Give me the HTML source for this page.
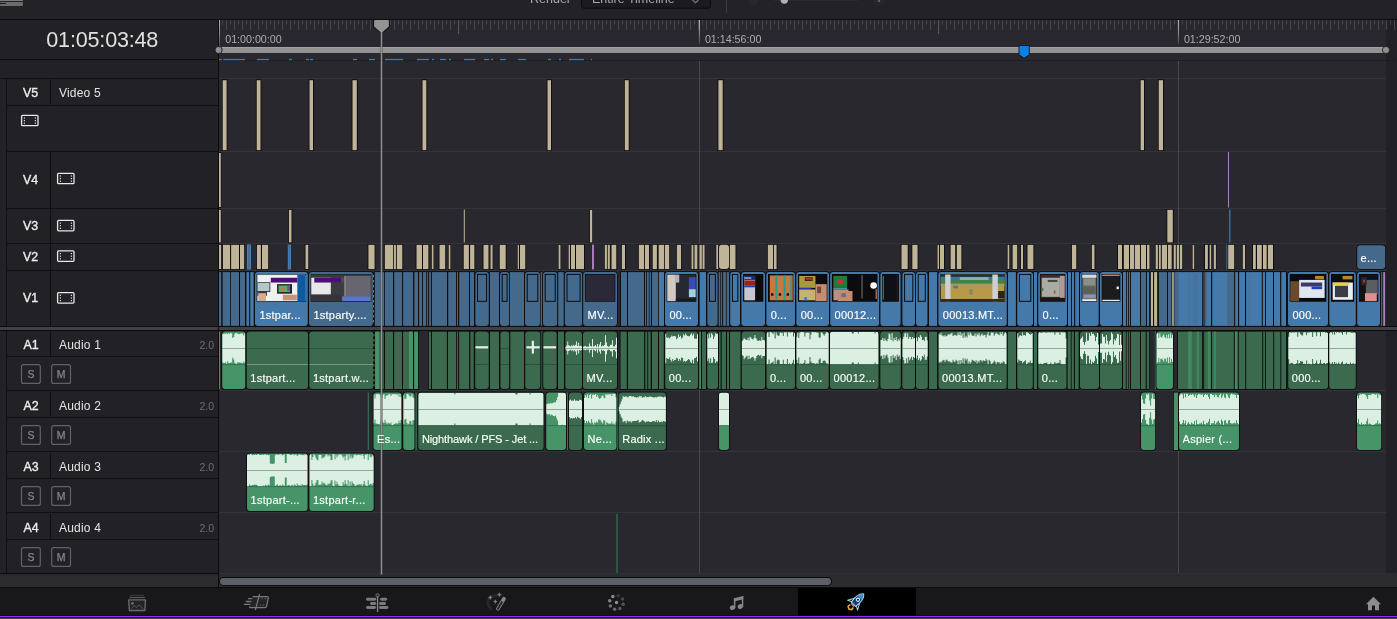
<!DOCTYPE html>
<html><head><meta charset="utf-8"><title>Timeline</title>
<style>
html,body{margin:0;padding:0;background:#28282e;}
body{width:1397px;height:619px;overflow:hidden;position:relative;font-family:"Liberation Sans",sans-serif;}
svg{position:absolute;left:0;top:0;}
.t{position:absolute;white-space:nowrap;font-family:"Liberation Sans",sans-serif;}
#tx{position:absolute;left:0;top:0;width:1397px;height:619px;will-change:transform;transform:translateZ(0);}
</style></head><body>
<svg width="1397" height="619" viewBox="0 0 1397 619" shape-rendering="auto">
<rect x="0.00" y="0.00" width="1397.00" height="619.00" fill="#28282e"/>
<rect x="0.00" y="0.00" width="1397.00" height="19.00" fill="#222227"/>
<rect x="0.00" y="19.00" width="1397.00" height="1.00" fill="#0e0e10"/>
<rect x="0.00" y="20.00" width="218.00" height="556.00" fill="#212126"/>
<rect x="1386.00" y="20.00" width="11.00" height="557.00" fill="#202025"/>
<rect x="0.00" y="59.00" width="218.00" height="1.10" fill="#0e0e10"/>
<rect x="218.00" y="60.00" width="1179.00" height="1.00" fill="#1d1d22"/>
<rect x="218.00" y="78.00" width="1168.00" height="1.00" fill="#33333a"/>
<rect x="218.00" y="20.00" width="1.00" height="556.00" fill="#0e0e10"/>
<rect x="219.00" y="151.00" width="1167.00" height="1.00" fill="#33333a"/>
<rect x="219.00" y="208.00" width="1167.00" height="1.00" fill="#33333a"/>
<rect x="219.00" y="243.00" width="1167.00" height="1.00" fill="#33333a"/>
<rect x="219.00" y="270.00" width="1167.00" height="1.00" fill="#33333a"/>
<rect x="219.00" y="390.00" width="1167.00" height="1.00" fill="#33333a"/>
<rect x="219.00" y="451.00" width="1167.00" height="1.00" fill="#33333a"/>
<rect x="219.00" y="512.00" width="1167.00" height="1.00" fill="#33333a"/>
<rect x="699.00" y="61.00" width="1.00" height="512.00" fill="#47474d"/>
<rect x="1178.00" y="61.00" width="1.00" height="512.00" fill="#47474d"/>
<rect x="222.10" y="20.00" width="1.00" height="4.80" fill="#42464d"/>
<rect x="226.10" y="20.00" width="1.00" height="9.90" fill="#464a51"/>
<rect x="230.10" y="20.00" width="1.00" height="4.80" fill="#42464d"/>
<rect x="234.10" y="20.00" width="1.00" height="9.90" fill="#464a51"/>
<rect x="238.10" y="20.00" width="1.00" height="4.80" fill="#42464d"/>
<rect x="242.10" y="20.00" width="1.00" height="9.90" fill="#464a51"/>
<rect x="246.10" y="20.00" width="1.00" height="4.80" fill="#42464d"/>
<rect x="250.10" y="20.00" width="1.00" height="9.90" fill="#464a51"/>
<rect x="254.10" y="20.00" width="1.00" height="4.80" fill="#42464d"/>
<rect x="258.10" y="20.00" width="1.00" height="9.90" fill="#464a51"/>
<rect x="262.10" y="20.00" width="1.00" height="4.80" fill="#42464d"/>
<rect x="266.10" y="20.00" width="1.00" height="9.90" fill="#464a51"/>
<rect x="270.10" y="20.00" width="1.00" height="4.80" fill="#42464d"/>
<rect x="274.10" y="20.00" width="1.00" height="9.90" fill="#464a51"/>
<rect x="278.10" y="20.00" width="1.00" height="4.80" fill="#42464d"/>
<rect x="282.10" y="20.00" width="1.00" height="9.90" fill="#464a51"/>
<rect x="286.10" y="20.00" width="1.00" height="4.80" fill="#42464d"/>
<rect x="290.10" y="20.00" width="1.00" height="9.90" fill="#464a51"/>
<rect x="294.10" y="20.00" width="1.00" height="4.80" fill="#42464d"/>
<rect x="298.10" y="20.00" width="1.00" height="9.90" fill="#464a51"/>
<rect x="302.10" y="20.00" width="1.00" height="4.80" fill="#42464d"/>
<rect x="306.10" y="20.00" width="1.00" height="9.90" fill="#464a51"/>
<rect x="310.10" y="20.00" width="1.00" height="4.80" fill="#42464d"/>
<rect x="314.10" y="20.00" width="1.00" height="9.90" fill="#464a51"/>
<rect x="318.10" y="20.00" width="1.00" height="4.80" fill="#42464d"/>
<rect x="322.10" y="20.00" width="1.00" height="9.90" fill="#464a51"/>
<rect x="326.10" y="20.00" width="1.00" height="4.80" fill="#42464d"/>
<rect x="330.10" y="20.00" width="1.00" height="9.90" fill="#464a51"/>
<rect x="334.10" y="20.00" width="1.00" height="4.80" fill="#42464d"/>
<rect x="338.10" y="20.00" width="1.00" height="9.90" fill="#464a51"/>
<rect x="342.10" y="20.00" width="1.00" height="4.80" fill="#42464d"/>
<rect x="346.10" y="20.00" width="1.00" height="9.90" fill="#464a51"/>
<rect x="350.10" y="20.00" width="1.00" height="4.80" fill="#42464d"/>
<rect x="354.10" y="20.00" width="1.00" height="9.90" fill="#464a51"/>
<rect x="358.10" y="20.00" width="1.00" height="4.80" fill="#42464d"/>
<rect x="362.10" y="20.00" width="1.00" height="9.90" fill="#464a51"/>
<rect x="366.10" y="20.00" width="1.00" height="4.80" fill="#42464d"/>
<rect x="370.10" y="20.00" width="1.00" height="9.90" fill="#464a51"/>
<rect x="374.10" y="20.00" width="1.00" height="4.80" fill="#42464d"/>
<rect x="378.10" y="20.00" width="1.00" height="9.90" fill="#464a51"/>
<rect x="382.10" y="20.00" width="1.00" height="4.80" fill="#42464d"/>
<rect x="386.10" y="20.00" width="1.00" height="9.90" fill="#464a51"/>
<rect x="390.10" y="20.00" width="1.00" height="4.80" fill="#42464d"/>
<rect x="394.10" y="20.00" width="1.00" height="9.90" fill="#464a51"/>
<rect x="398.10" y="20.00" width="1.00" height="4.80" fill="#42464d"/>
<rect x="402.10" y="20.00" width="1.00" height="9.90" fill="#464a51"/>
<rect x="406.10" y="20.00" width="1.00" height="4.80" fill="#42464d"/>
<rect x="410.10" y="20.00" width="1.00" height="9.90" fill="#464a51"/>
<rect x="414.10" y="20.00" width="1.00" height="4.80" fill="#42464d"/>
<rect x="418.10" y="20.00" width="1.00" height="9.90" fill="#464a51"/>
<rect x="422.10" y="20.00" width="1.00" height="4.80" fill="#42464d"/>
<rect x="426.10" y="20.00" width="1.00" height="9.90" fill="#464a51"/>
<rect x="430.10" y="20.00" width="1.00" height="4.80" fill="#42464d"/>
<rect x="434.10" y="20.00" width="1.00" height="9.90" fill="#464a51"/>
<rect x="438.10" y="20.00" width="1.00" height="4.80" fill="#42464d"/>
<rect x="442.10" y="20.00" width="1.00" height="9.90" fill="#464a51"/>
<rect x="446.10" y="20.00" width="1.00" height="4.80" fill="#42464d"/>
<rect x="450.10" y="20.00" width="1.00" height="9.90" fill="#464a51"/>
<rect x="454.10" y="20.00" width="1.00" height="4.80" fill="#42464d"/>
<rect x="458.10" y="20.00" width="1.00" height="9.90" fill="#464a51"/>
<rect x="462.10" y="20.00" width="1.00" height="4.80" fill="#42464d"/>
<rect x="466.10" y="20.00" width="1.00" height="9.90" fill="#464a51"/>
<rect x="470.10" y="20.00" width="1.00" height="4.80" fill="#42464d"/>
<rect x="474.10" y="20.00" width="1.00" height="9.90" fill="#464a51"/>
<rect x="478.10" y="20.00" width="1.00" height="4.80" fill="#42464d"/>
<rect x="482.10" y="20.00" width="1.00" height="9.90" fill="#464a51"/>
<rect x="486.10" y="20.00" width="1.00" height="4.80" fill="#42464d"/>
<rect x="490.10" y="20.00" width="1.00" height="9.90" fill="#464a51"/>
<rect x="494.10" y="20.00" width="1.00" height="4.80" fill="#42464d"/>
<rect x="498.10" y="20.00" width="1.00" height="9.90" fill="#464a51"/>
<rect x="502.10" y="20.00" width="1.00" height="4.80" fill="#42464d"/>
<rect x="506.10" y="20.00" width="1.00" height="9.90" fill="#464a51"/>
<rect x="510.10" y="20.00" width="1.00" height="4.80" fill="#42464d"/>
<rect x="514.10" y="20.00" width="1.00" height="9.90" fill="#464a51"/>
<rect x="518.10" y="20.00" width="1.00" height="4.80" fill="#42464d"/>
<rect x="522.10" y="20.00" width="1.00" height="9.90" fill="#464a51"/>
<rect x="526.10" y="20.00" width="1.00" height="4.80" fill="#42464d"/>
<rect x="530.10" y="20.00" width="1.00" height="9.90" fill="#464a51"/>
<rect x="534.10" y="20.00" width="1.00" height="4.80" fill="#42464d"/>
<rect x="538.10" y="20.00" width="1.00" height="9.90" fill="#464a51"/>
<rect x="542.10" y="20.00" width="1.00" height="4.80" fill="#42464d"/>
<rect x="546.10" y="20.00" width="1.00" height="9.90" fill="#464a51"/>
<rect x="550.10" y="20.00" width="1.00" height="4.80" fill="#42464d"/>
<rect x="554.10" y="20.00" width="1.00" height="9.90" fill="#464a51"/>
<rect x="558.10" y="20.00" width="1.00" height="4.80" fill="#42464d"/>
<rect x="562.10" y="20.00" width="1.00" height="9.90" fill="#464a51"/>
<rect x="566.10" y="20.00" width="1.00" height="4.80" fill="#42464d"/>
<rect x="570.10" y="20.00" width="1.00" height="9.90" fill="#464a51"/>
<rect x="574.10" y="20.00" width="1.00" height="4.80" fill="#42464d"/>
<rect x="578.10" y="20.00" width="1.00" height="9.90" fill="#464a51"/>
<rect x="582.10" y="20.00" width="1.00" height="4.80" fill="#42464d"/>
<rect x="586.10" y="20.00" width="1.00" height="9.90" fill="#464a51"/>
<rect x="590.10" y="20.00" width="1.00" height="4.80" fill="#42464d"/>
<rect x="594.10" y="20.00" width="1.00" height="9.90" fill="#464a51"/>
<rect x="598.10" y="20.00" width="1.00" height="4.80" fill="#42464d"/>
<rect x="602.10" y="20.00" width="1.00" height="9.90" fill="#464a51"/>
<rect x="606.10" y="20.00" width="1.00" height="4.80" fill="#42464d"/>
<rect x="610.10" y="20.00" width="1.00" height="9.90" fill="#464a51"/>
<rect x="614.10" y="20.00" width="1.00" height="4.80" fill="#42464d"/>
<rect x="618.10" y="20.00" width="1.00" height="9.90" fill="#464a51"/>
<rect x="622.10" y="20.00" width="1.00" height="4.80" fill="#42464d"/>
<rect x="626.10" y="20.00" width="1.00" height="9.90" fill="#464a51"/>
<rect x="630.10" y="20.00" width="1.00" height="4.80" fill="#42464d"/>
<rect x="634.10" y="20.00" width="1.00" height="9.90" fill="#464a51"/>
<rect x="638.10" y="20.00" width="1.00" height="4.80" fill="#42464d"/>
<rect x="642.10" y="20.00" width="1.00" height="9.90" fill="#464a51"/>
<rect x="646.10" y="20.00" width="1.00" height="4.80" fill="#42464d"/>
<rect x="650.10" y="20.00" width="1.00" height="9.90" fill="#464a51"/>
<rect x="654.10" y="20.00" width="1.00" height="4.80" fill="#42464d"/>
<rect x="658.10" y="20.00" width="1.00" height="9.90" fill="#464a51"/>
<rect x="662.10" y="20.00" width="1.00" height="4.80" fill="#42464d"/>
<rect x="666.10" y="20.00" width="1.00" height="9.90" fill="#464a51"/>
<rect x="670.10" y="20.00" width="1.00" height="4.80" fill="#42464d"/>
<rect x="674.10" y="20.00" width="1.00" height="9.90" fill="#464a51"/>
<rect x="678.10" y="20.00" width="1.00" height="4.80" fill="#42464d"/>
<rect x="682.10" y="20.00" width="1.00" height="9.90" fill="#464a51"/>
<rect x="686.10" y="20.00" width="1.00" height="4.80" fill="#42464d"/>
<rect x="690.10" y="20.00" width="1.00" height="9.90" fill="#464a51"/>
<rect x="694.10" y="20.00" width="1.00" height="4.80" fill="#42464d"/>
<rect x="698.10" y="20.00" width="1.00" height="9.90" fill="#464a51"/>
<rect x="702.10" y="20.00" width="1.00" height="4.80" fill="#42464d"/>
<rect x="706.10" y="20.00" width="1.00" height="9.90" fill="#464a51"/>
<rect x="710.10" y="20.00" width="1.00" height="4.80" fill="#42464d"/>
<rect x="714.10" y="20.00" width="1.00" height="9.90" fill="#464a51"/>
<rect x="718.10" y="20.00" width="1.00" height="4.80" fill="#42464d"/>
<rect x="722.10" y="20.00" width="1.00" height="9.90" fill="#464a51"/>
<rect x="726.10" y="20.00" width="1.00" height="4.80" fill="#42464d"/>
<rect x="730.10" y="20.00" width="1.00" height="9.90" fill="#464a51"/>
<rect x="734.10" y="20.00" width="1.00" height="4.80" fill="#42464d"/>
<rect x="738.10" y="20.00" width="1.00" height="9.90" fill="#464a51"/>
<rect x="742.10" y="20.00" width="1.00" height="4.80" fill="#42464d"/>
<rect x="746.10" y="20.00" width="1.00" height="9.90" fill="#464a51"/>
<rect x="750.10" y="20.00" width="1.00" height="4.80" fill="#42464d"/>
<rect x="754.10" y="20.00" width="1.00" height="9.90" fill="#464a51"/>
<rect x="758.10" y="20.00" width="1.00" height="4.80" fill="#42464d"/>
<rect x="762.10" y="20.00" width="1.00" height="9.90" fill="#464a51"/>
<rect x="766.10" y="20.00" width="1.00" height="4.80" fill="#42464d"/>
<rect x="770.10" y="20.00" width="1.00" height="9.90" fill="#464a51"/>
<rect x="774.10" y="20.00" width="1.00" height="4.80" fill="#42464d"/>
<rect x="778.10" y="20.00" width="1.00" height="9.90" fill="#464a51"/>
<rect x="782.10" y="20.00" width="1.00" height="4.80" fill="#42464d"/>
<rect x="786.10" y="20.00" width="1.00" height="9.90" fill="#464a51"/>
<rect x="790.10" y="20.00" width="1.00" height="4.80" fill="#42464d"/>
<rect x="794.10" y="20.00" width="1.00" height="9.90" fill="#464a51"/>
<rect x="798.10" y="20.00" width="1.00" height="4.80" fill="#42464d"/>
<rect x="802.10" y="20.00" width="1.00" height="9.90" fill="#464a51"/>
<rect x="806.10" y="20.00" width="1.00" height="4.80" fill="#42464d"/>
<rect x="810.10" y="20.00" width="1.00" height="9.90" fill="#464a51"/>
<rect x="814.10" y="20.00" width="1.00" height="4.80" fill="#42464d"/>
<rect x="818.10" y="20.00" width="1.00" height="9.90" fill="#464a51"/>
<rect x="822.10" y="20.00" width="1.00" height="4.80" fill="#42464d"/>
<rect x="826.10" y="20.00" width="1.00" height="9.90" fill="#464a51"/>
<rect x="830.10" y="20.00" width="1.00" height="4.80" fill="#42464d"/>
<rect x="834.10" y="20.00" width="1.00" height="9.90" fill="#464a51"/>
<rect x="838.10" y="20.00" width="1.00" height="4.80" fill="#42464d"/>
<rect x="842.10" y="20.00" width="1.00" height="9.90" fill="#464a51"/>
<rect x="846.10" y="20.00" width="1.00" height="4.80" fill="#42464d"/>
<rect x="850.10" y="20.00" width="1.00" height="9.90" fill="#464a51"/>
<rect x="854.10" y="20.00" width="1.00" height="4.80" fill="#42464d"/>
<rect x="858.10" y="20.00" width="1.00" height="9.90" fill="#464a51"/>
<rect x="862.10" y="20.00" width="1.00" height="4.80" fill="#42464d"/>
<rect x="866.10" y="20.00" width="1.00" height="9.90" fill="#464a51"/>
<rect x="870.10" y="20.00" width="1.00" height="4.80" fill="#42464d"/>
<rect x="874.10" y="20.00" width="1.00" height="9.90" fill="#464a51"/>
<rect x="878.10" y="20.00" width="1.00" height="4.80" fill="#42464d"/>
<rect x="882.10" y="20.00" width="1.00" height="9.90" fill="#464a51"/>
<rect x="886.10" y="20.00" width="1.00" height="4.80" fill="#42464d"/>
<rect x="890.10" y="20.00" width="1.00" height="9.90" fill="#464a51"/>
<rect x="894.10" y="20.00" width="1.00" height="4.80" fill="#42464d"/>
<rect x="898.10" y="20.00" width="1.00" height="9.90" fill="#464a51"/>
<rect x="902.10" y="20.00" width="1.00" height="4.80" fill="#42464d"/>
<rect x="906.10" y="20.00" width="1.00" height="9.90" fill="#464a51"/>
<rect x="910.10" y="20.00" width="1.00" height="4.80" fill="#42464d"/>
<rect x="914.10" y="20.00" width="1.00" height="9.90" fill="#464a51"/>
<rect x="918.10" y="20.00" width="1.00" height="4.80" fill="#42464d"/>
<rect x="922.10" y="20.00" width="1.00" height="9.90" fill="#464a51"/>
<rect x="926.10" y="20.00" width="1.00" height="4.80" fill="#42464d"/>
<rect x="930.10" y="20.00" width="1.00" height="9.90" fill="#464a51"/>
<rect x="934.10" y="20.00" width="1.00" height="4.80" fill="#42464d"/>
<rect x="938.10" y="20.00" width="1.00" height="9.90" fill="#464a51"/>
<rect x="942.10" y="20.00" width="1.00" height="4.80" fill="#42464d"/>
<rect x="946.10" y="20.00" width="1.00" height="9.90" fill="#464a51"/>
<rect x="950.10" y="20.00" width="1.00" height="4.80" fill="#42464d"/>
<rect x="954.10" y="20.00" width="1.00" height="9.90" fill="#464a51"/>
<rect x="958.10" y="20.00" width="1.00" height="4.80" fill="#42464d"/>
<rect x="962.10" y="20.00" width="1.00" height="9.90" fill="#464a51"/>
<rect x="966.10" y="20.00" width="1.00" height="4.80" fill="#42464d"/>
<rect x="970.10" y="20.00" width="1.00" height="9.90" fill="#464a51"/>
<rect x="974.10" y="20.00" width="1.00" height="4.80" fill="#42464d"/>
<rect x="978.10" y="20.00" width="1.00" height="9.90" fill="#464a51"/>
<rect x="982.10" y="20.00" width="1.00" height="4.80" fill="#42464d"/>
<rect x="986.10" y="20.00" width="1.00" height="9.90" fill="#464a51"/>
<rect x="990.10" y="20.00" width="1.00" height="4.80" fill="#42464d"/>
<rect x="994.10" y="20.00" width="1.00" height="9.90" fill="#464a51"/>
<rect x="998.10" y="20.00" width="1.00" height="4.80" fill="#42464d"/>
<rect x="1002.10" y="20.00" width="1.00" height="9.90" fill="#464a51"/>
<rect x="1006.10" y="20.00" width="1.00" height="4.80" fill="#42464d"/>
<rect x="1010.10" y="20.00" width="1.00" height="9.90" fill="#464a51"/>
<rect x="1014.10" y="20.00" width="1.00" height="4.80" fill="#42464d"/>
<rect x="1018.10" y="20.00" width="1.00" height="9.90" fill="#464a51"/>
<rect x="1022.10" y="20.00" width="1.00" height="4.80" fill="#42464d"/>
<rect x="1026.10" y="20.00" width="1.00" height="9.90" fill="#464a51"/>
<rect x="1030.10" y="20.00" width="1.00" height="4.80" fill="#42464d"/>
<rect x="1034.10" y="20.00" width="1.00" height="9.90" fill="#464a51"/>
<rect x="1038.10" y="20.00" width="1.00" height="4.80" fill="#42464d"/>
<rect x="1042.10" y="20.00" width="1.00" height="9.90" fill="#464a51"/>
<rect x="1046.10" y="20.00" width="1.00" height="4.80" fill="#42464d"/>
<rect x="1050.10" y="20.00" width="1.00" height="9.90" fill="#464a51"/>
<rect x="1054.10" y="20.00" width="1.00" height="4.80" fill="#42464d"/>
<rect x="1058.10" y="20.00" width="1.00" height="9.90" fill="#464a51"/>
<rect x="1062.10" y="20.00" width="1.00" height="4.80" fill="#42464d"/>
<rect x="1066.10" y="20.00" width="1.00" height="9.90" fill="#464a51"/>
<rect x="1070.10" y="20.00" width="1.00" height="4.80" fill="#42464d"/>
<rect x="1074.10" y="20.00" width="1.00" height="9.90" fill="#464a51"/>
<rect x="1078.10" y="20.00" width="1.00" height="4.80" fill="#42464d"/>
<rect x="1082.10" y="20.00" width="1.00" height="9.90" fill="#464a51"/>
<rect x="1086.10" y="20.00" width="1.00" height="4.80" fill="#42464d"/>
<rect x="1090.10" y="20.00" width="1.00" height="9.90" fill="#464a51"/>
<rect x="1094.10" y="20.00" width="1.00" height="4.80" fill="#42464d"/>
<rect x="1098.10" y="20.00" width="1.00" height="9.90" fill="#464a51"/>
<rect x="1102.10" y="20.00" width="1.00" height="4.80" fill="#42464d"/>
<rect x="1106.10" y="20.00" width="1.00" height="9.90" fill="#464a51"/>
<rect x="1110.10" y="20.00" width="1.00" height="4.80" fill="#42464d"/>
<rect x="1114.10" y="20.00" width="1.00" height="9.90" fill="#464a51"/>
<rect x="1118.10" y="20.00" width="1.00" height="4.80" fill="#42464d"/>
<rect x="1122.10" y="20.00" width="1.00" height="9.90" fill="#464a51"/>
<rect x="1126.10" y="20.00" width="1.00" height="4.80" fill="#42464d"/>
<rect x="1130.10" y="20.00" width="1.00" height="9.90" fill="#464a51"/>
<rect x="1134.10" y="20.00" width="1.00" height="4.80" fill="#42464d"/>
<rect x="1138.10" y="20.00" width="1.00" height="9.90" fill="#464a51"/>
<rect x="1142.10" y="20.00" width="1.00" height="4.80" fill="#42464d"/>
<rect x="1146.10" y="20.00" width="1.00" height="9.90" fill="#464a51"/>
<rect x="1150.10" y="20.00" width="1.00" height="4.80" fill="#42464d"/>
<rect x="1154.10" y="20.00" width="1.00" height="9.90" fill="#464a51"/>
<rect x="1158.10" y="20.00" width="1.00" height="4.80" fill="#42464d"/>
<rect x="1162.10" y="20.00" width="1.00" height="9.90" fill="#464a51"/>
<rect x="1166.10" y="20.00" width="1.00" height="4.80" fill="#42464d"/>
<rect x="1170.10" y="20.00" width="1.00" height="9.90" fill="#464a51"/>
<rect x="1174.10" y="20.00" width="1.00" height="4.80" fill="#42464d"/>
<rect x="1178.10" y="20.00" width="1.00" height="9.90" fill="#464a51"/>
<rect x="1182.10" y="20.00" width="1.00" height="4.80" fill="#42464d"/>
<rect x="1186.10" y="20.00" width="1.00" height="9.90" fill="#464a51"/>
<rect x="1190.10" y="20.00" width="1.00" height="4.80" fill="#42464d"/>
<rect x="1194.10" y="20.00" width="1.00" height="9.90" fill="#464a51"/>
<rect x="1198.10" y="20.00" width="1.00" height="4.80" fill="#42464d"/>
<rect x="1202.10" y="20.00" width="1.00" height="9.90" fill="#464a51"/>
<rect x="1206.10" y="20.00" width="1.00" height="4.80" fill="#42464d"/>
<rect x="1210.10" y="20.00" width="1.00" height="9.90" fill="#464a51"/>
<rect x="1214.10" y="20.00" width="1.00" height="4.80" fill="#42464d"/>
<rect x="1218.10" y="20.00" width="1.00" height="9.90" fill="#464a51"/>
<rect x="1222.10" y="20.00" width="1.00" height="4.80" fill="#42464d"/>
<rect x="1226.10" y="20.00" width="1.00" height="9.90" fill="#464a51"/>
<rect x="1230.10" y="20.00" width="1.00" height="4.80" fill="#42464d"/>
<rect x="1234.10" y="20.00" width="1.00" height="9.90" fill="#464a51"/>
<rect x="1238.10" y="20.00" width="1.00" height="4.80" fill="#42464d"/>
<rect x="1242.10" y="20.00" width="1.00" height="9.90" fill="#464a51"/>
<rect x="1246.10" y="20.00" width="1.00" height="4.80" fill="#42464d"/>
<rect x="1250.10" y="20.00" width="1.00" height="9.90" fill="#464a51"/>
<rect x="1254.10" y="20.00" width="1.00" height="4.80" fill="#42464d"/>
<rect x="1258.10" y="20.00" width="1.00" height="9.90" fill="#464a51"/>
<rect x="1262.10" y="20.00" width="1.00" height="4.80" fill="#42464d"/>
<rect x="1266.10" y="20.00" width="1.00" height="9.90" fill="#464a51"/>
<rect x="1270.10" y="20.00" width="1.00" height="4.80" fill="#42464d"/>
<rect x="1274.10" y="20.00" width="1.00" height="9.90" fill="#464a51"/>
<rect x="1278.10" y="20.00" width="1.00" height="4.80" fill="#42464d"/>
<rect x="1282.10" y="20.00" width="1.00" height="9.90" fill="#464a51"/>
<rect x="1286.10" y="20.00" width="1.00" height="4.80" fill="#42464d"/>
<rect x="1290.10" y="20.00" width="1.00" height="9.90" fill="#464a51"/>
<rect x="1294.10" y="20.00" width="1.00" height="4.80" fill="#42464d"/>
<rect x="1298.10" y="20.00" width="1.00" height="9.90" fill="#464a51"/>
<rect x="1302.10" y="20.00" width="1.00" height="4.80" fill="#42464d"/>
<rect x="1306.10" y="20.00" width="1.00" height="9.90" fill="#464a51"/>
<rect x="1310.10" y="20.00" width="1.00" height="4.80" fill="#42464d"/>
<rect x="1314.10" y="20.00" width="1.00" height="9.90" fill="#464a51"/>
<rect x="1318.10" y="20.00" width="1.00" height="4.80" fill="#42464d"/>
<rect x="1322.10" y="20.00" width="1.00" height="9.90" fill="#464a51"/>
<rect x="1326.10" y="20.00" width="1.00" height="4.80" fill="#42464d"/>
<rect x="1330.10" y="20.00" width="1.00" height="9.90" fill="#464a51"/>
<rect x="1334.10" y="20.00" width="1.00" height="4.80" fill="#42464d"/>
<rect x="1338.10" y="20.00" width="1.00" height="9.90" fill="#464a51"/>
<rect x="1342.10" y="20.00" width="1.00" height="4.80" fill="#42464d"/>
<rect x="1346.10" y="20.00" width="1.00" height="9.90" fill="#464a51"/>
<rect x="1350.10" y="20.00" width="1.00" height="4.80" fill="#42464d"/>
<rect x="1354.10" y="20.00" width="1.00" height="9.90" fill="#464a51"/>
<rect x="1358.10" y="20.00" width="1.00" height="4.80" fill="#42464d"/>
<rect x="1362.10" y="20.00" width="1.00" height="9.90" fill="#464a51"/>
<rect x="1366.10" y="20.00" width="1.00" height="4.80" fill="#42464d"/>
<rect x="1370.10" y="20.00" width="1.00" height="9.90" fill="#464a51"/>
<rect x="1374.10" y="20.00" width="1.00" height="4.80" fill="#42464d"/>
<rect x="1378.10" y="20.00" width="1.00" height="9.90" fill="#464a51"/>
<rect x="1382.10" y="20.00" width="1.00" height="4.80" fill="#42464d"/>
<rect x="1386.10" y="20.00" width="1.00" height="9.90" fill="#464a51"/>
<rect x="1390.10" y="20.00" width="1.00" height="4.80" fill="#42464d"/>
<rect x="1394.10" y="20.00" width="1.00" height="9.90" fill="#464a51"/>
<rect x="458.10" y="20.00" width="1.00" height="14.00" fill="#58585e"/>
<rect x="938.10" y="20.00" width="1.00" height="14.00" fill="#58585e"/>
<defs><linearGradient id="mt" x1="0" y1="0" x2="0" y2="1"><stop offset="0" stop-color="#c4c4c4"/><stop offset="0.6" stop-color="#8a8a8c"/><stop offset="1" stop-color="#48484c"/></linearGradient></defs>
<rect x="218.90" y="20.00" width="1.00" height="27.00" fill="url(#mt)"/>
<rect x="698.90" y="20.00" width="1.00" height="24.00" fill="url(#mt)"/>
<rect x="1177.90" y="20.00" width="1.00" height="24.00" fill="url(#mt)"/>
<rect x="219.00" y="47.00" width="1165.00" height="6.00" fill="#929292"/>
<rect x="219.00" y="47.00" width="1165.00" height="1.00" fill="#a2a2a2"/>
<circle cx="1386" cy="50" r="3.6" fill="#8e8e8e" stroke="#1a1a1c" stroke-width="0.8"/>
<path d="M1019 46.6 q0 -1.1 1.1 -1.1 h8.1 q1.1 0 1.1 1.1 v8.2 l-5.15 3.5 l-5.15 -3.5 z" fill="#0a80e2" stroke="#0a0a0c" stroke-width="0.8"/>
<rect x="219.00" y="58.90" width="2.90" height="1.30" fill="#1b86e2"/>
<rect x="223.20" y="58.90" width="21.90" height="1.30" fill="#1b86e2"/>
<rect x="256.90" y="58.90" width="12.20" height="1.30" fill="#1b86e2"/>
<rect x="289.00" y="58.90" width="3.00" height="1.30" fill="#1b86e2"/>
<rect x="306.00" y="58.90" width="3.00" height="1.30" fill="#1b86e2"/>
<rect x="310.00" y="58.90" width="3.20" height="1.30" fill="#1b86e2"/>
<rect x="353.00" y="58.90" width="4.00" height="1.30" fill="#1b86e2"/>
<rect x="369.00" y="58.90" width="6.00" height="1.30" fill="#1b86e2"/>
<rect x="385.00" y="58.90" width="18.00" height="1.30" fill="#1b86e2"/>
<rect x="417.00" y="58.90" width="12.00" height="1.30" fill="#1b86e2"/>
<rect x="432.00" y="58.90" width="2.00" height="1.30" fill="#1b86e2"/>
<rect x="440.00" y="58.90" width="6.00" height="1.30" fill="#1b86e2"/>
<rect x="449.00" y="58.90" width="2.00" height="1.30" fill="#1b86e2"/>
<rect x="464.00" y="58.90" width="11.20" height="1.30" fill="#1b86e2"/>
<rect x="484.00" y="58.90" width="5.20" height="1.30" fill="#1b86e2"/>
<rect x="491.00" y="58.90" width="2.00" height="1.30" fill="#1b86e2"/>
<rect x="500.00" y="58.90" width="6.00" height="1.30" fill="#1b86e2"/>
<rect x="518.00" y="58.90" width="8.00" height="1.30" fill="#1b86e2"/>
<rect x="547.90" y="58.90" width="3.10" height="1.30" fill="#1b86e2"/>
<rect x="559.00" y="58.90" width="2.00" height="1.30" fill="#1b86e2"/>
<rect x="569.00" y="58.90" width="15.00" height="1.30" fill="#1b86e2"/>
<rect x="590.80" y="58.90" width="1.20" height="1.30" fill="#1b86e2"/>
<rect x="221.90" y="79.40" width="5.50" height="71.60" fill="#0b0b0d"/>
<rect x="222.70" y="80.20" width="3.90" height="70.00" fill="#bfb498"/>
<rect x="255.90" y="79.40" width="5.40" height="71.60" fill="#0b0b0d"/>
<rect x="256.70" y="80.20" width="3.80" height="70.00" fill="#bfb498"/>
<rect x="308.70" y="79.40" width="5.10" height="71.60" fill="#0b0b0d"/>
<rect x="309.50" y="80.20" width="3.50" height="70.00" fill="#bfb498"/>
<rect x="351.70" y="79.40" width="5.90" height="71.60" fill="#0b0b0d"/>
<rect x="352.50" y="80.20" width="4.30" height="70.00" fill="#bfb498"/>
<rect x="421.70" y="79.40" width="5.40" height="71.60" fill="#0b0b0d"/>
<rect x="422.50" y="80.20" width="3.80" height="70.00" fill="#bfb498"/>
<rect x="546.70" y="79.40" width="5.10" height="71.60" fill="#0b0b0d"/>
<rect x="547.50" y="80.20" width="3.50" height="70.00" fill="#bfb498"/>
<rect x="624.00" y="79.40" width="5.50" height="71.60" fill="#0b0b0d"/>
<rect x="624.80" y="80.20" width="3.90" height="70.00" fill="#bfb498"/>
<rect x="717.60" y="79.40" width="5.90" height="71.60" fill="#0b0b0d"/>
<rect x="718.40" y="80.20" width="4.30" height="70.00" fill="#bfb498"/>
<rect x="1139.80" y="79.40" width="5.00" height="71.60" fill="#0b0b0d"/>
<rect x="1140.60" y="80.20" width="3.40" height="70.00" fill="#bfb498"/>
<rect x="1157.90" y="79.40" width="5.90" height="71.60" fill="#0b0b0d"/>
<rect x="1158.70" y="80.20" width="4.30" height="70.00" fill="#bfb498"/>
<rect x="218.35" y="152.20" width="2.90" height="55.60" fill="#0b0b0d"/>
<rect x="218.80" y="153.00" width="2.00" height="54.00" fill="#bfb498"/>
<rect x="1228.00" y="152.00" width="1.00" height="55.50" fill="#a884b8"/>
<rect x="218.35" y="209.00" width="2.90" height="34.20" fill="#0b0b0d"/>
<rect x="218.80" y="209.80" width="2.00" height="32.60" fill="#bfb498"/>
<rect x="288.10" y="209.00" width="4.20" height="34.20" fill="#0b0b0d"/>
<rect x="288.90" y="209.80" width="2.60" height="32.60" fill="#bfb498"/>
<rect x="463.80" y="209.50" width="1.00" height="33.00" fill="#bfb498"/>
<rect x="589.55" y="209.00" width="3.10" height="34.20" fill="#0b0b0d"/>
<rect x="590.00" y="209.80" width="2.20" height="32.60" fill="#bfb498"/>
<rect x="1166.50" y="209.00" width="7.10" height="34.20" fill="#0b0b0d"/>
<rect x="1167.30" y="209.80" width="5.50" height="32.60" fill="#bfb498"/>
<rect x="1229.20" y="209.50" width="1.20" height="33.00" fill="#4a7aa8"/>
<rect x="218.35" y="244.00" width="3.20" height="25.90" fill="#0b0b0d"/>
<rect x="218.80" y="244.80" width="2.30" height="24.30" fill="#bfb498"/>
<rect x="222.10" y="244.00" width="8.90" height="25.90" fill="#0b0b0d"/>
<rect x="222.90" y="244.80" width="7.30" height="24.30" fill="#bfb498"/>
<rect x="230.30" y="244.00" width="9.50" height="25.90" fill="#0b0b0d"/>
<rect x="231.10" y="244.80" width="7.90" height="24.30" fill="#bfb498"/>
<rect x="239.20" y="244.00" width="5.80" height="25.90" fill="#0b0b0d"/>
<rect x="240.00" y="244.80" width="4.20" height="24.30" fill="#bfb498"/>
<rect x="247.00" y="244.60" width="4.00" height="24.80" fill="#4a7eb0"/>
<rect x="248.00" y="244.60" width="2.00" height="24.80" fill="#456e96"/>
<rect x="256.10" y="244.00" width="5.60" height="25.90" fill="#0b0b0d"/>
<rect x="256.90" y="244.80" width="4.00" height="24.30" fill="#bfb498"/>
<rect x="261.20" y="244.00" width="7.80" height="25.90" fill="#0b0b0d"/>
<rect x="262.00" y="244.80" width="6.20" height="24.30" fill="#bfb498"/>
<rect x="287.80" y="244.60" width="3.20" height="24.80" fill="#4a7eb0"/>
<rect x="288.80" y="244.60" width="1.20" height="24.80" fill="#456e96"/>
<rect x="304.70" y="244.00" width="4.40" height="25.90" fill="#0b0b0d"/>
<rect x="305.50" y="244.80" width="2.80" height="24.30" fill="#bfb498"/>
<rect x="367.60" y="244.00" width="7.80" height="25.90" fill="#0b0b0d"/>
<rect x="368.40" y="244.80" width="6.20" height="24.30" fill="#bfb498"/>
<rect x="384.00" y="244.00" width="10.00" height="25.90" fill="#0b0b0d"/>
<rect x="384.80" y="244.80" width="8.40" height="24.30" fill="#bfb498"/>
<rect x="393.45" y="244.00" width="2.90" height="25.90" fill="#0b0b0d"/>
<rect x="393.90" y="244.80" width="2.00" height="24.30" fill="#bfb498"/>
<rect x="396.00" y="244.00" width="7.10" height="25.90" fill="#0b0b0d"/>
<rect x="396.80" y="244.80" width="5.50" height="24.30" fill="#bfb498"/>
<rect x="415.70" y="244.00" width="7.10" height="25.90" fill="#0b0b0d"/>
<rect x="416.50" y="244.80" width="5.50" height="24.30" fill="#bfb498"/>
<rect x="422.20" y="244.00" width="7.00" height="25.90" fill="#0b0b0d"/>
<rect x="423.00" y="244.80" width="5.40" height="24.30" fill="#bfb498"/>
<rect x="431.35" y="244.00" width="2.60" height="25.90" fill="#0b0b0d"/>
<rect x="431.80" y="244.80" width="1.70" height="24.30" fill="#bfb498"/>
<rect x="438.70" y="244.00" width="7.30" height="25.90" fill="#0b0b0d"/>
<rect x="439.50" y="244.80" width="5.70" height="24.30" fill="#bfb498"/>
<rect x="448.25" y="244.00" width="2.60" height="25.90" fill="#0b0b0d"/>
<rect x="448.70" y="244.80" width="1.70" height="24.30" fill="#bfb498"/>
<rect x="462.90" y="244.00" width="6.80" height="25.90" fill="#0b0b0d"/>
<rect x="463.70" y="244.80" width="5.20" height="24.30" fill="#bfb498"/>
<rect x="469.30" y="244.00" width="5.90" height="25.90" fill="#0b0b0d"/>
<rect x="470.10" y="244.80" width="4.30" height="24.30" fill="#bfb498"/>
<rect x="482.70" y="244.00" width="6.60" height="25.90" fill="#0b0b0d"/>
<rect x="483.50" y="244.80" width="5.00" height="24.30" fill="#bfb498"/>
<rect x="490.05" y="244.00" width="3.00" height="25.90" fill="#0b0b0d"/>
<rect x="490.50" y="244.80" width="2.10" height="24.30" fill="#bfb498"/>
<rect x="498.90" y="244.00" width="7.60" height="25.90" fill="#0b0b0d"/>
<rect x="499.70" y="244.80" width="6.00" height="24.30" fill="#bfb498"/>
<rect x="517.25" y="244.00" width="2.20" height="25.90" fill="#0b0b0d"/>
<rect x="517.70" y="244.80" width="1.30" height="24.30" fill="#bfb498"/>
<rect x="519.20" y="244.00" width="6.90" height="25.90" fill="#0b0b0d"/>
<rect x="520.00" y="244.80" width="5.30" height="24.30" fill="#bfb498"/>
<rect x="558.15" y="244.00" width="2.80" height="25.90" fill="#0b0b0d"/>
<rect x="558.60" y="244.80" width="1.90" height="24.30" fill="#bfb498"/>
<rect x="568.15" y="244.00" width="2.60" height="25.90" fill="#0b0b0d"/>
<rect x="568.60" y="244.80" width="1.70" height="24.30" fill="#bfb498"/>
<rect x="570.20" y="244.00" width="5.60" height="25.90" fill="#0b0b0d"/>
<rect x="571.00" y="244.80" width="4.00" height="24.30" fill="#bfb498"/>
<rect x="575.20" y="244.00" width="9.60" height="25.90" fill="#0b0b0d"/>
<rect x="576.00" y="244.80" width="8.00" height="24.30" fill="#bfb498"/>
<rect x="592.00" y="244.60" width="2.00" height="24.80" fill="#a97bbd"/>
<rect x="604.35" y="244.00" width="3.00" height="25.90" fill="#0b0b0d"/>
<rect x="604.80" y="244.80" width="2.10" height="24.30" fill="#bfb498"/>
<rect x="607.25" y="244.00" width="3.00" height="25.90" fill="#0b0b0d"/>
<rect x="607.70" y="244.80" width="2.10" height="24.30" fill="#bfb498"/>
<rect x="610.70" y="244.00" width="6.40" height="25.90" fill="#0b0b0d"/>
<rect x="611.50" y="244.80" width="4.80" height="24.30" fill="#bfb498"/>
<rect x="621.00" y="244.00" width="4.80" height="25.90" fill="#0b0b0d"/>
<rect x="621.80" y="244.80" width="3.20" height="24.30" fill="#bfb498"/>
<rect x="638.00" y="244.00" width="7.00" height="25.90" fill="#0b0b0d"/>
<rect x="638.80" y="244.80" width="5.40" height="24.30" fill="#bfb498"/>
<rect x="644.10" y="244.00" width="5.70" height="25.90" fill="#0b0b0d"/>
<rect x="644.90" y="244.80" width="4.10" height="24.30" fill="#bfb498"/>
<rect x="651.90" y="244.00" width="5.80" height="25.90" fill="#0b0b0d"/>
<rect x="652.70" y="244.80" width="4.20" height="24.30" fill="#bfb498"/>
<rect x="657.80" y="244.00" width="7.00" height="25.90" fill="#0b0b0d"/>
<rect x="658.60" y="244.80" width="5.40" height="24.30" fill="#bfb498"/>
<rect x="664.00" y="244.00" width="6.00" height="25.90" fill="#0b0b0d"/>
<rect x="664.80" y="244.80" width="4.40" height="24.30" fill="#bfb498"/>
<rect x="676.00" y="244.00" width="5.90" height="25.90" fill="#0b0b0d"/>
<rect x="676.80" y="244.80" width="4.30" height="24.30" fill="#bfb498"/>
<rect x="691.05" y="244.00" width="3.00" height="25.90" fill="#0b0b0d"/>
<rect x="691.50" y="244.80" width="2.10" height="24.30" fill="#bfb498"/>
<rect x="693.70" y="244.00" width="4.50" height="25.90" fill="#0b0b0d"/>
<rect x="694.50" y="244.80" width="2.90" height="24.30" fill="#bfb498"/>
<rect x="698.95" y="244.00" width="3.30" height="25.90" fill="#0b0b0d"/>
<rect x="699.40" y="244.80" width="2.40" height="24.30" fill="#bfb498"/>
<rect x="702.05" y="244.00" width="3.00" height="25.90" fill="#0b0b0d"/>
<rect x="702.50" y="244.80" width="2.10" height="24.30" fill="#bfb498"/>
<rect x="715.85" y="244.00" width="2.90" height="25.90" fill="#0b0b0d"/>
<rect x="716.30" y="244.80" width="2.00" height="24.30" fill="#bfb498"/>
<rect x="718.20" y="244.00" width="11.60" height="25.90" fill="#0b0b0d" rx="3.8"/>
<rect x="719.00" y="244.80" width="10.00" height="24.30" fill="#bfb498" rx="3"/>
<rect x="729.00" y="244.00" width="7.30" height="25.90" fill="#0b0b0d"/>
<rect x="729.80" y="244.80" width="5.70" height="24.30" fill="#bfb498"/>
<rect x="767.00" y="244.00" width="6.90" height="25.90" fill="#0b0b0d"/>
<rect x="767.80" y="244.80" width="5.30" height="24.30" fill="#bfb498"/>
<rect x="773.10" y="244.00" width="4.30" height="25.90" fill="#0b0b0d"/>
<rect x="773.90" y="244.80" width="2.70" height="24.30" fill="#bfb498"/>
<rect x="900.70" y="244.00" width="7.80" height="25.90" fill="#0b0b0d"/>
<rect x="901.50" y="244.80" width="6.20" height="24.30" fill="#bfb498"/>
<rect x="911.50" y="244.00" width="6.90" height="25.90" fill="#0b0b0d"/>
<rect x="912.30" y="244.80" width="5.30" height="24.30" fill="#bfb498"/>
<rect x="937.05" y="244.00" width="2.80" height="25.90" fill="#0b0b0d"/>
<rect x="937.50" y="244.80" width="1.90" height="24.30" fill="#bfb498"/>
<rect x="939.20" y="244.00" width="5.60" height="25.90" fill="#0b0b0d"/>
<rect x="940.00" y="244.80" width="4.00" height="24.30" fill="#bfb498"/>
<rect x="949.80" y="244.00" width="6.20" height="25.90" fill="#0b0b0d"/>
<rect x="950.60" y="244.80" width="4.60" height="24.30" fill="#bfb498"/>
<rect x="956.00" y="244.00" width="6.20" height="25.90" fill="#0b0b0d"/>
<rect x="956.80" y="244.80" width="4.60" height="24.30" fill="#bfb498"/>
<rect x="1007.15" y="244.00" width="2.60" height="25.90" fill="#0b0b0d"/>
<rect x="1007.60" y="244.80" width="1.70" height="24.30" fill="#bfb498"/>
<rect x="1011.80" y="244.00" width="6.20" height="25.90" fill="#0b0b0d"/>
<rect x="1012.60" y="244.80" width="4.60" height="24.30" fill="#bfb498"/>
<rect x="1020.55" y="244.00" width="2.90" height="25.90" fill="#0b0b0d"/>
<rect x="1021.00" y="244.80" width="2.00" height="24.30" fill="#bfb498"/>
<rect x="1026.70" y="244.00" width="7.50" height="25.90" fill="#0b0b0d"/>
<rect x="1027.50" y="244.80" width="5.90" height="24.30" fill="#bfb498"/>
<rect x="1071.10" y="244.00" width="6.00" height="25.90" fill="#0b0b0d"/>
<rect x="1071.90" y="244.80" width="4.40" height="24.30" fill="#bfb498"/>
<rect x="1091.00" y="244.00" width="4.30" height="25.90" fill="#0b0b0d"/>
<rect x="1091.80" y="244.80" width="2.70" height="24.30" fill="#bfb498"/>
<rect x="1117.20" y="244.00" width="5.60" height="25.90" fill="#0b0b0d"/>
<rect x="1118.00" y="244.80" width="4.00" height="24.30" fill="#bfb498"/>
<rect x="1123.00" y="244.00" width="6.80" height="25.90" fill="#0b0b0d"/>
<rect x="1123.80" y="244.80" width="5.20" height="24.30" fill="#bfb498"/>
<rect x="1129.20" y="244.00" width="5.60" height="25.90" fill="#0b0b0d"/>
<rect x="1130.00" y="244.80" width="4.00" height="24.30" fill="#bfb498"/>
<rect x="1134.00" y="244.00" width="7.10" height="25.90" fill="#0b0b0d"/>
<rect x="1134.80" y="244.80" width="5.50" height="24.30" fill="#bfb498"/>
<rect x="1140.20" y="244.00" width="6.60" height="25.90" fill="#0b0b0d"/>
<rect x="1141.00" y="244.80" width="5.00" height="24.30" fill="#bfb498"/>
<rect x="1146.55" y="244.00" width="3.40" height="25.90" fill="#0b0b0d"/>
<rect x="1147.00" y="244.80" width="2.50" height="24.30" fill="#bfb498"/>
<rect x="1155.25" y="244.00" width="3.10" height="25.90" fill="#0b0b0d"/>
<rect x="1155.70" y="244.80" width="2.20" height="24.30" fill="#bfb498"/>
<rect x="1158.45" y="244.00" width="2.80" height="25.90" fill="#0b0b0d"/>
<rect x="1158.90" y="244.80" width="1.90" height="24.30" fill="#bfb498"/>
<rect x="1161.00" y="244.00" width="6.80" height="25.90" fill="#0b0b0d"/>
<rect x="1161.80" y="244.80" width="5.20" height="24.30" fill="#bfb498"/>
<rect x="1167.10" y="244.00" width="5.40" height="25.90" fill="#0b0b0d"/>
<rect x="1167.90" y="244.80" width="3.80" height="24.30" fill="#bfb498"/>
<rect x="1173.25" y="244.00" width="3.00" height="25.90" fill="#0b0b0d"/>
<rect x="1173.70" y="244.80" width="2.10" height="24.30" fill="#bfb498"/>
<rect x="1176.35" y="244.00" width="3.10" height="25.90" fill="#0b0b0d"/>
<rect x="1176.80" y="244.80" width="2.20" height="24.30" fill="#bfb498"/>
<rect x="1178.90" y="244.60" width="0.70" height="24.80" fill="#4a7eb0"/>
<rect x="1179.90" y="244.60" width="-1.30" height="24.80" fill="#456e96"/>
<rect x="1179.55" y="244.00" width="3.10" height="25.90" fill="#0b0b0d"/>
<rect x="1180.00" y="244.80" width="2.20" height="24.30" fill="#bfb498"/>
<rect x="1192.15" y="244.00" width="2.50" height="25.90" fill="#0b0b0d"/>
<rect x="1192.60" y="244.80" width="1.60" height="24.30" fill="#bfb498"/>
<rect x="1204.20" y="244.00" width="4.50" height="25.90" fill="#0b0b0d"/>
<rect x="1205.00" y="244.80" width="2.90" height="24.30" fill="#bfb498"/>
<rect x="1209.15" y="244.00" width="2.50" height="25.90" fill="#0b0b0d"/>
<rect x="1209.60" y="244.80" width="1.60" height="24.30" fill="#bfb498"/>
<rect x="1213.35" y="244.00" width="3.00" height="25.90" fill="#0b0b0d"/>
<rect x="1213.80" y="244.80" width="2.10" height="24.30" fill="#bfb498"/>
<rect x="1226.50" y="244.60" width="1.50" height="24.80" fill="#4a7eb0"/>
<rect x="1227.50" y="244.60" width="-0.50" height="24.80" fill="#456e96"/>
<rect x="1227.40" y="244.00" width="7.60" height="25.90" fill="#0b0b0d"/>
<rect x="1228.20" y="244.80" width="6.00" height="24.30" fill="#bfb498"/>
<rect x="1242.35" y="244.00" width="3.10" height="25.90" fill="#0b0b0d"/>
<rect x="1242.80" y="244.80" width="2.20" height="24.30" fill="#bfb498"/>
<rect x="1252.20" y="244.00" width="4.40" height="25.90" fill="#0b0b0d"/>
<rect x="1253.00" y="244.80" width="2.80" height="24.30" fill="#bfb498"/>
<rect x="1256.20" y="244.00" width="6.40" height="25.90" fill="#0b0b0d"/>
<rect x="1257.00" y="244.80" width="4.80" height="24.30" fill="#bfb498"/>
<rect x="1262.20" y="244.00" width="5.30" height="25.90" fill="#0b0b0d"/>
<rect x="1263.00" y="244.80" width="3.70" height="24.30" fill="#bfb498"/>
<rect x="1267.10" y="244.00" width="6.70" height="25.90" fill="#0b0b0d"/>
<rect x="1267.90" y="244.80" width="5.10" height="24.30" fill="#bfb498"/>
<rect x="1356.40" y="244.40" width="29.60" height="25.40" fill="#0b0b0d" rx="3.8"/>
<rect x="1357.20" y="245.20" width="28.00" height="23.80" fill="#45698a" rx="3"/>
<rect x="218.35" y="271.30" width="3.30" height="55.40" fill="#0b0b0d"/>
<rect x="218.80" y="272.10" width="2.40" height="53.80" fill="#45698a"/>
<rect x="221.80" y="271.30" width="9.10" height="55.40" fill="#0b0b0d"/>
<rect x="222.60" y="272.10" width="7.50" height="53.80" fill="#45698a"/>
<rect x="230.00" y="271.30" width="9.80" height="55.40" fill="#0b0b0d"/>
<rect x="230.80" y="272.10" width="8.20" height="53.80" fill="#45698a"/>
<rect x="239.20" y="271.30" width="6.60" height="55.40" fill="#0b0b0d"/>
<rect x="240.00" y="272.10" width="5.00" height="53.80" fill="#45698a"/>
<rect x="245.60" y="271.30" width="4.60" height="55.40" fill="#0b0b0d"/>
<rect x="246.40" y="272.10" width="3.00" height="53.80" fill="#4479a9"/>
<rect x="249.40" y="271.30" width="5.10" height="55.40" fill="#0b0b0d"/>
<rect x="250.20" y="272.10" width="3.50" height="53.80" fill="#4479a9"/>
<rect x="254.20" y="271.30" width="54.40" height="55.40" fill="#0b0b0d" rx="3.8"/>
<rect x="255.00" y="272.10" width="52.80" height="53.80" fill="#4479a9" rx="3"/>
<rect x="256.70" y="274.00" width="49.40" height="27.70" fill="#08080a"/>
<rect x="257.30" y="274.60" width="48.20" height="26.50" fill="#f0f0f1"/>
<rect x="297.31" y="274.60" width="8.19" height="26.50" fill="#0d5a9e"/>
<rect x="270.80" y="277.78" width="26.51" height="4.77" fill="#4a1172"/>
<rect x="257.30" y="282.02" width="13.01" height="10.07" fill="#3c4a50"/>
<rect x="257.78" y="282.81" width="11.57" height="8.22" fill="#b4c6ca"/>
<rect x="257.30" y="291.03" width="9.64" height="4.77" fill="#3a3a3e"/>
<rect x="277.06" y="284.14" width="14.94" height="9.54" fill="#202024"/>
<rect x="278.51" y="285.47" width="11.57" height="6.62" fill="#52b064"/>
<rect x="281.40" y="287.06" width="2.89" height="3.44" fill="#e06848"/>
<rect x="287.18" y="286.00" width="2.89" height="5.04" fill="#6a5a9a"/>
<rect x="258.26" y="293.15" width="7.71" height="7.95" fill="#d8aa92"/>
<rect x="282.85" y="294.74" width="13.98" height="5.56" fill="#c8927a"/>
<rect x="308.20" y="271.30" width="65.60" height="55.40" fill="#0b0b0d" rx="3.8"/>
<rect x="309.00" y="272.10" width="64.00" height="53.80" fill="#45698a" rx="3"/>
<rect x="310.70" y="274.00" width="60.60" height="27.70" fill="#08080a"/>
<rect x="311.30" y="274.60" width="59.40" height="26.50" fill="#4a4a50"/>
<rect x="311.30" y="274.60" width="59.40" height="2.65" fill="#383a3a"/>
<rect x="311.30" y="277.78" width="19.60" height="16.69" fill="#e8e8ea"/>
<rect x="314.27" y="277.78" width="26.73" height="4.77" fill="#4a1172"/>
<rect x="330.90" y="282.55" width="13.07" height="18.55" fill="#3a3c40"/>
<rect x="343.97" y="275.93" width="26.73" height="20.41" fill="#67656f"/>
<rect x="342.19" y="296.33" width="28.51" height="4.77" fill="#5a78c8"/>
<rect x="311.30" y="294.74" width="29.70" height="6.36" fill="#34343a"/>
<rect x="344.56" y="275.93" width="1.19" height="19.88" fill="#8a8a80"/>
<rect x="374.00" y="271.30" width="10.80" height="55.40" fill="#0b0b0d"/>
<rect x="374.80" y="272.10" width="9.20" height="53.80" fill="#45698a"/>
<rect x="384.00" y="271.30" width="9.90" height="55.40" fill="#0b0b0d"/>
<rect x="384.80" y="272.10" width="8.30" height="53.80" fill="#45698a"/>
<rect x="393.40" y="271.30" width="9.70" height="55.40" fill="#0b0b0d"/>
<rect x="394.20" y="272.10" width="8.10" height="53.80" fill="#45698a"/>
<rect x="402.30" y="271.30" width="11.60" height="55.40" fill="#0b0b0d"/>
<rect x="403.10" y="272.10" width="10.00" height="53.80" fill="#45698a"/>
<rect x="413.50" y="271.30" width="5.60" height="55.40" fill="#0b0b0d"/>
<rect x="414.30" y="272.10" width="4.00" height="53.80" fill="#45698a"/>
<rect x="418.30" y="271.30" width="4.50" height="55.40" fill="#0b0b0d"/>
<rect x="419.10" y="272.10" width="2.90" height="53.80" fill="#45698a"/>
<rect x="422.10" y="271.30" width="5.00" height="55.40" fill="#0b0b0d"/>
<rect x="422.90" y="272.10" width="3.40" height="53.80" fill="#45698a"/>
<rect x="426.45" y="271.30" width="1.90" height="55.40" fill="#0b0b0d"/>
<rect x="426.90" y="272.10" width="1.00" height="53.80" fill="#45698a"/>
<rect x="428.65" y="271.30" width="2.70" height="55.40" fill="#0b0b0d"/>
<rect x="429.10" y="272.10" width="1.80" height="53.80" fill="#45698a"/>
<rect x="431.10" y="271.30" width="16.70" height="55.40" fill="#0b0b0d"/>
<rect x="431.90" y="272.10" width="15.10" height="53.80" fill="#45698a"/>
<rect x="447.40" y="271.30" width="9.60" height="55.40" fill="#0b0b0d"/>
<rect x="448.20" y="272.10" width="8.00" height="53.80" fill="#45698a"/>
<rect x="456.55" y="271.30" width="1.90" height="55.40" fill="#0b0b0d"/>
<rect x="457.00" y="272.10" width="1.00" height="53.80" fill="#45698a"/>
<rect x="458.40" y="271.30" width="11.40" height="55.40" fill="#0b0b0d"/>
<rect x="459.20" y="272.10" width="9.80" height="53.80" fill="#45698a"/>
<rect x="469.20" y="271.30" width="5.60" height="55.40" fill="#0b0b0d"/>
<rect x="470.00" y="272.10" width="4.00" height="53.80" fill="#45698a"/>
<rect x="474.50" y="271.30" width="15.10" height="55.40" fill="#0b0b0d" rx="3.8"/>
<rect x="475.30" y="272.10" width="13.50" height="53.80" fill="#45698a" rx="3"/>
<rect x="477.50" y="274.4" width="9.10" height="26.9" fill="none" stroke="#0a0a0c" stroke-width="1"/>
<rect x="489.20" y="271.30" width="10.60" height="55.40" fill="#0b0b0d"/>
<rect x="490.00" y="272.10" width="9.00" height="53.80" fill="#45698a"/>
<rect x="499.20" y="271.30" width="10.90" height="55.40" fill="#0b0b0d" rx="3.8"/>
<rect x="500.00" y="272.10" width="9.30" height="53.80" fill="#45698a" rx="3"/>
<rect x="502.20" y="274.4" width="4.90" height="26.9" fill="none" stroke="#0a0a0c" stroke-width="1"/>
<rect x="509.00" y="271.30" width="16.00" height="55.40" fill="#0b0b0d"/>
<rect x="509.80" y="272.10" width="14.40" height="53.80" fill="#45698a"/>
<rect x="524.20" y="271.30" width="16.60" height="55.40" fill="#0b0b0d" rx="3.8"/>
<rect x="525.00" y="272.10" width="15.00" height="53.80" fill="#45698a" rx="3"/>
<rect x="527.20" y="274.4" width="10.60" height="26.9" fill="none" stroke="#0a0a0c" stroke-width="1"/>
<rect x="540.25" y="271.30" width="2.50" height="55.40" fill="#0b0b0d"/>
<rect x="540.70" y="272.10" width="1.60" height="53.80" fill="#45698a"/>
<rect x="542.20" y="271.30" width="16.00" height="55.40" fill="#0b0b0d" rx="3.8"/>
<rect x="543.00" y="272.10" width="14.40" height="53.80" fill="#45698a" rx="3"/>
<rect x="545.20" y="274.4" width="10.00" height="26.9" fill="none" stroke="#0a0a0c" stroke-width="1"/>
<rect x="557.40" y="271.30" width="7.10" height="55.40" fill="#0b0b0d"/>
<rect x="558.20" y="272.10" width="5.50" height="53.80" fill="#45698a"/>
<rect x="564.00" y="271.30" width="19.10" height="55.40" fill="#0b0b0d" rx="3.8"/>
<rect x="564.80" y="272.10" width="17.50" height="53.80" fill="#45698a" rx="3"/>
<rect x="567.00" y="274.4" width="13.10" height="26.9" fill="none" stroke="#0a0a0c" stroke-width="1"/>
<rect x="582.40" y="271.30" width="35.40" height="55.40" fill="#0b0b0d" rx="3.8"/>
<rect x="583.20" y="272.10" width="33.80" height="53.80" fill="#45698a" rx="3"/>
<rect x="584.90" y="274.00" width="30.40" height="27.70" fill="#08080a"/>
<rect x="585.50" y="274.60" width="29.20" height="26.50" fill="#2b2838"/>
<rect x="620.20" y="271.30" width="7.60" height="55.40" fill="#0b0b0d"/>
<rect x="621.00" y="272.10" width="6.00" height="53.80" fill="#45698a"/>
<rect x="627.20" y="271.30" width="17.60" height="55.40" fill="#0b0b0d"/>
<rect x="628.00" y="272.10" width="16.00" height="53.80" fill="#45698a"/>
<rect x="644.55" y="271.30" width="2.30" height="55.40" fill="#0b0b0d"/>
<rect x="645.00" y="272.10" width="1.40" height="53.80" fill="#45698a"/>
<rect x="646.55" y="271.30" width="2.70" height="55.40" fill="#0b0b0d"/>
<rect x="647.00" y="272.10" width="1.80" height="53.80" fill="#45698a"/>
<rect x="649.05" y="271.30" width="2.40" height="55.40" fill="#0b0b0d"/>
<rect x="649.50" y="272.10" width="1.50" height="53.80" fill="#45698a"/>
<rect x="651.20" y="271.30" width="7.60" height="55.40" fill="#0b0b0d"/>
<rect x="652.00" y="272.10" width="6.00" height="53.80" fill="#45698a"/>
<rect x="658.00" y="271.30" width="6.80" height="55.40" fill="#0b0b0d"/>
<rect x="658.80" y="272.10" width="5.20" height="53.80" fill="#4479a9"/>
<rect x="664.20" y="271.30" width="34.60" height="55.40" fill="#0b0b0d" rx="3.8"/>
<rect x="665.00" y="272.10" width="33.00" height="53.80" fill="#4479a9" rx="3"/>
<rect x="666.70" y="274.00" width="29.60" height="27.70" fill="#08080a"/>
<rect x="667.30" y="274.60" width="28.40" height="26.50" fill="#272930"/>
<rect x="667.30" y="274.60" width="8.52" height="26.50" fill="#d2cac2"/>
<rect x="675.82" y="274.60" width="3.41" height="7.95" fill="#bcb4ac"/>
<rect x="688.88" y="277.25" width="6.82" height="11.93" fill="#3a4ab8"/>
<rect x="688.88" y="289.18" width="6.82" height="7.95" fill="#a4d0de"/>
<rect x="675.82" y="298.45" width="19.88" height="2.65" fill="#1a1a1e"/>
<rect x="698.80" y="271.30" width="8.00" height="55.40" fill="#0b0b0d"/>
<rect x="699.60" y="272.10" width="6.40" height="53.80" fill="#4479a9"/>
<rect x="706.50" y="271.30" width="11.90" height="55.40" fill="#0b0b0d" rx="3.8"/>
<rect x="707.30" y="272.10" width="10.30" height="53.80" fill="#45698a" rx="3"/>
<rect x="709.50" y="274.4" width="5.90" height="26.9" fill="none" stroke="#0a0a0c" stroke-width="1"/>
<rect x="718.25" y="271.30" width="2.20" height="55.40" fill="#0b0b0d"/>
<rect x="718.70" y="272.10" width="1.30" height="53.80" fill="#45698a"/>
<rect x="720.25" y="271.30" width="2.70" height="55.40" fill="#0b0b0d"/>
<rect x="720.70" y="272.10" width="1.80" height="53.80" fill="#45698a"/>
<rect x="722.30" y="271.30" width="4.40" height="55.40" fill="#0b0b0d"/>
<rect x="723.10" y="272.10" width="2.80" height="53.80" fill="#45698a"/>
<rect x="726.15" y="271.30" width="3.30" height="55.40" fill="#0b0b0d"/>
<rect x="726.60" y="272.10" width="2.40" height="53.80" fill="#45698a"/>
<rect x="729.40" y="271.30" width="11.40" height="55.40" fill="#0b0b0d" rx="3.8"/>
<rect x="730.20" y="272.10" width="9.80" height="53.80" fill="#4479a9" rx="3"/>
<rect x="732.40" y="274.4" width="5.40" height="26.9" fill="none" stroke="#0a0a0c" stroke-width="1"/>
<rect x="740.60" y="271.30" width="25.20" height="55.40" fill="#0b0b0d" rx="3.8"/>
<rect x="741.40" y="272.10" width="23.60" height="53.80" fill="#4479a9" rx="3"/>
<rect x="743.10" y="274.00" width="20.20" height="27.70" fill="#08080a"/>
<rect x="743.70" y="274.60" width="19.00" height="26.50" fill="#0c0c0e"/>
<rect x="744.27" y="275.93" width="10.83" height="24.38" fill="#c6c6d0"/>
<rect x="744.27" y="275.93" width="10.83" height="3.98" fill="#1c2a72"/>
<rect x="744.27" y="277.25" width="7.03" height="1.59" fill="#9aa0c0"/>
<rect x="744.27" y="280.43" width="10.83" height="5.30" fill="#9c2222"/>
<rect x="744.27" y="285.73" width="10.83" height="1.59" fill="#2242a2"/>
<rect x="765.50" y="271.30" width="30.30" height="55.40" fill="#0b0b0d" rx="3.8"/>
<rect x="766.30" y="272.10" width="28.70" height="53.80" fill="#4479a9" rx="3"/>
<rect x="768.00" y="274.00" width="25.30" height="27.70" fill="#08080a"/>
<rect x="768.60" y="274.60" width="24.10" height="26.50" fill="#0c0a0a"/>
<rect x="769.80" y="275.40" width="22.90" height="24.91" fill="#c47a42"/>
<rect x="775.35" y="275.40" width="1.93" height="24.91" fill="#2a9a98"/>
<rect x="783.54" y="275.40" width="1.93" height="24.91" fill="#2a9a98"/>
<rect x="790.29" y="275.40" width="1.45" height="24.91" fill="#2a9a98"/>
<rect x="771.01" y="293.15" width="2.41" height="2.65" fill="#1a1410"/>
<rect x="778.72" y="293.15" width="2.41" height="2.65" fill="#1a1410"/>
<rect x="786.67" y="293.15" width="2.41" height="2.65" fill="#1a1410"/>
<rect x="795.50" y="271.30" width="34.30" height="55.40" fill="#0b0b0d" rx="3.8"/>
<rect x="796.30" y="272.10" width="32.70" height="53.80" fill="#4479a9" rx="3"/>
<rect x="798.00" y="274.00" width="29.30" height="27.70" fill="#08080a"/>
<rect x="798.60" y="274.60" width="28.10" height="26.50" fill="#0e0c0c"/>
<rect x="799.16" y="275.93" width="16.30" height="11.93" fill="#a89a3a"/>
<rect x="804.78" y="277.25" width="7.87" height="3.71" fill="#3a2020"/>
<rect x="805.62" y="277.78" width="6.18" height="2.12" fill="#b03030"/>
<rect x="799.16" y="287.85" width="12.08" height="1.59" fill="#2a30c0"/>
<rect x="799.16" y="289.44" width="16.30" height="10.87" fill="#c4b46c"/>
<rect x="804.22" y="297.12" width="2.81" height="3.18" fill="#3a80d0"/>
<rect x="815.46" y="284.14" width="11.24" height="16.96" fill="#c48e6e"/>
<rect x="817.15" y="286.53" width="3.93" height="6.62" fill="#6a4a48"/>
<rect x="829.40" y="271.30" width="50.60" height="55.40" fill="#0b0b0d" rx="3.8"/>
<rect x="830.20" y="272.10" width="49.00" height="53.80" fill="#4479a9" rx="3"/>
<rect x="831.90" y="274.00" width="45.60" height="27.70" fill="#08080a"/>
<rect x="832.50" y="274.60" width="44.40" height="26.50" fill="#0c0c0e"/>
<rect x="833.39" y="275.93" width="13.76" height="11.93" fill="#217a3a"/>
<rect x="836.94" y="279.37" width="6.22" height="4.77" fill="#c23434"/>
<rect x="833.39" y="287.85" width="13.76" height="1.59" fill="#3a9aa0"/>
<rect x="833.39" y="289.44" width="15.10" height="10.87" fill="#b49088"/>
<rect x="837.83" y="291.03" width="14.65" height="10.07" fill="#c48c6c"/>
<rect x="841.38" y="293.15" width="4.44" height="3.97" fill="#7a6a78"/>
<rect x="861.58" y="275.13" width="0.89" height="23.32" fill="#8a8478"/>
<rect x="875.57" y="289.18" width="1.33" height="9.81" fill="#c06a40"/>
<circle cx="873.6" cy="285.5" r="3.3" fill="#ffffff"/>
<rect x="879.60" y="271.30" width="21.80" height="55.40" fill="#0b0b0d" rx="3.8"/>
<rect x="880.40" y="272.10" width="20.20" height="53.80" fill="#4479a9" rx="3"/>
<rect x="882.10" y="274.00" width="16.80" height="27.70" fill="#08080a"/>
<rect x="882.70" y="274.60" width="15.60" height="26.50" fill="#101014"/>
<rect x="882.70" y="275.93" width="1.25" height="23.85" fill="#5a6a40"/>
<rect x="896.74" y="274.60" width="1.56" height="26.50" fill="#1c1c22"/>
<rect x="901.60" y="271.30" width="14.20" height="55.40" fill="#0b0b0d" rx="3.8"/>
<rect x="902.40" y="272.10" width="12.60" height="53.80" fill="#4479a9" rx="3"/>
<rect x="904.60" y="274.4" width="8.20" height="26.9" fill="none" stroke="#0a0a0c" stroke-width="1"/>
<rect x="915.20" y="271.30" width="13.10" height="55.40" fill="#0b0b0d" rx="3.8"/>
<rect x="916.00" y="272.10" width="11.50" height="53.80" fill="#4479a9" rx="3"/>
<rect x="918.20" y="274.4" width="7.10" height="26.9" fill="none" stroke="#0a0a0c" stroke-width="1"/>
<rect x="928.20" y="271.30" width="9.80" height="55.40" fill="#0b0b0d"/>
<rect x="929.00" y="272.10" width="8.20" height="53.80" fill="#4479a9"/>
<rect x="937.60" y="271.30" width="70.00" height="55.40" fill="#0b0b0d" rx="3.8"/>
<rect x="938.40" y="272.10" width="68.40" height="53.80" fill="#4479a9" rx="3"/>
<rect x="940.10" y="274.00" width="65.00" height="27.70" fill="#08080a"/>
<rect x="940.70" y="274.60" width="63.80" height="26.50" fill="#b8994a"/>
<rect x="940.70" y="274.60" width="63.80" height="2.65" fill="#1c2c38"/>
<rect x="940.70" y="276.72" width="63.80" height="4.24" fill="#3a76a8"/>
<rect x="940.70" y="279.90" width="63.80" height="4.24" fill="#3f8444"/>
<rect x="959.84" y="277.25" width="28.71" height="2.65" fill="#9ab0b8"/>
<rect x="940.70" y="283.61" width="63.80" height="2.65" fill="#a89a68"/>
<rect x="945.17" y="274.60" width="5.42" height="26.50" fill="#cfcfd3"/>
<rect x="992.38" y="274.60" width="5.42" height="26.50" fill="#cfcfd3"/>
<rect x="998.12" y="291.03" width="6.38" height="7.42" fill="#2a2418"/>
<rect x="940.70" y="298.98" width="63.80" height="2.12" fill="#3a2c14"/>
<rect x="969.41" y="289.18" width="3.19" height="5.30" fill="#7a8a70"/>
<rect x="953.46" y="285.73" width="4.47" height="2.65" fill="#6a7268"/>
<rect x="1007.20" y="271.30" width="9.50" height="55.40" fill="#0b0b0d"/>
<rect x="1008.00" y="272.10" width="7.90" height="53.80" fill="#4479a9"/>
<rect x="1016.40" y="271.30" width="17.40" height="55.40" fill="#0b0b0d" rx="3.8"/>
<rect x="1017.20" y="272.10" width="15.80" height="53.80" fill="#4479a9" rx="3"/>
<rect x="1019.40" y="274.4" width="11.40" height="26.9" fill="none" stroke="#0a0a0c" stroke-width="1"/>
<rect x="1033.20" y="271.30" width="4.80" height="55.40" fill="#0b0b0d"/>
<rect x="1034.00" y="272.10" width="3.20" height="53.80" fill="#4479a9"/>
<rect x="1037.40" y="271.30" width="30.40" height="55.40" fill="#0b0b0d" rx="3.8"/>
<rect x="1038.20" y="272.10" width="28.80" height="53.80" fill="#4479a9" rx="3"/>
<rect x="1039.90" y="274.00" width="25.40" height="27.70" fill="#08080a"/>
<rect x="1040.50" y="274.60" width="24.20" height="26.50" fill="#3c2a26"/>
<rect x="1041.71" y="277.78" width="18.15" height="19.08" fill="#a9aba5"/>
<rect x="1059.86" y="275.93" width="4.84" height="22.00" fill="#b49896"/>
<rect x="1047.76" y="279.90" width="9.68" height="2.12" fill="#4a4a3a"/>
<rect x="1041.71" y="287.85" width="1.69" height="3.18" fill="#3a8a3a"/>
<rect x="1053.81" y="290.50" width="1.69" height="3.18" fill="#8a6a20"/>
<rect x="1040.50" y="297.92" width="24.20" height="3.18" fill="#181414"/>
<rect x="1067.20" y="271.30" width="4.80" height="55.40" fill="#0b0b0d"/>
<rect x="1068.00" y="272.10" width="3.20" height="53.80" fill="#4479a9"/>
<rect x="1071.55" y="271.30" width="3.20" height="55.40" fill="#0b0b0d"/>
<rect x="1072.00" y="272.10" width="2.30" height="53.80" fill="#4479a9"/>
<rect x="1074.40" y="271.30" width="5.40" height="55.40" fill="#0b0b0d"/>
<rect x="1075.20" y="272.10" width="3.80" height="53.80" fill="#4479a9"/>
<rect x="1079.20" y="271.30" width="20.30" height="55.40" fill="#0b0b0d" rx="3.8"/>
<rect x="1080.00" y="272.10" width="18.70" height="53.80" fill="#4479a9" rx="3"/>
<rect x="1081.70" y="274.00" width="15.30" height="27.70" fill="#08080a"/>
<rect x="1082.30" y="274.60" width="14.10" height="26.50" fill="#70756c"/>
<rect x="1082.30" y="274.60" width="14.10" height="3.18" fill="#e0d8d8"/>
<rect x="1083.71" y="278.58" width="11.28" height="6.62" fill="#8a9088"/>
<rect x="1083.00" y="286.53" width="12.69" height="7.15" fill="#5a6058"/>
<rect x="1083.71" y="294.74" width="11.99" height="3.18" fill="#8a90c8"/>
<rect x="1082.30" y="299.25" width="14.10" height="1.86" fill="#f0f0f0"/>
<rect x="1099.20" y="271.30" width="23.60" height="55.40" fill="#0b0b0d" rx="3.8"/>
<rect x="1100.00" y="272.10" width="22.00" height="53.80" fill="#4479a9" rx="3"/>
<rect x="1101.70" y="274.00" width="18.60" height="27.70" fill="#08080a"/>
<rect x="1102.30" y="274.60" width="17.40" height="26.50" fill="#1c1c1e"/>
<rect x="1102.30" y="274.60" width="17.40" height="1.32" fill="#d08a80"/>
<rect x="1102.30" y="299.78" width="17.40" height="1.32" fill="#e8e8e8"/>
<rect x="1116.57" y="286.53" width="2.26" height="2.65" fill="#f0f0f0"/>
<rect x="1122.20" y="271.30" width="4.80" height="55.40" fill="#0b0b0d"/>
<rect x="1123.00" y="272.10" width="3.20" height="53.80" fill="#4479a9"/>
<rect x="1126.45" y="271.30" width="2.20" height="55.40" fill="#0b0b0d"/>
<rect x="1126.90" y="272.10" width="1.30" height="53.80" fill="#4479a9"/>
<rect x="1128.55" y="271.30" width="2.20" height="55.40" fill="#0b0b0d"/>
<rect x="1129.00" y="272.10" width="1.30" height="53.80" fill="#4479a9"/>
<rect x="1130.20" y="271.30" width="10.90" height="55.40" fill="#0b0b0d"/>
<rect x="1131.00" y="272.10" width="9.30" height="53.80" fill="#4479a9"/>
<rect x="1140.10" y="271.30" width="6.80" height="55.40" fill="#0b0b0d"/>
<rect x="1140.90" y="272.10" width="5.20" height="53.80" fill="#45698a"/>
<rect x="1146.55" y="271.30" width="2.90" height="55.40" fill="#0b0b0d"/>
<rect x="1147.00" y="272.10" width="2.00" height="53.80" fill="#4479a9"/>
<rect x="1150.45" y="271.30" width="3.10" height="55.40" fill="#0b0b0d"/>
<rect x="1150.90" y="272.10" width="2.20" height="53.80" fill="#bfb498"/>
<rect x="1153.30" y="271.30" width="4.70" height="55.40" fill="#0b0b0d"/>
<rect x="1154.10" y="272.10" width="3.10" height="53.80" fill="#bfb498"/>
<rect x="1158.10" y="271.30" width="10.00" height="55.40" fill="#0b0b0d"/>
<rect x="1158.90" y="272.10" width="8.40" height="53.80" fill="#45698a"/>
<rect x="1167.20" y="271.30" width="5.30" height="55.40" fill="#0b0b0d"/>
<rect x="1168.00" y="272.10" width="3.70" height="53.80" fill="#45698a"/>
<rect x="1171.75" y="271.30" width="2.90" height="55.40" fill="#0b0b0d"/>
<rect x="1172.20" y="272.10" width="2.00" height="53.80" fill="#bfb498"/>
<rect x="1173.80" y="271.30" width="29.40" height="55.40" fill="#0b0b0d"/>
<rect x="1174.60" y="272.10" width="27.80" height="53.80" fill="#4479a9"/>
<rect x="1174.60" y="272.10" width="3.90" height="53.80" fill="#45698a"/>
<rect x="1188.70" y="272.10" width="1.40" height="53.80" fill="#4672a0"/>
<rect x="1193.00" y="272.10" width="5.00" height="53.80" fill="#4672a0"/>
<rect x="1202.55" y="271.30" width="1.50" height="55.40" fill="#0b0b0d"/>
<rect x="1203.00" y="272.10" width="0.60" height="53.80" fill="#4479a9"/>
<rect x="1203.90" y="271.30" width="8.10" height="55.40" fill="#0b0b0d"/>
<rect x="1204.70" y="272.10" width="6.50" height="53.80" fill="#4479a9"/>
<rect x="1204.70" y="272.10" width="2.30" height="53.80" fill="#45698a"/>
<rect x="1211.40" y="271.30" width="23.60" height="55.40" fill="#0b0b0d"/>
<rect x="1212.20" y="272.10" width="22.00" height="53.80" fill="#4479a9"/>
<rect x="1227.20" y="272.10" width="7.00" height="53.80" fill="#45698a"/>
<rect x="1234.40" y="271.30" width="4.50" height="55.40" fill="#0b0b0d"/>
<rect x="1235.20" y="272.10" width="2.90" height="53.80" fill="#4479a9"/>
<rect x="1238.30" y="271.30" width="7.50" height="55.40" fill="#0b0b0d"/>
<rect x="1239.10" y="272.10" width="5.90" height="53.80" fill="#4479a9"/>
<rect x="1245.30" y="271.30" width="17.30" height="55.40" fill="#0b0b0d"/>
<rect x="1246.10" y="272.10" width="15.70" height="53.80" fill="#4479a9"/>
<rect x="1248.80" y="272.10" width="1.50" height="53.80" fill="#4672a0"/>
<rect x="1262.35" y="271.30" width="3.10" height="55.40" fill="#0b0b0d"/>
<rect x="1262.80" y="272.10" width="2.20" height="53.80" fill="#4479a9"/>
<rect x="1265.20" y="271.30" width="8.60" height="55.40" fill="#0b0b0d"/>
<rect x="1266.00" y="272.10" width="7.00" height="53.80" fill="#4479a9"/>
<rect x="1273.20" y="271.30" width="7.90" height="55.40" fill="#0b0b0d"/>
<rect x="1274.00" y="272.10" width="6.30" height="53.80" fill="#4479a9"/>
<rect x="1280.50" y="271.30" width="6.30" height="55.40" fill="#0b0b0d"/>
<rect x="1281.30" y="272.10" width="4.70" height="53.80" fill="#4479a9"/>
<rect x="1287.20" y="271.30" width="41.60" height="55.40" fill="#0b0b0d" rx="3.8"/>
<rect x="1288.00" y="272.10" width="40.00" height="53.80" fill="#4479a9" rx="3"/>
<rect x="1289.70" y="274.00" width="36.60" height="27.70" fill="#08080a"/>
<rect x="1290.30" y="274.60" width="35.40" height="26.50" fill="#0c0c10"/>
<rect x="1290.30" y="281.23" width="8.85" height="19.88" fill="#6a4a28"/>
<rect x="1299.15" y="279.90" width="25.49" height="18.02" fill="#dfe6ee"/>
<rect x="1300.92" y="282.55" width="21.24" height="3.98" fill="#3a3a6a"/>
<rect x="1315.08" y="275.93" width="8.85" height="3.44" fill="#b08830"/>
<rect x="1311.54" y="286.53" width="10.62" height="2.65" fill="#2040c0"/>
<rect x="1328.50" y="271.30" width="28.10" height="55.40" fill="#0b0b0d" rx="3.8"/>
<rect x="1329.30" y="272.10" width="26.50" height="53.80" fill="#4479a9" rx="3"/>
<rect x="1331.00" y="274.00" width="23.10" height="27.70" fill="#08080a"/>
<rect x="1331.60" y="274.60" width="21.90" height="26.50" fill="#0c0c10"/>
<rect x="1332.69" y="282.55" width="20.15" height="17.23" fill="#e8eef4"/>
<rect x="1332.69" y="282.55" width="16.42" height="2.65" fill="#e8d040"/>
<rect x="1334.88" y="285.73" width="13.14" height="11.39" fill="#3a3c44"/>
<rect x="1342.55" y="275.93" width="9.86" height="3.44" fill="#b08830"/>
<rect x="1356.40" y="271.30" width="24.40" height="55.40" fill="#0b0b0d" rx="3.8"/>
<rect x="1357.20" y="272.10" width="22.80" height="53.80" fill="#4479a9" rx="3"/>
<rect x="1358.90" y="274.00" width="19.40" height="27.70" fill="#08080a"/>
<rect x="1359.50" y="274.60" width="18.20" height="26.50" fill="#121214"/>
<rect x="1365.87" y="279.90" width="11.83" height="14.57" fill="#5a5e60"/>
<rect x="1364.96" y="293.15" width="11.83" height="7.95" fill="#e0908a"/>
<rect x="1361.32" y="277.25" width="5.46" height="7.95" fill="#2a2a2c"/>
<rect x="1363.14" y="279.90" width="1.82" height="2.65" fill="#c03030"/>
<rect x="1380.75" y="271.30" width="2.10" height="55.40" fill="#0b0b0d"/>
<rect x="1381.20" y="272.10" width="1.20" height="53.80" fill="#4479a9"/>
<rect x="1382.75" y="271.30" width="2.90" height="55.40" fill="#0b0b0d"/>
<rect x="1383.20" y="272.10" width="2.00" height="53.80" fill="#b07cc0"/>
<rect x="372.90" y="272.50" width="1.10" height="53.00" fill="#0b0b0d"/>
<rect x="373.00" y="275.00" width="0.90" height="2.40" fill="#8a867a"/>
<rect x="373.00" y="280.00" width="0.90" height="2.40" fill="#8a867a"/>
<rect x="373.00" y="285.00" width="0.90" height="2.40" fill="#8a867a"/>
<rect x="373.00" y="290.00" width="0.90" height="2.40" fill="#8a867a"/>
<rect x="373.00" y="295.00" width="0.90" height="2.40" fill="#8a867a"/>
<rect x="373.00" y="300.00" width="0.90" height="2.40" fill="#8a867a"/>
<rect x="373.00" y="305.00" width="0.90" height="2.40" fill="#8a867a"/>
<rect x="373.00" y="310.00" width="0.90" height="2.40" fill="#8a867a"/>
<rect x="373.00" y="315.00" width="0.90" height="2.40" fill="#8a867a"/>
<rect x="373.00" y="320.00" width="0.90" height="2.40" fill="#8a867a"/>
<rect x="219.00" y="331.60" width="1.00" height="57.40" fill="#479468"/>
<rect x="221.40" y="330.80" width="24.70" height="59.00" fill="#0b0b0d" rx="3.8"/>
<rect x="222.20" y="331.60" width="23.10" height="57.40" fill="#479468" rx="3"/>
<clipPath id="c2222_331"><rect x="222.20" y="331.60" width="23.10" height="57.40" rx="3"/></clipPath>
<g clip-path="url(#c2222_331)">
<polygon points="222.2,334.0 223.2,334.0 223.2,334.1 224.2,334.1 224.2,333.7 225.2,333.7 225.2,333.4 226.2,333.4 226.2,333.6 227.2,333.6 227.2,334.1 228.2,334.1 228.2,332.9 229.2,332.9 229.2,333.9 230.2,333.9 230.2,332.7 231.2,332.7 231.2,333.6 232.2,333.6 232.2,338.0 233.2,338.0 233.2,337.1 234.3,337.1 234.3,334.1 235.3,334.1 235.3,332.9 236.3,332.9 236.3,333.3 237.3,333.3 237.3,333.7 238.3,333.7 238.3,334.2 239.3,334.2 239.3,333.9 240.3,333.9 240.3,333.6 241.3,333.6 241.3,333.3 242.3,333.3 242.3,333.8 243.3,333.8 243.3,335.6 244.3,335.6 244.3,333.3 245.3,333.3 245.3,362.8 244.3,362.8 244.3,361.4 243.3,361.4 243.3,363.2 242.3,363.2 242.3,362.8 241.3,362.8 241.3,362.8 240.3,362.8 240.3,362.5 239.3,362.5 239.3,362.5 238.3,362.5 238.3,362.1 237.3,362.1 237.3,363.8 236.3,363.8 236.3,363.4 235.3,363.4 235.3,362.7 234.3,362.7 234.3,359.4 233.2,359.4 233.2,357.5 232.2,357.5 232.2,362.6 231.2,362.6 231.2,362.6 230.2,362.6 230.2,362.9 229.2,362.9 229.2,363.1 228.2,363.1 228.2,361.2 227.2,361.2 227.2,363.8 226.2,363.8 226.2,362.3 225.2,362.3 225.2,363.1 224.2,363.1 224.2,362.9 223.2,362.9 223.2,362.2 222.2,362.2" fill="#dbf0e3"/>
<rect x="222.20" y="348.00" width="23.10" height="1.00" fill="rgba(60,80,70,0.45)"/>
</g>
<rect x="222.20" y="364.20" width="23.10" height="0.90" fill="rgba(10,40,25,0.35)"/>
<rect x="245.90" y="330.80" width="62.90" height="59.00" fill="#0b0b0d" rx="3.8"/>
<rect x="246.70" y="331.60" width="61.30" height="57.40" fill="#3b6a4e" rx="3"/>
<rect x="246.70" y="348.10" width="61.30" height="1.00" fill="rgba(0,0,0,0.22)"/>
<rect x="246.70" y="364.00" width="61.30" height="1.00" fill="rgba(255,255,255,0.30)"/>
<rect x="308.50" y="330.80" width="65.80" height="59.00" fill="#0b0b0d" rx="3.8"/>
<rect x="309.30" y="331.60" width="64.20" height="57.40" fill="#3b6a4e" rx="3"/>
<rect x="309.30" y="348.10" width="64.20" height="1.00" fill="rgba(0,0,0,0.22)"/>
<rect x="309.30" y="364.00" width="64.20" height="1.00" fill="rgba(255,255,255,0.30)"/>
<rect x="374.30" y="330.80" width="10.30" height="59.00" fill="#0b0b0d"/>
<rect x="375.10" y="331.60" width="8.70" height="57.40" fill="#3b6a4e"/>
<rect x="375.10" y="331.60" width="3.90" height="57.40" fill="#479468"/>
<rect x="384.20" y="330.80" width="9.60" height="59.00" fill="#0b0b0d"/>
<rect x="385.00" y="331.60" width="8.00" height="57.40" fill="#3b6a4e"/>
<rect x="393.30" y="330.80" width="9.50" height="59.00" fill="#0b0b0d"/>
<rect x="394.10" y="331.60" width="7.90" height="57.40" fill="#3b6a4e"/>
<rect x="402.20" y="330.80" width="11.60" height="59.00" fill="#0b0b0d"/>
<rect x="403.00" y="331.60" width="10.00" height="57.40" fill="#3b6a4e"/>
<rect x="409.00" y="331.60" width="4.00" height="57.40" fill="#479468"/>
<rect x="413.30" y="330.80" width="5.60" height="59.00" fill="#0b0b0d"/>
<rect x="414.10" y="331.60" width="4.00" height="57.40" fill="#479468"/>
<rect x="428.55" y="330.80" width="3.00" height="59.00" fill="#0b0b0d"/>
<rect x="429.00" y="331.60" width="2.10" height="57.40" fill="#3b6a4e"/>
<rect x="431.20" y="330.80" width="16.50" height="59.00" fill="#0b0b0d"/>
<rect x="432.00" y="331.60" width="14.90" height="57.40" fill="#3b6a4e"/>
<rect x="447.20" y="330.80" width="9.60" height="59.00" fill="#0b0b0d"/>
<rect x="448.00" y="331.60" width="8.00" height="57.40" fill="#3b6a4e"/>
<rect x="456.90" y="331.60" width="1.10" height="57.40" fill="#3b6a4e"/>
<rect x="458.30" y="330.80" width="11.80" height="59.00" fill="#0b0b0d"/>
<rect x="459.10" y="331.60" width="10.20" height="57.40" fill="#3b6a4e"/>
<rect x="469.60" y="330.80" width="4.90" height="59.00" fill="#0b0b0d"/>
<rect x="470.40" y="331.60" width="3.30" height="57.40" fill="#3b6a4e"/>
<rect x="474.40" y="330.80" width="15.20" height="59.00" fill="#0b0b0d" rx="3.8"/>
<rect x="475.20" y="331.60" width="13.60" height="57.40" fill="#3b6a4e" rx="3"/>
<rect x="475.20" y="348.10" width="13.60" height="1.00" fill="rgba(0,0,0,0.22)"/>
<rect x="475.20" y="364.00" width="13.60" height="1.00" fill="rgba(0,0,0,0.25)"/>
<rect x="475.50" y="346.20" width="12.70" height="2.30" fill="#e4efe8"/>
<rect x="489.20" y="330.80" width="10.60" height="59.00" fill="#0b0b0d"/>
<rect x="490.00" y="331.60" width="9.00" height="57.40" fill="#3b6a4e"/>
<rect x="499.60" y="330.80" width="10.60" height="59.00" fill="#0b0b0d" rx="3.8"/>
<rect x="500.40" y="331.60" width="9.00" height="57.40" fill="#3b6a4e" rx="3"/>
<rect x="500.40" y="348.10" width="9.00" height="1.00" fill="rgba(0,0,0,0.22)"/>
<rect x="500.40" y="364.00" width="9.00" height="1.00" fill="rgba(0,0,0,0.25)"/>
<rect x="509.50" y="330.80" width="15.30" height="59.00" fill="#0b0b0d"/>
<rect x="510.30" y="331.60" width="13.70" height="57.40" fill="#3b6a4e"/>
<rect x="524.40" y="330.80" width="16.70" height="59.00" fill="#0b0b0d" rx="3.8"/>
<rect x="525.20" y="331.60" width="15.10" height="57.40" fill="#3b6a4e" rx="3"/>
<rect x="525.20" y="348.10" width="15.10" height="1.00" fill="rgba(0,0,0,0.22)"/>
<rect x="525.20" y="364.00" width="15.10" height="1.00" fill="rgba(0,0,0,0.25)"/>
<rect x="526.40" y="346.20" width="13.30" height="2.30" fill="#e4efe8"/>
<rect x="531.75" y="340.80" width="2.20" height="12.80" fill="#e4efe8"/>
<rect x="541.50" y="331.60" width="0.90" height="57.40" fill="#3b6a4e"/>
<rect x="542.40" y="330.80" width="15.10" height="59.00" fill="#0b0b0d" rx="3.8"/>
<rect x="543.20" y="331.60" width="13.50" height="57.40" fill="#3b6a4e" rx="3"/>
<rect x="543.20" y="348.10" width="13.50" height="1.00" fill="rgba(0,0,0,0.22)"/>
<rect x="543.20" y="364.00" width="13.50" height="1.00" fill="rgba(0,0,0,0.25)"/>
<rect x="543.50" y="346.20" width="12.60" height="2.30" fill="#e4efe8"/>
<rect x="557.20" y="330.80" width="7.60" height="59.00" fill="#0b0b0d"/>
<rect x="558.00" y="331.60" width="6.00" height="57.40" fill="#3b6a4e"/>
<rect x="564.50" y="330.80" width="18.30" height="59.00" fill="#0b0b0d" rx="3.8"/>
<rect x="565.30" y="331.60" width="16.70" height="57.40" fill="#3b6a4e" rx="3"/>
<clipPath id="c5653_331"><rect x="565.30" y="331.60" width="16.70" height="57.40" rx="3"/></clipPath>
<g clip-path="url(#c5653_331)">
<polygon points="565.3,346.7 566.3,346.7 566.3,345.4 567.3,345.4 567.3,341.5 568.2,341.5 568.2,345.3 569.2,345.3 569.2,345.8 570.2,345.8 570.2,346.5 571.2,346.5 571.2,345.1 572.2,345.1 572.2,346.3 573.2,346.3 573.2,344.8 574.1,344.8 574.1,345.8 575.1,345.8 575.1,344.8 576.1,344.8 576.1,341.5 577.1,341.5 577.1,346.0 578.1,346.0 578.1,342.8 579.1,342.8 579.1,346.3 580.0,346.3 580.0,345.7 581.0,345.7 581.0,346.2 582.0,346.2 582.0,349.9 581.0,349.9 581.0,350.4 580.0,350.4 580.0,349.9 579.1,349.9 579.1,353.6 578.1,353.6 578.1,350.3 577.1,350.3 577.1,355.0 576.1,355.0 576.1,351.6 575.1,351.6 575.1,350.2 574.1,350.2 574.1,351.4 573.2,351.4 573.2,350.0 572.2,350.0 572.2,351.1 571.2,351.1 571.2,349.7 570.2,349.7 570.2,350.6 569.2,350.6 569.2,350.9 568.2,350.9 568.2,354.5 567.3,354.5 567.3,350.8 566.3,350.8 566.3,349.4 565.3,349.4" fill="#dbf0e3"/>
<rect x="565.30" y="348.00" width="16.70" height="1.00" fill="rgba(60,80,70,0.45)"/>
</g>
<rect x="565.30" y="364.20" width="16.70" height="0.90" fill="rgba(10,40,25,0.35)"/>
<rect x="582.20" y="330.80" width="35.60" height="59.00" fill="#0b0b0d" rx="3.8"/>
<rect x="583.00" y="331.60" width="34.00" height="57.40" fill="#3b6a4e" rx="3"/>
<clipPath id="c5830_331"><rect x="583.00" y="331.60" width="34.00" height="57.40" rx="3"/></clipPath>
<g clip-path="url(#c5830_331)">
<polygon points="583.0,346.7 584.0,346.7 584.0,346.3 585.0,346.3 585.0,346.0 586.0,346.0 586.0,346.8 587.0,346.8 587.0,346.6 588.0,346.6 588.0,346.8 589.0,346.8 589.0,343.6 590.0,343.6 590.0,346.0 591.0,346.0 591.0,346.5 592.0,346.5 592.0,338.9 593.0,338.9 593.0,346.6 594.0,346.6 594.0,346.0 595.0,346.0 595.0,344.9 596.0,344.9 596.0,346.8 597.0,346.8 597.0,343.9 598.0,343.9 598.0,346.8 599.0,346.8 599.0,344.6 600.0,344.6 600.0,342.1 601.0,342.1 601.0,346.4 602.0,346.4 602.0,345.6 603.0,345.6 603.0,346.1 604.0,346.1 604.0,345.0 605.0,345.0 605.0,335.2 606.0,335.2 606.0,342.4 607.0,342.4 607.0,346.0 608.0,346.0 608.0,346.7 609.0,346.7 609.0,346.2 610.0,346.2 610.0,344.7 611.0,344.7 611.0,344.7 612.0,344.7 612.0,340.3 613.0,340.3 613.0,346.3 614.0,346.3 614.0,346.4 615.0,346.4 615.0,344.8 616.0,344.8 616.0,337.8 617.0,337.8 617.0,358.2 616.0,358.2 616.0,351.6 615.0,351.6 615.0,349.9 614.0,349.9 614.0,349.9 613.0,349.9 613.0,356.5 612.0,356.5 612.0,351.2 611.0,351.2 611.0,351.3 610.0,351.3 610.0,350.0 609.0,350.0 609.0,349.4 608.0,349.4 608.0,350.2 607.0,350.2 607.0,354.2 606.0,354.2 606.0,361.7 605.0,361.7 605.0,351.0 604.0,351.0 604.0,350.2 603.0,350.2 603.0,350.7 602.0,350.7 602.0,349.7 601.0,349.7 601.0,353.8 600.0,353.8 600.0,351.4 599.0,351.4 599.0,349.5 598.0,349.5 598.0,352.7 597.0,352.7 597.0,349.4 596.0,349.4 596.0,351.2 595.0,351.2 595.0,350.3 594.0,350.3 594.0,349.7 593.0,349.7 593.0,357.0 592.0,357.0 592.0,349.7 591.0,349.7 591.0,350.1 590.0,350.1 590.0,352.6 589.0,352.6 589.0,349.5 588.0,349.5 588.0,349.7 587.0,349.7 587.0,349.5 586.0,349.5 586.0,350.2 585.0,350.2 585.0,349.7 584.0,349.7 584.0,349.6 583.0,349.6" fill="#dbf0e3"/>
<rect x="583.00" y="348.00" width="34.00" height="1.00" fill="rgba(60,80,70,0.45)"/>
</g>
<rect x="583.00" y="364.20" width="34.00" height="0.90" fill="rgba(10,40,25,0.35)"/>
<rect x="619.70" y="330.80" width="7.90" height="59.00" fill="#0b0b0d"/>
<rect x="620.50" y="331.60" width="6.30" height="57.40" fill="#3b6a4e"/>
<rect x="627.20" y="330.80" width="17.80" height="59.00" fill="#0b0b0d"/>
<rect x="628.00" y="331.60" width="16.20" height="57.40" fill="#3b6a4e"/>
<rect x="644.85" y="330.80" width="3.00" height="59.00" fill="#0b0b0d"/>
<rect x="645.30" y="331.60" width="2.10" height="57.40" fill="#3b6a4e"/>
<rect x="647.75" y="330.80" width="3.40" height="59.00" fill="#0b0b0d"/>
<rect x="648.20" y="331.60" width="2.50" height="57.40" fill="#3b6a4e"/>
<rect x="651.20" y="330.80" width="7.60" height="59.00" fill="#0b0b0d"/>
<rect x="652.00" y="331.60" width="6.00" height="57.40" fill="#3b6a4e"/>
<rect x="658.20" y="330.80" width="6.40" height="59.00" fill="#0b0b0d"/>
<rect x="659.00" y="331.60" width="4.80" height="57.40" fill="#3b6a4e"/>
<rect x="664.40" y="330.80" width="34.40" height="59.00" fill="#0b0b0d" rx="3.8"/>
<rect x="665.20" y="331.60" width="32.80" height="57.40" fill="#3b6a4e" rx="3"/>
<clipPath id="c6652_331"><rect x="665.20" y="331.60" width="32.80" height="57.40" rx="3"/></clipPath>
<g clip-path="url(#c6652_331)">
<polygon points="665.2,333.9 666.2,333.9 666.2,337.6 667.2,337.6 667.2,337.7 668.2,337.7 668.2,337.6 669.2,337.6 669.2,338.4 670.2,338.4 670.2,337.0 671.2,337.0 671.2,335.5 672.2,335.5 672.2,336.5 673.2,336.5 673.2,336.0 674.1,336.0 674.1,335.9 675.1,335.9 675.1,336.4 676.1,336.4 676.1,339.2 677.1,339.2 677.1,338.1 678.1,338.1 678.1,334.6 679.1,334.6 679.1,337.1 680.1,337.1 680.1,335.7 681.1,335.7 681.1,338.6 682.1,338.6 682.1,337.6 683.1,337.6 683.1,334.3 684.1,334.3 684.1,335.6 685.1,335.6 685.1,333.4 686.1,333.4 686.1,335.3 687.1,335.3 687.1,335.9 688.1,335.9 688.1,336.3 689.1,336.3 689.1,336.2 690.0,336.2 690.0,334.7 691.0,334.7 691.0,333.2 692.0,333.2 692.0,335.6 693.0,335.6 693.0,333.8 694.0,333.8 694.0,338.5 695.0,338.5 695.0,338.8 696.0,338.8 696.0,338.8 697.0,338.8 697.0,334.2 698.0,334.2 698.0,361.5 697.0,361.5 697.0,356.8 696.0,356.8 696.0,358.1 695.0,358.1 695.0,358.2 694.0,358.2 694.0,363.5 693.0,363.5 693.0,359.7 692.0,359.7 692.0,363.1 691.0,363.1 691.0,361.7 690.0,361.7 690.0,359.7 689.1,359.7 689.1,359.0 688.1,359.0 688.1,360.1 687.1,360.1 687.1,361.0 686.1,361.0 686.1,361.7 685.1,361.7 685.1,361.0 684.1,361.0 684.1,361.5 683.1,361.5 683.1,358.0 682.1,358.0 682.1,357.4 681.1,357.4 681.1,360.6 680.1,360.6 680.1,358.9 679.1,358.9 679.1,360.9 678.1,360.9 678.1,358.6 677.1,358.6 677.1,357.7 676.1,357.7 676.1,359.8 675.1,359.8 675.1,360.1 674.1,360.1 674.1,361.1 673.2,361.1 673.2,359.1 672.2,359.1 672.2,361.7 671.2,361.7 671.2,359.9 670.2,359.9 670.2,357.2 669.2,357.2 669.2,358.9 668.2,358.9 668.2,358.9 667.2,358.9 667.2,358.0 666.2,358.0 666.2,363.2 665.2,363.2" fill="#dbf0e3"/>
<rect x="665.20" y="348.00" width="32.80" height="1.00" fill="rgba(60,80,70,0.45)"/>
</g>
<rect x="665.20" y="364.20" width="32.80" height="0.90" fill="rgba(10,40,25,0.35)"/>
<rect x="698.75" y="330.80" width="2.60" height="59.00" fill="#0b0b0d"/>
<rect x="699.20" y="331.60" width="1.70" height="57.40" fill="#479468"/>
<rect x="701.20" y="330.80" width="5.60" height="59.00" fill="#0b0b0d"/>
<rect x="702.00" y="331.60" width="4.00" height="57.40" fill="#3b6a4e"/>
<rect x="706.40" y="330.80" width="12.40" height="59.00" fill="#0b0b0d" rx="3.8"/>
<rect x="707.20" y="331.60" width="10.80" height="57.40" fill="#3b6a4e" rx="3"/>
<clipPath id="c7072_331"><rect x="707.20" y="331.60" width="10.80" height="57.40" rx="3"/></clipPath>
<g clip-path="url(#c7072_331)">
<polygon points="707.2,334.2 708.2,334.2 708.2,338.4 709.2,338.4 709.2,333.4 710.1,333.4 710.1,337.6 711.1,337.6 711.1,333.3 712.1,333.3 712.1,334.7 713.1,334.7 713.1,338.9 714.1,338.9 714.1,336.5 715.1,336.5 715.1,333.2 716.0,333.2 716.0,334.1 717.0,334.1 717.0,333.7 718.0,333.7 718.0,361.6 717.0,361.6 717.0,361.5 716.0,361.5 716.0,363.1 715.1,363.1 715.1,359.0 714.1,359.0 714.1,357.0 713.1,357.0 713.1,362.4 712.1,362.4 712.1,363.0 711.1,363.0 711.1,358.3 710.1,358.3 710.1,362.7 709.2,362.7 709.2,358.4 708.2,358.4 708.2,361.0 707.2,361.0" fill="#dbf0e3"/>
<rect x="707.20" y="348.00" width="10.80" height="1.00" fill="rgba(60,80,70,0.45)"/>
</g>
<rect x="707.20" y="364.20" width="10.80" height="0.90" fill="rgba(10,40,25,0.35)"/>
<rect x="718.55" y="330.80" width="2.60" height="59.00" fill="#0b0b0d"/>
<rect x="719.00" y="331.60" width="1.70" height="57.40" fill="#3b6a4e"/>
<rect x="720.90" y="330.80" width="5.90" height="59.00" fill="#0b0b0d"/>
<rect x="721.70" y="331.60" width="4.30" height="57.40" fill="#3b6a4e"/>
<rect x="726.55" y="330.80" width="3.00" height="59.00" fill="#0b0b0d"/>
<rect x="727.00" y="331.60" width="2.10" height="57.40" fill="#3b6a4e"/>
<rect x="729.20" y="330.80" width="12.20" height="59.00" fill="#0b0b0d"/>
<rect x="730.00" y="331.60" width="10.60" height="57.40" fill="#3b6a4e"/>
<rect x="740.90" y="330.80" width="25.10" height="59.00" fill="#0b0b0d" rx="3.8"/>
<rect x="741.70" y="331.60" width="23.50" height="57.40" fill="#3b6a4e" rx="3"/>
<clipPath id="c7417_331"><rect x="741.70" y="331.60" width="23.50" height="57.40" rx="3"/></clipPath>
<g clip-path="url(#c7417_331)">
<polygon points="741.7,341.1 742.7,341.1 742.7,339.8 743.7,339.8 743.7,337.7 744.6,337.7 744.6,338.9 745.6,338.9 745.6,339.7 746.6,339.7 746.6,340.1 747.6,340.1 747.6,337.8 748.6,337.8 748.6,340.4 749.5,340.4 749.5,336.8 750.5,336.8 750.5,337.4 751.5,337.4 751.5,338.9 752.5,338.9 752.5,339.4 753.5,339.4 753.5,338.0 754.4,338.0 754.4,334.9 755.4,334.9 755.4,337.9 756.4,337.9 756.4,339.4 757.4,339.4 757.4,341.1 758.3,341.1 758.3,341.0 759.3,341.0 759.3,340.1 760.3,340.1 760.3,340.9 761.3,340.9 761.3,337.1 762.3,337.1 762.3,340.0 763.2,340.0 763.2,339.9 764.2,339.9 764.2,340.6 765.2,340.6 765.2,355.7 764.2,355.7 764.2,355.9 763.2,355.9 763.2,356.0 762.3,356.0 762.3,358.2 761.3,358.2 761.3,354.7 760.3,354.7 760.3,356.0 759.3,356.0 759.3,354.7 758.3,354.7 758.3,354.9 757.4,354.9 757.4,356.1 756.4,356.1 756.4,358.3 755.4,358.3 755.4,360.7 754.4,360.7 754.4,358.2 753.5,358.2 753.5,356.7 752.5,356.7 752.5,357.1 751.5,357.1 751.5,358.0 750.5,358.0 750.5,359.1 749.5,359.1 749.5,355.5 748.6,355.5 748.6,359.2 747.6,359.2 747.6,355.7 746.6,355.7 746.6,356.6 745.6,356.6 745.6,358.0 744.6,358.0 744.6,359.3 743.7,359.3 743.7,356.1 742.7,356.1 742.7,355.0 741.7,355.0" fill="#dbf0e3"/>
<rect x="741.70" y="348.00" width="23.50" height="1.00" fill="rgba(60,80,70,0.45)"/>
</g>
<rect x="741.70" y="364.20" width="23.50" height="0.90" fill="rgba(10,40,25,0.35)"/>
<rect x="765.70" y="330.80" width="30.10" height="59.00" fill="#0b0b0d" rx="3.8"/>
<rect x="766.50" y="331.60" width="28.50" height="57.40" fill="#3b6a4e" rx="3"/>
<clipPath id="c7665_331"><rect x="766.50" y="331.60" width="28.50" height="57.40" rx="3"/></clipPath>
<g clip-path="url(#c7665_331)">
<polygon points="766.5,332.2 767.5,332.2 767.5,332.2 768.5,332.2 768.5,337.1 769.6,337.1 769.6,332.0 770.6,332.0 770.6,332.2 771.6,332.2 771.6,332.8 772.6,332.8 772.6,334.2 773.6,334.2 773.6,332.2 774.6,332.2 774.6,338.5 775.7,338.5 775.7,332.4 776.7,332.4 776.7,334.7 777.7,334.7 777.7,336.0 778.7,336.0 778.7,335.4 779.7,335.4 779.7,332.6 780.8,332.6 780.8,332.7 781.8,332.7 781.8,332.7 782.8,332.7 782.8,336.1 783.8,336.1 783.8,332.3 784.8,332.3 784.8,332.4 785.8,332.4 785.8,332.2 786.9,332.2 786.9,336.4 787.9,336.4 787.9,332.3 788.9,332.3 788.9,332.2 789.9,332.2 789.9,332.7 790.9,332.7 790.9,332.2 791.9,332.2 791.9,332.2 793.0,332.2 793.0,336.5 794.0,336.5 794.0,332.4 795.0,332.4 795.0,364.2 794.0,364.2 794.0,359.7 793.0,359.7 793.0,362.8 791.9,362.8 791.9,364.2 790.9,364.2 790.9,364.2 789.9,364.2 789.9,363.2 788.9,363.2 788.9,364.2 787.9,364.2 787.9,359.1 786.9,359.1 786.9,364.0 785.8,364.0 785.8,363.7 784.8,363.7 784.8,363.9 783.8,363.9 783.8,359.7 782.8,359.7 782.8,363.9 781.8,363.9 781.8,364.0 780.8,364.0 780.8,364.0 779.7,364.0 779.7,360.3 778.7,360.3 778.7,359.4 777.7,359.4 777.7,360.4 776.7,360.4 776.7,364.0 775.7,364.0 775.7,357.4 774.6,357.4 774.6,364.2 773.6,364.2 773.6,361.4 772.6,361.4 772.6,362.6 771.6,362.6 771.6,362.9 770.6,362.9 770.6,364.2 769.6,364.2 769.6,359.4 768.5,359.4 768.5,364.2 767.5,364.2 767.5,364.2 766.5,364.2" fill="#dbf0e3"/>
<rect x="766.50" y="348.00" width="28.50" height="1.00" fill="rgba(60,80,70,0.45)"/>
</g>
<rect x="766.50" y="364.20" width="28.50" height="0.90" fill="rgba(10,40,25,0.35)"/>
<rect x="795.50" y="330.80" width="34.10" height="59.00" fill="#0b0b0d" rx="3.8"/>
<rect x="796.30" y="331.60" width="32.50" height="57.40" fill="#3b6a4e" rx="3"/>
<clipPath id="c7963_331"><rect x="796.30" y="331.60" width="32.50" height="57.40" rx="3"/></clipPath>
<g clip-path="url(#c7963_331)">
<polygon points="796.3,336.7 797.3,336.7 797.3,332.6 798.3,332.6 798.3,338.1 799.3,338.1 799.3,332.7 800.4,332.7 800.4,332.0 801.4,332.0 801.4,332.1 802.4,332.1 802.4,332.1 803.4,332.1 803.4,332.6 804.4,332.6 804.4,336.5 805.4,336.5 805.4,332.8 806.5,332.8 806.5,332.4 807.5,332.4 807.5,332.7 808.5,332.7 808.5,332.6 809.5,332.6 809.5,339.2 810.5,339.2 810.5,334.5 811.5,334.5 811.5,332.1 812.5,332.1 812.5,332.1 813.6,332.1 813.6,332.5 814.6,332.5 814.6,332.0 815.6,332.0 815.6,332.5 816.6,332.5 816.6,332.6 817.6,332.6 817.6,332.7 818.6,332.7 818.6,337.6 819.7,337.6 819.7,337.8 820.7,337.8 820.7,332.4 821.7,332.4 821.7,332.5 822.7,332.5 822.7,334.3 823.7,334.3 823.7,335.7 824.7,335.7 824.7,333.9 825.8,333.9 825.8,332.2 826.8,332.2 826.8,332.2 827.8,332.2 827.8,332.2 828.8,332.2 828.8,364.2 827.8,364.2 827.8,363.4 826.8,363.4 826.8,363.3 825.8,363.3 825.8,361.3 824.7,361.3 824.7,360.2 823.7,360.2 823.7,361.0 822.7,361.0 822.7,362.9 821.7,362.9 821.7,362.9 820.7,362.9 820.7,358.3 819.7,358.3 819.7,359.4 818.6,359.4 818.6,364.2 817.6,364.2 817.6,362.9 816.6,362.9 816.6,363.7 815.6,363.7 815.6,364.2 814.6,364.2 814.6,363.0 813.6,363.0 813.6,363.3 812.5,363.3 812.5,363.3 811.5,363.3 811.5,361.5 810.5,361.5 810.5,357.0 809.5,357.0 809.5,363.2 808.5,363.2 808.5,363.9 807.5,363.9 807.5,363.2 806.5,363.2 806.5,364.2 805.4,364.2 805.4,360.1 804.4,360.1 804.4,363.1 803.4,363.1 803.4,363.7 802.4,363.7 802.4,364.0 801.4,364.0 801.4,363.2 800.4,363.2 800.4,364.2 799.3,364.2 799.3,357.4 798.3,357.4 798.3,363.0 797.3,363.0 797.3,359.8 796.3,359.8" fill="#dbf0e3"/>
<rect x="796.30" y="348.00" width="32.50" height="1.00" fill="rgba(60,80,70,0.45)"/>
</g>
<rect x="796.30" y="364.20" width="32.50" height="0.90" fill="rgba(10,40,25,0.35)"/>
<rect x="829.20" y="330.80" width="50.20" height="59.00" fill="#0b0b0d" rx="3.8"/>
<rect x="830.00" y="331.60" width="48.60" height="57.40" fill="#3b6a4e" rx="3"/>
<clipPath id="c8300_331"><rect x="830.00" y="331.60" width="48.60" height="57.40" rx="3"/></clipPath>
<g clip-path="url(#c8300_331)">
<polygon points="830.0,332.0 831.0,332.0 831.0,332.0 832.0,332.0 832.0,332.0 833.0,332.0 833.0,332.0 834.0,332.0 834.0,332.0 835.0,332.0 835.0,332.0 836.0,332.0 836.0,332.0 836.9,332.0 836.9,332.0 837.9,332.0 837.9,332.0 838.9,332.0 838.9,332.0 839.9,332.0 839.9,332.0 840.9,332.0 840.9,332.0 841.9,332.0 841.9,332.0 842.9,332.0 842.9,332.0 843.9,332.0 843.9,332.0 844.9,332.0 844.9,332.0 845.9,332.0 845.9,332.0 846.9,332.0 846.9,332.0 847.9,332.0 847.9,332.0 848.8,332.0 848.8,332.0 849.8,332.0 849.8,332.0 850.8,332.0 850.8,332.0 851.8,332.0 851.8,333.6 852.8,333.6 852.8,333.6 853.8,333.6 853.8,332.0 854.8,332.0 854.8,332.0 855.8,332.0 855.8,332.0 856.8,332.0 856.8,332.0 857.8,332.0 857.8,333.6 858.8,333.6 858.8,332.0 859.8,332.0 859.8,332.0 860.7,332.0 860.7,332.0 861.7,332.0 861.7,332.0 862.7,332.0 862.7,332.0 863.7,332.0 863.7,332.0 864.7,332.0 864.7,332.0 865.7,332.0 865.7,332.0 866.7,332.0 866.7,332.0 867.7,332.0 867.7,332.0 868.7,332.0 868.7,332.0 869.7,332.0 869.7,332.0 870.7,332.0 870.7,332.0 871.7,332.0 871.7,332.0 872.6,332.0 872.6,332.0 873.6,332.0 873.6,332.0 874.6,332.0 874.6,333.6 875.6,333.6 875.6,332.0 876.6,332.0 876.6,332.0 877.6,332.0 877.6,332.0 878.6,332.0 878.6,364.2 877.6,364.2 877.6,364.2 876.6,364.2 876.6,364.2 875.6,364.2 875.6,362.6 874.6,362.6 874.6,364.2 873.6,364.2 873.6,364.2 872.6,364.2 872.6,364.2 871.7,364.2 871.7,364.2 870.7,364.2 870.7,364.2 869.7,364.2 869.7,364.2 868.7,364.2 868.7,364.2 867.7,364.2 867.7,364.2 866.7,364.2 866.7,364.2 865.7,364.2 865.7,364.2 864.7,364.2 864.7,364.2 863.7,364.2 863.7,364.2 862.7,364.2 862.7,364.2 861.7,364.2 861.7,364.2 860.7,364.2 860.7,364.2 859.8,364.2 859.8,364.2 858.8,364.2 858.8,362.6 857.8,362.6 857.8,364.2 856.8,364.2 856.8,364.2 855.8,364.2 855.8,364.2 854.8,364.2 854.8,364.2 853.8,364.2 853.8,362.6 852.8,362.6 852.8,362.6 851.8,362.6 851.8,364.2 850.8,364.2 850.8,364.2 849.8,364.2 849.8,364.2 848.8,364.2 848.8,364.2 847.9,364.2 847.9,364.2 846.9,364.2 846.9,364.2 845.9,364.2 845.9,364.2 844.9,364.2 844.9,364.2 843.9,364.2 843.9,364.2 842.9,364.2 842.9,364.2 841.9,364.2 841.9,364.2 840.9,364.2 840.9,364.2 839.9,364.2 839.9,364.2 838.9,364.2 838.9,364.2 837.9,364.2 837.9,364.2 836.9,364.2 836.9,364.2 836.0,364.2 836.0,364.2 835.0,364.2 835.0,364.2 834.0,364.2 834.0,364.2 833.0,364.2 833.0,364.2 832.0,364.2 832.0,364.2 831.0,364.2 831.0,364.2 830.0,364.2" fill="#dbf0e3"/>
<rect x="830.00" y="348.00" width="48.60" height="1.00" fill="rgba(60,80,70,0.45)"/>
</g>
<rect x="830.00" y="364.20" width="48.60" height="0.90" fill="rgba(10,40,25,0.35)"/>
<rect x="879.50" y="330.80" width="22.10" height="59.00" fill="#0b0b0d" rx="3.8"/>
<rect x="880.30" y="331.60" width="20.50" height="57.40" fill="#3b6a4e" rx="3"/>
<clipPath id="c8803_331"><rect x="880.30" y="331.60" width="20.50" height="57.40" rx="3"/></clipPath>
<g clip-path="url(#c8803_331)">
<polygon points="880.3,339.9 881.3,339.9 881.3,340.1 882.3,340.1 882.3,338.0 883.4,338.0 883.4,341.0 884.4,341.0 884.4,338.5 885.4,338.5 885.4,340.3 886.4,340.3 886.4,341.3 887.5,341.3 887.5,339.1 888.5,339.1 888.5,333.4 889.5,333.4 889.5,334.2 890.5,334.2 890.5,340.1 891.6,340.1 891.6,333.1 892.6,333.1 892.6,341.2 893.6,341.2 893.6,338.1 894.6,338.1 894.6,340.1 895.7,340.1 895.7,336.9 896.7,336.9 896.7,341.2 897.7,341.2 897.7,339.3 898.8,339.3 898.8,340.4 899.8,340.4 899.8,337.8 900.8,337.8 900.8,359.2 899.8,359.2 899.8,355.5 898.8,355.5 898.8,356.7 897.7,356.7 897.7,354.6 896.7,354.6 896.7,360.1 895.7,360.1 895.7,356.3 894.6,356.3 894.6,358.0 893.6,358.0 893.6,354.7 892.6,354.7 892.6,362.3 891.6,362.3 891.6,356.0 890.5,356.0 890.5,363.0 889.5,363.0 889.5,362.3 888.5,362.3 888.5,357.5 887.5,357.5 887.5,354.6 886.4,354.6 886.4,355.6 885.4,355.6 885.4,358.2 884.4,358.2 884.4,355.0 883.4,355.0 883.4,359.0 882.3,359.0 882.3,355.7 881.3,355.7 881.3,356.3 880.3,356.3" fill="#dbf0e3"/>
<rect x="880.30" y="348.00" width="20.50" height="1.00" fill="rgba(60,80,70,0.45)"/>
</g>
<rect x="880.30" y="364.20" width="20.50" height="0.90" fill="rgba(10,40,25,0.35)"/>
<rect x="901.50" y="330.80" width="14.30" height="59.00" fill="#0b0b0d" rx="3.8"/>
<rect x="902.30" y="331.60" width="12.70" height="57.40" fill="#3b6a4e" rx="3"/>
<clipPath id="c9023_331"><rect x="902.30" y="331.60" width="12.70" height="57.40" rx="3"/></clipPath>
<g clip-path="url(#c9023_331)">
<polygon points="902.3,338.9 903.3,338.9 903.3,336.7 904.3,336.7 904.3,333.6 905.2,333.6 905.2,332.8 906.2,332.8 906.2,337.1 907.2,337.1 907.2,333.2 908.2,333.2 908.2,339.0 909.1,339.0 909.1,336.8 910.1,336.8 910.1,337.1 911.1,337.1 911.1,339.2 912.1,339.2 912.1,337.0 913.0,337.0 913.0,338.4 914.0,338.4 914.0,337.9 915.0,337.9 915.0,358.1 914.0,358.1 914.0,357.0 913.0,357.0 913.0,359.9 912.1,359.9 912.1,356.8 911.1,356.8 911.1,358.6 910.1,358.6 910.1,360.2 909.1,360.2 909.1,357.0 908.2,357.0 908.2,362.9 907.2,362.9 907.2,358.3 906.2,358.3 906.2,363.2 905.2,363.2 905.2,363.4 904.3,363.4 904.3,360.1 903.3,360.1 903.3,357.1 902.3,357.1" fill="#dbf0e3"/>
<rect x="902.30" y="348.00" width="12.70" height="1.00" fill="rgba(60,80,70,0.45)"/>
</g>
<rect x="902.30" y="364.20" width="12.70" height="0.90" fill="rgba(10,40,25,0.35)"/>
<rect x="915.20" y="330.80" width="13.40" height="59.00" fill="#0b0b0d" rx="3.8"/>
<rect x="916.00" y="331.60" width="11.80" height="57.40" fill="#3b6a4e" rx="3"/>
<clipPath id="c9160_331"><rect x="916.00" y="331.60" width="11.80" height="57.40" rx="3"/></clipPath>
<g clip-path="url(#c9160_331)">
<polygon points="916.0,337.6 917.0,337.6 917.0,341.2 918.0,341.2 918.0,336.9 919.0,336.9 919.0,337.7 919.9,337.7 919.9,334.9 920.9,334.9 920.9,336.7 921.9,336.7 921.9,340.1 922.9,340.1 922.9,339.8 923.9,339.8 923.9,341.3 924.8,341.3 924.8,336.9 925.8,336.9 925.8,336.8 926.8,336.8 926.8,340.2 927.8,340.2 927.8,356.4 926.8,356.4 926.8,359.8 925.8,359.8 925.8,359.8 924.8,359.8 924.8,354.5 923.9,354.5 923.9,357.0 922.9,357.0 922.9,356.1 921.9,356.1 921.9,359.4 920.9,359.4 920.9,360.8 919.9,360.8 919.9,358.3 919.0,358.3 919.0,360.1 918.0,360.1 918.0,355.5 917.0,355.5 917.0,358.5 916.0,358.5" fill="#dbf0e3"/>
<rect x="916.00" y="348.00" width="11.80" height="1.00" fill="rgba(60,80,70,0.45)"/>
</g>
<rect x="916.00" y="364.20" width="11.80" height="0.90" fill="rgba(10,40,25,0.35)"/>
<rect x="928.20" y="330.80" width="9.80" height="59.00" fill="#0b0b0d"/>
<rect x="929.00" y="331.60" width="8.20" height="57.40" fill="#3b6a4e"/>
<rect x="937.70" y="330.80" width="69.80" height="59.00" fill="#0b0b0d" rx="3.8"/>
<rect x="938.50" y="331.60" width="68.20" height="57.40" fill="#3b6a4e" rx="3"/>
<clipPath id="c9385_331"><rect x="938.50" y="331.60" width="68.20" height="57.40" rx="3"/></clipPath>
<g clip-path="url(#c9385_331)">
<polygon points="938.5,333.8 939.5,333.8 939.5,335.1 940.5,335.1 940.5,333.0 941.5,333.0 941.5,335.6 942.5,335.6 942.5,335.4 943.5,335.4 943.5,336.4 944.5,336.4 944.5,335.0 945.5,335.0 945.5,336.5 946.5,336.5 946.5,336.1 947.5,336.1 947.5,334.3 948.5,334.3 948.5,334.5 949.5,334.5 949.5,334.6 950.5,334.6 950.5,333.5 951.5,333.5 951.5,332.7 952.5,332.7 952.5,336.0 953.5,336.0 953.5,335.2 954.5,335.2 954.5,334.8 955.5,334.8 955.5,335.6 956.6,335.6 956.6,335.4 957.6,335.4 957.6,332.5 958.6,332.5 958.6,335.0 959.6,335.0 959.6,332.0 960.6,332.0 960.6,335.5 961.6,335.5 961.6,333.6 962.6,333.6 962.6,338.0 963.6,338.0 963.6,332.7 964.6,332.7 964.6,337.5 965.6,337.5 965.6,335.7 966.6,335.7 966.6,337.6 967.6,337.6 967.6,332.6 968.6,332.6 968.6,335.3 969.6,335.3 969.6,332.2 970.6,332.2 970.6,333.8 971.6,333.8 971.6,335.5 972.6,335.5 972.6,335.9 973.6,335.9 973.6,335.4 974.6,335.4 974.6,333.6 975.6,333.6 975.6,336.5 976.6,336.5 976.6,333.5 977.6,333.5 977.6,335.1 978.6,335.1 978.6,332.9 979.6,332.9 979.6,336.2 980.6,336.2 980.6,334.7 981.6,334.7 981.6,333.6 982.6,333.6 982.6,335.8 983.6,335.8 983.6,334.7 984.6,334.7 984.6,335.1 985.6,335.1 985.6,337.4 986.6,337.4 986.6,334.6 987.6,334.6 987.6,332.0 988.6,332.0 988.6,335.6 989.7,335.6 989.7,335.6 990.7,335.6 990.7,332.4 991.7,332.4 991.7,332.8 992.7,332.8 992.7,332.5 993.7,332.5 993.7,335.8 994.7,335.8 994.7,334.0 995.7,334.0 995.7,332.4 996.7,332.4 996.7,333.7 997.7,333.7 997.7,334.2 998.7,334.2 998.7,335.2 999.7,335.2 999.7,332.3 1000.7,332.3 1000.7,334.3 1001.7,334.3 1001.7,332.1 1002.7,332.1 1002.7,335.9 1003.7,335.9 1003.7,334.1 1004.7,334.1 1004.7,332.3 1005.7,332.3 1005.7,332.4 1006.7,332.4 1006.7,364.2 1005.7,364.2 1005.7,364.2 1004.7,364.2 1004.7,362.1 1003.7,362.1 1003.7,361.2 1002.7,361.2 1002.7,363.3 1001.7,363.3 1001.7,362.6 1000.7,362.6 1000.7,364.2 999.7,364.2 999.7,362.0 998.7,362.0 998.7,362.8 997.7,362.8 997.7,361.7 996.7,361.7 996.7,364.2 995.7,364.2 995.7,361.9 994.7,361.9 994.7,360.4 993.7,360.4 993.7,362.6 992.7,362.6 992.7,363.4 991.7,363.4 991.7,364.2 990.7,364.2 990.7,361.1 989.7,361.1 989.7,359.7 988.6,359.7 988.6,364.2 987.6,364.2 987.6,360.6 986.6,360.6 986.6,358.8 985.6,358.8 985.6,361.0 984.6,361.0 984.6,360.7 983.6,360.7 983.6,360.3 982.6,360.3 982.6,361.7 981.6,361.7 981.6,360.6 980.6,360.6 980.6,359.9 979.6,359.9 979.6,362.5 978.6,362.5 978.6,361.0 977.6,361.0 977.6,363.4 976.6,363.4 976.6,360.2 975.6,360.2 975.6,362.0 974.6,362.0 974.6,360.8 973.6,360.8 973.6,360.6 972.6,360.6 972.6,359.7 971.6,359.7 971.6,362.2 970.6,362.2 970.6,363.8 969.6,363.8 969.6,361.2 968.6,361.2 968.6,363.4 967.6,363.4 967.6,358.7 966.6,358.7 966.6,360.4 965.6,360.4 965.6,358.4 964.6,358.4 964.6,363.8 963.6,363.8 963.6,358.3 962.6,358.3 962.6,362.9 961.6,362.9 961.6,360.0 960.6,360.0 960.6,364.2 959.6,364.2 959.6,360.2 958.6,360.2 958.6,364.2 957.6,364.2 957.6,360.9 956.6,360.9 956.6,359.7 955.5,359.7 955.5,362.2 954.5,362.2 954.5,361.5 953.5,361.5 953.5,359.7 952.5,359.7 952.5,362.6 951.5,362.6 951.5,362.5 950.5,362.5 950.5,361.6 949.5,361.6 949.5,361.5 948.5,361.5 948.5,361.3 947.5,361.3 947.5,359.5 946.5,359.5 946.5,360.3 945.5,360.3 945.5,361.9 944.5,361.9 944.5,359.7 943.5,359.7 943.5,360.2 942.5,360.2 942.5,361.2 941.5,361.2 941.5,362.4 940.5,362.4 940.5,361.8 939.5,361.8 939.5,362.7 938.5,362.7" fill="#dbf0e3"/>
<rect x="938.50" y="348.00" width="68.20" height="1.00" fill="rgba(60,80,70,0.45)"/>
</g>
<rect x="938.50" y="364.20" width="68.20" height="0.90" fill="rgba(10,40,25,0.35)"/>
<rect x="1007.00" y="330.80" width="9.80" height="59.00" fill="#0b0b0d"/>
<rect x="1007.80" y="331.60" width="8.20" height="57.40" fill="#3b6a4e"/>
<rect x="1016.40" y="330.80" width="17.20" height="59.00" fill="#0b0b0d" rx="3.8"/>
<rect x="1017.20" y="331.60" width="15.60" height="57.40" fill="#3b6a4e" rx="3"/>
<clipPath id="c10172_331"><rect x="1017.20" y="331.60" width="15.60" height="57.40" rx="3"/></clipPath>
<g clip-path="url(#c10172_331)">
<polygon points="1017.2,333.0 1018.2,333.0 1018.2,337.6 1019.2,337.6 1019.2,335.8 1020.1,335.8 1020.1,335.3 1021.1,335.3 1021.1,335.9 1022.1,335.9 1022.1,332.4 1023.0,332.4 1023.0,335.3 1024.0,335.3 1024.0,335.1 1025.0,335.1 1025.0,335.7 1026.0,335.7 1026.0,332.3 1027.0,332.3 1027.0,332.5 1027.9,332.5 1027.9,333.0 1028.9,333.0 1028.9,334.1 1029.9,334.1 1029.9,334.9 1030.8,334.9 1030.8,334.0 1031.8,334.0 1031.8,332.5 1032.8,332.5 1032.8,363.1 1031.8,363.1 1031.8,362.9 1030.8,362.9 1030.8,360.4 1029.9,360.4 1029.9,362.6 1028.9,362.6 1028.9,362.4 1027.9,362.4 1027.9,363.6 1027.0,363.6 1027.0,364.2 1026.0,364.2 1026.0,360.2 1025.0,360.2 1025.0,361.3 1024.0,361.3 1024.0,361.9 1023.0,361.9 1023.0,363.2 1022.1,363.2 1022.1,360.9 1021.1,360.9 1021.1,360.7 1020.1,360.7 1020.1,360.7 1019.2,360.7 1019.2,359.4 1018.2,359.4 1018.2,362.3 1017.2,362.3" fill="#dbf0e3"/>
<rect x="1017.20" y="348.00" width="15.60" height="1.00" fill="rgba(60,80,70,0.45)"/>
</g>
<rect x="1017.20" y="364.20" width="15.60" height="0.90" fill="rgba(10,40,25,0.35)"/>
<rect x="1033.00" y="330.80" width="4.80" height="59.00" fill="#0b0b0d"/>
<rect x="1033.80" y="331.60" width="3.20" height="57.40" fill="#3b6a4e"/>
<rect x="1037.40" y="330.80" width="30.00" height="59.00" fill="#0b0b0d" rx="3.8"/>
<rect x="1038.20" y="331.60" width="28.40" height="57.40" fill="#3b6a4e" rx="3"/>
<clipPath id="c10382_331"><rect x="1038.20" y="331.60" width="28.40" height="57.40" rx="3"/></clipPath>
<g clip-path="url(#c10382_331)">
<polygon points="1038.2,332.0 1039.2,332.0 1039.2,332.3 1040.2,332.3 1040.2,332.8 1041.2,332.8 1041.2,332.7 1042.3,332.7 1042.3,332.5 1043.3,332.5 1043.3,332.1 1044.3,332.1 1044.3,332.6 1045.3,332.6 1045.3,332.8 1046.3,332.8 1046.3,332.5 1047.3,332.5 1047.3,332.5 1048.3,332.5 1048.3,332.3 1049.4,332.3 1049.4,332.6 1050.4,332.6 1050.4,332.4 1051.4,332.4 1051.4,332.1 1052.4,332.1 1052.4,332.7 1053.4,332.7 1053.4,332.3 1054.4,332.3 1054.4,334.8 1055.4,334.8 1055.4,332.6 1056.5,332.6 1056.5,332.3 1057.5,332.3 1057.5,332.5 1058.5,332.5 1058.5,332.4 1059.5,332.4 1059.5,335.1 1060.5,335.1 1060.5,332.1 1061.5,332.1 1061.5,332.4 1062.5,332.4 1062.5,332.6 1063.6,332.6 1063.6,332.2 1064.6,332.2 1064.6,332.4 1065.6,332.4 1065.6,338.4 1066.6,338.4 1066.6,357.4 1065.6,357.4 1065.6,364.2 1064.6,364.2 1064.6,364.2 1063.6,364.2 1063.6,364.1 1062.5,364.1 1062.5,364.2 1061.5,364.2 1061.5,363.7 1060.5,363.7 1060.5,360.1 1059.5,360.1 1059.5,363.1 1058.5,363.1 1058.5,362.7 1057.5,362.7 1057.5,363.2 1056.5,363.2 1056.5,363.5 1055.4,363.5 1055.4,361.9 1054.4,361.9 1054.4,363.8 1053.4,363.8 1053.4,364.1 1052.4,364.1 1052.4,364.2 1051.4,364.2 1051.4,362.5 1050.4,362.5 1050.4,364.1 1049.4,364.1 1049.4,364.2 1048.3,364.2 1048.3,364.2 1047.3,364.2 1047.3,362.6 1046.3,362.6 1046.3,362.9 1045.3,362.9 1045.3,363.1 1044.3,363.1 1044.3,363.3 1043.3,363.3 1043.3,364.2 1042.3,364.2 1042.3,363.9 1041.2,363.9 1041.2,363.4 1040.2,363.4 1040.2,364.2 1039.2,364.2 1039.2,363.4 1038.2,363.4" fill="#dbf0e3"/>
<rect x="1038.20" y="348.00" width="28.40" height="1.00" fill="rgba(60,80,70,0.45)"/>
</g>
<rect x="1038.20" y="364.20" width="28.40" height="0.90" fill="rgba(10,40,25,0.35)"/>
<rect x="1066.80" y="330.80" width="4.80" height="59.00" fill="#0b0b0d"/>
<rect x="1067.60" y="331.60" width="3.20" height="57.40" fill="#3b6a4e"/>
<rect x="1071.15" y="330.80" width="3.20" height="59.00" fill="#0b0b0d"/>
<rect x="1071.60" y="331.60" width="2.30" height="57.40" fill="#3b6a4e"/>
<rect x="1074.20" y="330.80" width="5.30" height="59.00" fill="#0b0b0d"/>
<rect x="1075.00" y="331.60" width="3.70" height="57.40" fill="#3b6a4e"/>
<rect x="1079.20" y="330.80" width="20.60" height="59.00" fill="#0b0b0d" rx="3.8"/>
<rect x="1080.00" y="331.60" width="19.00" height="57.40" fill="#3b6a4e" rx="3"/>
<clipPath id="c10800_331"><rect x="1080.00" y="331.60" width="19.00" height="57.40" rx="3"/></clipPath>
<g clip-path="url(#c10800_331)">
<polygon points="1080.0,339.3 1081.0,339.3 1081.0,338.1 1082.0,338.1 1082.0,336.6 1083.0,336.6 1083.0,342.1 1084.0,342.1 1084.0,344.7 1085.0,344.7 1085.0,341.8 1086.0,341.8 1086.0,332.7 1087.0,332.7 1087.0,340.7 1088.0,340.7 1088.0,340.6 1089.0,340.6 1089.0,333.2 1090.0,333.2 1090.0,336.0 1091.0,336.0 1091.0,332.3 1092.0,332.3 1092.0,334.1 1093.0,334.1 1093.0,333.8 1094.0,333.8 1094.0,335.5 1095.0,335.5 1095.0,340.9 1096.0,340.9 1096.0,336.9 1097.0,336.9 1097.0,333.1 1098.0,333.1 1098.0,344.5 1099.0,344.5 1099.0,351.9 1098.0,351.9 1098.0,363.9 1097.0,363.9 1097.0,358.6 1096.0,358.6 1096.0,355.7 1095.0,355.7 1095.0,361.3 1094.0,361.3 1094.0,363.1 1093.0,363.1 1093.0,361.8 1092.0,361.8 1092.0,364.2 1091.0,364.2 1091.0,359.4 1090.0,359.4 1090.0,363.6 1089.0,363.6 1089.0,355.8 1088.0,355.8 1088.0,355.7 1087.0,355.7 1087.0,364.0 1086.0,364.0 1086.0,353.9 1085.0,353.9 1085.0,351.3 1084.0,351.3 1084.0,353.8 1083.0,353.8 1083.0,359.3 1082.0,359.3 1082.0,358.7 1081.0,358.7 1081.0,356.4 1080.0,356.4" fill="#dbf0e3"/>
<rect x="1080.00" y="348.00" width="19.00" height="1.00" fill="rgba(60,80,70,0.45)"/>
</g>
<rect x="1080.00" y="364.20" width="19.00" height="0.90" fill="rgba(10,40,25,0.35)"/>
<rect x="1099.20" y="330.80" width="23.60" height="59.00" fill="#0b0b0d" rx="3.8"/>
<rect x="1100.00" y="331.60" width="22.00" height="57.40" fill="#3b6a4e" rx="3"/>
<clipPath id="c11000_331"><rect x="1100.00" y="331.60" width="22.00" height="57.40" rx="3"/></clipPath>
<g clip-path="url(#c11000_331)">
<polygon points="1100.0,343.5 1101.0,343.5 1101.0,343.4 1102.0,343.4 1102.0,334.0 1103.0,334.0 1103.0,336.7 1104.0,336.7 1104.0,336.7 1105.0,336.7 1105.0,343.6 1106.0,343.6 1106.0,335.1 1107.0,335.1 1107.0,340.8 1108.0,340.8 1108.0,344.6 1109.0,344.6 1109.0,341.2 1110.0,341.2 1110.0,340.1 1111.0,340.1 1111.0,332.5 1112.0,332.5 1112.0,333.9 1113.0,333.9 1113.0,344.5 1114.0,344.5 1114.0,339.3 1115.0,339.3 1115.0,340.4 1116.0,340.4 1116.0,338.0 1117.0,338.0 1117.0,333.8 1118.0,333.8 1118.0,334.3 1119.0,334.3 1119.0,344.9 1120.0,344.9 1120.0,335.1 1121.0,335.1 1121.0,344.8 1122.0,344.8 1122.0,351.3 1121.0,351.3 1121.0,360.8 1120.0,360.8 1120.0,351.4 1119.0,351.4 1119.0,362.5 1118.0,362.5 1118.0,362.9 1117.0,362.9 1117.0,358.7 1116.0,358.7 1116.0,355.3 1115.0,355.3 1115.0,357.1 1114.0,357.1 1114.0,351.5 1113.0,351.5 1113.0,362.3 1112.0,362.3 1112.0,364.2 1111.0,364.2 1111.0,355.7 1110.0,355.7 1110.0,354.7 1109.0,354.7 1109.0,351.8 1108.0,351.8 1108.0,355.1 1107.0,355.1 1107.0,361.8 1106.0,361.8 1106.0,352.5 1105.0,352.5 1105.0,359.4 1104.0,359.4 1104.0,358.9 1103.0,358.9 1103.0,362.9 1102.0,362.9 1102.0,352.8 1101.0,352.8 1101.0,352.7 1100.0,352.7" fill="#dbf0e3"/>
<rect x="1100.00" y="348.00" width="22.00" height="1.00" fill="rgba(60,80,70,0.45)"/>
</g>
<rect x="1100.00" y="364.20" width="22.00" height="0.90" fill="rgba(10,40,25,0.35)"/>
<rect x="1122.20" y="330.80" width="4.40" height="59.00" fill="#0b0b0d"/>
<rect x="1123.00" y="331.60" width="2.80" height="57.40" fill="#3b6a4e"/>
<rect x="1126.15" y="330.80" width="2.60" height="59.00" fill="#0b0b0d"/>
<rect x="1126.60" y="331.60" width="1.70" height="57.40" fill="#3b6a4e"/>
<rect x="1129.10" y="331.60" width="0.90" height="57.40" fill="#3b6a4e"/>
<rect x="1130.20" y="330.80" width="11.10" height="59.00" fill="#0b0b0d"/>
<rect x="1131.00" y="331.60" width="9.50" height="57.40" fill="#3b6a4e"/>
<rect x="1140.20" y="330.80" width="6.30" height="59.00" fill="#0b0b0d"/>
<rect x="1141.00" y="331.60" width="4.70" height="57.40" fill="#3b6a4e"/>
<rect x="1146.35" y="330.80" width="3.10" height="59.00" fill="#0b0b0d"/>
<rect x="1146.80" y="331.60" width="2.20" height="57.40" fill="#3b6a4e"/>
<rect x="1154.90" y="331.60" width="0.80" height="57.40" fill="#479468"/>
<rect x="1155.60" y="330.80" width="18.20" height="59.00" fill="#0b0b0d" rx="3.8"/>
<rect x="1156.40" y="331.60" width="16.60" height="57.40" fill="#479468" rx="3"/>
<clipPath id="c11564_331"><rect x="1156.40" y="331.60" width="16.60" height="57.40" rx="3"/></clipPath>
<g clip-path="url(#c11564_331)">
<polygon points="1156.4,333.5 1157.4,333.5 1157.4,333.5 1158.4,333.5 1158.4,337.9 1159.3,337.9 1159.3,333.4 1160.3,333.4 1160.3,336.8 1161.3,336.8 1161.3,337.7 1162.3,337.7 1162.3,335.8 1163.2,335.8 1163.2,334.4 1164.2,334.4 1164.2,337.0 1165.2,337.0 1165.2,338.2 1166.2,338.2 1166.2,335.0 1167.1,335.0 1167.1,338.2 1168.1,338.2 1168.1,334.3 1169.1,334.3 1169.1,338.4 1170.1,338.4 1170.1,333.5 1171.0,333.5 1171.0,338.0 1172.0,338.0 1172.0,334.7 1173.0,334.7 1173.0,362.1 1172.0,362.1 1172.0,359.0 1171.0,359.0 1171.0,362.4 1170.1,362.4 1170.1,357.2 1169.1,357.2 1169.1,363.0 1168.1,363.0 1168.1,357.4 1167.1,357.4 1167.1,361.7 1166.2,361.7 1166.2,358.7 1165.2,358.7 1165.2,358.6 1164.2,358.6 1164.2,361.4 1163.2,361.4 1163.2,359.7 1162.3,359.7 1162.3,358.5 1161.3,358.5 1161.3,359.1 1160.3,359.1 1160.3,362.2 1159.3,362.2 1159.3,357.7 1158.4,357.7 1158.4,361.9 1157.4,361.9 1157.4,363.5 1156.4,363.5" fill="#dbf0e3"/>
<rect x="1156.40" y="348.00" width="16.60" height="1.00" fill="rgba(60,80,70,0.45)"/>
</g>
<rect x="1156.40" y="364.20" width="16.60" height="0.90" fill="rgba(10,40,25,0.35)"/>
<rect x="1177.20" y="330.80" width="109.60" height="59.00" fill="#0b0b0d"/>
<rect x="1178.00" y="331.60" width="108.00" height="57.40" fill="#3b6a4e"/>
<rect x="1188.10" y="331.60" width="3.70" height="57.40" fill="#43895f"/>
<rect x="1196.90" y="331.60" width="1.90" height="57.40" fill="#43895f"/>
<rect x="1207.90" y="331.60" width="2.80" height="57.40" fill="#43895f"/>
<rect x="1213.80" y="331.60" width="2.00" height="57.40" fill="#43895f"/>
<rect x="1235.00" y="331.60" width="2.50" height="57.40" fill="#43895f"/>
<rect x="1201.95" y="331.60" width="0.90" height="57.40" fill="#0b0b0d"/>
<rect x="1203.25" y="331.60" width="0.90" height="57.40" fill="#0b0b0d"/>
<rect x="1210.95" y="331.60" width="0.90" height="57.40" fill="#0b0b0d"/>
<rect x="1233.85" y="331.60" width="0.90" height="57.40" fill="#0b0b0d"/>
<rect x="1237.85" y="331.60" width="0.90" height="57.40" fill="#0b0b0d"/>
<rect x="1245.25" y="331.60" width="0.90" height="57.40" fill="#0b0b0d"/>
<rect x="1262.25" y="331.60" width="0.90" height="57.40" fill="#0b0b0d"/>
<rect x="1265.05" y="331.60" width="0.90" height="57.40" fill="#0b0b0d"/>
<rect x="1273.25" y="331.60" width="0.90" height="57.40" fill="#0b0b0d"/>
<rect x="1280.35" y="331.60" width="0.90" height="57.40" fill="#0b0b0d"/>
<rect x="1287.40" y="330.80" width="41.40" height="59.00" fill="#0b0b0d" rx="3.8"/>
<rect x="1288.20" y="331.60" width="39.80" height="57.40" fill="#3b6a4e" rx="3"/>
<clipPath id="c12882_331"><rect x="1288.20" y="331.60" width="39.80" height="57.40" rx="3"/></clipPath>
<g clip-path="url(#c12882_331)">
<polygon points="1288.2,336.8 1289.2,336.8 1289.2,332.3 1290.2,332.3 1290.2,332.6 1291.2,332.6 1291.2,332.8 1292.2,332.8 1292.2,332.2 1293.2,332.2 1293.2,332.4 1294.2,332.4 1294.2,332.4 1295.2,332.4 1295.2,332.3 1296.2,332.3 1296.2,332.2 1297.2,332.2 1297.2,336.8 1298.2,336.8 1298.2,332.2 1299.1,332.2 1299.1,332.6 1300.1,332.6 1300.1,334.3 1301.1,334.3 1301.1,335.3 1302.1,335.3 1302.1,335.4 1303.1,335.4 1303.1,332.4 1304.1,332.4 1304.1,332.3 1305.1,332.3 1305.1,332.5 1306.1,332.5 1306.1,335.2 1307.1,335.2 1307.1,332.6 1308.1,332.6 1308.1,332.4 1309.1,332.4 1309.1,332.5 1310.1,332.5 1310.1,332.1 1311.1,332.1 1311.1,332.3 1312.1,332.3 1312.1,337.1 1313.1,337.1 1313.1,332.0 1314.1,332.0 1314.1,332.4 1315.1,332.4 1315.1,332.2 1316.1,332.2 1316.1,336.3 1317.1,336.3 1317.1,332.3 1318.0,332.3 1318.0,332.2 1319.0,332.2 1319.0,332.3 1320.0,332.3 1320.0,336.3 1321.0,336.3 1321.0,332.0 1322.0,332.0 1322.0,332.3 1323.0,332.3 1323.0,332.2 1324.0,332.2 1324.0,332.0 1325.0,332.0 1325.0,332.8 1326.0,332.8 1326.0,332.5 1327.0,332.5 1327.0,332.5 1328.0,332.5 1328.0,363.1 1327.0,363.1 1327.0,363.2 1326.0,363.2 1326.0,364.0 1325.0,364.0 1325.0,362.9 1324.0,362.9 1324.0,363.2 1323.0,363.2 1323.0,363.8 1322.0,363.8 1322.0,363.5 1321.0,363.5 1321.0,359.7 1320.0,359.7 1320.0,363.3 1319.0,363.3 1319.0,364.2 1318.0,364.2 1318.0,363.5 1317.1,363.5 1317.1,360.5 1316.1,360.5 1316.1,363.1 1315.1,363.1 1315.1,364.0 1314.1,364.0 1314.1,363.7 1313.1,363.7 1313.1,359.1 1312.1,359.1 1312.1,364.2 1311.1,364.2 1311.1,364.2 1310.1,364.2 1310.1,364.1 1309.1,364.1 1309.1,363.4 1308.1,363.4 1308.1,364.2 1307.1,364.2 1307.1,360.4 1306.1,360.4 1306.1,363.9 1305.1,363.9 1305.1,363.8 1304.1,363.8 1304.1,364.1 1303.1,364.1 1303.1,361.4 1302.1,361.4 1302.1,361.5 1301.1,361.5 1301.1,361.1 1300.1,361.1 1300.1,362.9 1299.1,362.9 1299.1,363.7 1298.2,363.7 1298.2,359.9 1297.2,359.9 1297.2,363.3 1296.2,363.3 1296.2,363.9 1295.2,363.9 1295.2,364.2 1294.2,364.2 1294.2,364.2 1293.2,364.2 1293.2,363.3 1292.2,363.3 1292.2,362.8 1291.2,362.8 1291.2,363.2 1290.2,363.2 1290.2,364.2 1289.2,364.2 1289.2,359.3 1288.2,359.3" fill="#dbf0e3"/>
<rect x="1288.20" y="348.00" width="39.80" height="1.00" fill="rgba(60,80,70,0.45)"/>
</g>
<rect x="1288.20" y="364.20" width="39.80" height="0.90" fill="rgba(10,40,25,0.35)"/>
<rect x="1328.40" y="330.80" width="28.20" height="59.00" fill="#0b0b0d" rx="3.8"/>
<rect x="1329.20" y="331.60" width="26.60" height="57.40" fill="#3b6a4e" rx="3"/>
<clipPath id="c13292_331"><rect x="1329.20" y="331.60" width="26.60" height="57.40" rx="3"/></clipPath>
<g clip-path="url(#c13292_331)">
<polygon points="1329.2,332.4 1330.2,332.4 1330.2,332.3 1331.2,332.3 1331.2,332.5 1332.2,332.5 1332.2,334.4 1333.1,334.4 1333.1,332.1 1334.1,332.1 1334.1,334.8 1335.1,334.8 1335.1,332.1 1336.1,332.1 1336.1,332.8 1337.1,332.8 1337.1,332.0 1338.1,332.0 1338.1,332.6 1339.1,332.6 1339.1,332.7 1340.0,332.7 1340.0,332.2 1341.0,332.2 1341.0,332.7 1342.0,332.7 1342.0,334.8 1343.0,334.8 1343.0,332.1 1344.0,332.1 1344.0,332.2 1345.0,332.2 1345.0,332.1 1345.9,332.1 1345.9,334.5 1346.9,334.5 1346.9,332.2 1347.9,332.2 1347.9,332.2 1348.9,332.2 1348.9,332.1 1349.9,332.1 1349.9,332.6 1350.9,332.6 1350.9,332.7 1351.9,332.7 1351.9,332.8 1352.8,332.8 1352.8,332.7 1353.8,332.7 1353.8,332.4 1354.8,332.4 1354.8,332.1 1355.8,332.1 1355.8,363.7 1354.8,363.7 1354.8,364.2 1353.8,364.2 1353.8,363.1 1352.8,363.1 1352.8,363.7 1351.9,363.7 1351.9,364.0 1350.9,364.0 1350.9,362.5 1349.9,362.5 1349.9,364.2 1348.9,364.2 1348.9,364.0 1347.9,364.0 1347.9,364.0 1346.9,364.0 1346.9,362.7 1345.9,362.7 1345.9,363.7 1345.0,363.7 1345.0,364.2 1344.0,364.2 1344.0,364.2 1343.0,364.2 1343.0,361.6 1342.0,361.6 1342.0,362.4 1341.0,362.4 1341.0,364.2 1340.0,364.2 1340.0,363.8 1339.1,363.8 1339.1,362.5 1338.1,362.5 1338.1,364.2 1337.1,364.2 1337.1,363.2 1336.1,363.2 1336.1,363.7 1335.1,363.7 1335.1,362.1 1334.1,362.1 1334.1,364.2 1333.1,364.2 1333.1,361.9 1332.2,361.9 1332.2,363.6 1331.2,363.6 1331.2,364.2 1330.2,364.2 1330.2,362.5 1329.2,362.5" fill="#dbf0e3"/>
<rect x="1329.20" y="348.00" width="26.60" height="1.00" fill="rgba(60,80,70,0.45)"/>
</g>
<rect x="1329.20" y="364.20" width="26.60" height="0.90" fill="rgba(10,40,25,0.35)"/>
<rect x="373.40" y="332.00" width="1.10" height="57.00" fill="#0b0b0d"/>
<rect x="373.50" y="334.00" width="0.90" height="2.40" fill="#7c8078"/>
<rect x="373.50" y="339.00" width="0.90" height="2.40" fill="#7c8078"/>
<rect x="373.50" y="344.00" width="0.90" height="2.40" fill="#7c8078"/>
<rect x="373.50" y="349.00" width="0.90" height="2.40" fill="#7c8078"/>
<rect x="373.50" y="354.00" width="0.90" height="2.40" fill="#7c8078"/>
<rect x="373.50" y="359.00" width="0.90" height="2.40" fill="#7c8078"/>
<rect x="373.50" y="364.00" width="0.90" height="2.40" fill="#7c8078"/>
<rect x="373.50" y="369.00" width="0.90" height="2.40" fill="#7c8078"/>
<rect x="373.50" y="374.00" width="0.90" height="2.40" fill="#7c8078"/>
<rect x="373.50" y="379.00" width="0.90" height="2.40" fill="#7c8078"/>
<rect x="373.50" y="384.00" width="0.90" height="2.40" fill="#7c8078"/>
<rect x="367.80" y="392.60" width="0.80" height="57.40" fill="#479468"/>
<rect x="372.70" y="391.80" width="29.60" height="59.00" fill="#0b0b0d" rx="3.8"/>
<rect x="373.50" y="392.60" width="28.00" height="57.40" fill="#479468" rx="3"/>
<clipPath id="c3735_392"><rect x="373.50" y="392.60" width="28.00" height="57.40" rx="3"/></clipPath>
<g clip-path="url(#c3735_392)">
<polygon points="373.5,394.4 374.5,394.4 374.5,398.4 375.5,398.4 375.5,394.6 376.5,394.6 376.5,393.9 377.5,393.9 377.5,393.9 378.5,393.9 378.5,394.4 379.5,394.4 379.5,394.4 380.5,394.4 380.5,396.8 381.5,396.8 381.5,397.9 382.5,397.9 382.5,394.8 383.5,394.8 383.5,394.2 384.5,394.2 384.5,399.0 385.5,399.0 385.5,396.0 386.5,396.0 386.5,395.2 387.5,395.2 387.5,395.2 388.5,395.2 388.5,393.8 389.5,393.8 389.5,394.2 390.5,394.2 390.5,395.9 391.5,395.9 391.5,394.3 392.5,394.3 392.5,394.1 393.5,394.1 393.5,394.2 394.5,394.2 394.5,394.2 395.5,394.2 395.5,394.0 396.5,394.0 396.5,395.0 397.5,395.0 397.5,394.0 398.5,394.0 398.5,396.8 399.5,396.8 399.5,393.9 400.5,393.9 400.5,397.1 401.5,397.1 401.5,420.1 400.5,420.1 400.5,423.1 399.5,423.1 399.5,420.7 398.5,420.7 398.5,423.5 397.5,423.5 397.5,423.6 396.5,423.6 396.5,423.2 395.5,423.2 395.5,423.8 394.5,423.8 394.5,424.0 393.5,424.0 393.5,425.2 392.5,425.2 392.5,425.0 391.5,425.0 391.5,422.5 390.5,422.5 390.5,423.7 389.5,423.7 389.5,423.2 388.5,423.2 388.5,422.8 387.5,422.8 387.5,424.0 386.5,424.0 386.5,422.4 385.5,422.4 385.5,419.7 384.5,419.7 384.5,423.1 383.5,423.1 383.5,422.4 382.5,422.4 382.5,420.4 381.5,420.4 381.5,420.5 380.5,420.5 380.5,424.8 379.5,424.8 379.5,424.1 378.5,424.1 378.5,424.1 377.5,424.1 377.5,423.8 376.5,423.8 376.5,423.4 375.5,423.4 375.5,419.5 374.5,419.5 374.5,423.2 373.5,423.2" fill="#dbf0e3"/>
<rect x="373.50" y="409.00" width="28.00" height="1.00" fill="rgba(60,80,70,0.45)"/>
</g>
<rect x="373.50" y="425.20" width="28.00" height="0.90" fill="rgba(10,40,25,0.35)"/>
<rect x="402.50" y="391.80" width="12.80" height="59.00" fill="#0b0b0d" rx="3.8"/>
<rect x="403.30" y="392.60" width="11.20" height="57.40" fill="#479468" rx="3"/>
<clipPath id="c4033_392"><rect x="403.30" y="392.60" width="11.20" height="57.40" rx="3"/></clipPath>
<g clip-path="url(#c4033_392)">
<polygon points="403.3,395.1 404.3,395.1 404.3,398.8 405.3,398.8 405.3,398.7 406.4,398.7 406.4,394.1 407.4,394.1 407.4,394.1 408.4,394.1 408.4,395.2 409.4,395.2 409.4,396.6 410.4,396.6 410.4,396.5 411.4,396.5 411.4,394.2 412.5,394.2 412.5,397.5 413.5,397.5 413.5,398.2 414.5,398.2 414.5,420.6 413.5,420.6 413.5,420.1 412.5,420.1 412.5,424.5 411.4,424.5 411.4,421.3 410.4,421.3 410.4,420.8 409.4,420.8 409.4,423.7 408.4,423.7 408.4,424.5 407.4,424.5 407.4,422.9 406.4,422.9 406.4,418.7 405.3,418.7 405.3,419.8 404.3,419.8 404.3,424.2 403.3,424.2" fill="#dbf0e3"/>
<rect x="403.30" y="409.00" width="11.20" height="1.00" fill="rgba(60,80,70,0.45)"/>
</g>
<rect x="403.30" y="425.20" width="11.20" height="0.90" fill="rgba(10,40,25,0.35)"/>
<rect x="415.70" y="392.60" width="0.80" height="57.40" fill="#479468"/>
<rect x="417.50" y="391.80" width="126.90" height="59.00" fill="#0b0b0d" rx="3.8"/>
<rect x="418.30" y="392.60" width="125.30" height="57.40" fill="#3b6a4e" rx="3"/>
<clipPath id="c4183_392"><rect x="418.30" y="392.60" width="125.30" height="57.40" rx="3"/></clipPath>
<g clip-path="url(#c4183_392)">
<polygon points="418.3,393.0 419.3,393.0 419.3,393.0 420.3,393.0 420.3,393.0 421.3,393.0 421.3,393.0 422.3,393.0 422.3,393.0 423.3,393.0 423.3,393.0 424.3,393.0 424.3,393.0 425.3,393.0 425.3,393.0 426.3,393.0 426.3,393.0 427.3,393.0 427.3,393.0 428.3,393.0 428.3,393.0 429.3,393.0 429.3,393.0 430.3,393.0 430.3,393.0 431.3,393.0 431.3,393.0 432.3,393.0 432.3,393.0 433.3,393.0 433.3,393.0 434.3,393.0 434.3,393.0 435.3,393.0 435.3,393.0 436.3,393.0 436.3,393.0 437.3,393.0 437.3,393.0 438.3,393.0 438.3,393.0 439.4,393.0 439.4,393.0 440.4,393.0 440.4,393.0 441.4,393.0 441.4,393.0 442.4,393.0 442.4,393.0 443.4,393.0 443.4,393.0 444.4,393.0 444.4,393.0 445.4,393.0 445.4,393.0 446.4,393.0 446.4,393.0 447.4,393.0 447.4,393.0 448.4,393.0 448.4,393.0 449.4,393.0 449.4,393.0 450.4,393.0 450.4,393.0 451.4,393.0 451.4,393.0 452.4,393.0 452.4,393.0 453.4,393.0 453.4,393.0 454.4,393.0 454.4,394.6 455.4,394.6 455.4,393.0 456.4,393.0 456.4,393.0 457.4,393.0 457.4,393.0 458.4,393.0 458.4,393.0 459.4,393.0 459.4,393.0 460.4,393.0 460.4,393.0 461.4,393.0 461.4,393.0 462.4,393.0 462.4,393.0 463.4,393.0 463.4,393.0 464.4,393.0 464.4,393.0 465.4,393.0 465.4,393.0 466.4,393.0 466.4,393.0 467.4,393.0 467.4,393.0 468.4,393.0 468.4,393.0 469.4,393.0 469.4,393.0 470.4,393.0 470.4,393.0 471.4,393.0 471.4,393.0 472.4,393.0 472.4,393.0 473.4,393.0 473.4,393.0 474.4,393.0 474.4,393.0 475.4,393.0 475.4,393.0 476.4,393.0 476.4,393.0 477.4,393.0 477.4,393.0 478.4,393.0 478.4,393.0 479.4,393.0 479.4,393.0 480.4,393.0 480.4,393.0 481.5,393.0 481.5,393.0 482.5,393.0 482.5,393.0 483.5,393.0 483.5,393.0 484.5,393.0 484.5,393.0 485.5,393.0 485.5,393.0 486.5,393.0 486.5,393.0 487.5,393.0 487.5,393.0 488.5,393.0 488.5,393.0 489.5,393.0 489.5,393.0 490.5,393.0 490.5,393.0 491.5,393.0 491.5,393.0 492.5,393.0 492.5,393.0 493.5,393.0 493.5,393.0 494.5,393.0 494.5,393.0 495.5,393.0 495.5,393.0 496.5,393.0 496.5,393.0 497.5,393.0 497.5,393.0 498.5,393.0 498.5,393.0 499.5,393.0 499.5,393.0 500.5,393.0 500.5,393.0 501.5,393.0 501.5,393.0 502.5,393.0 502.5,393.0 503.5,393.0 503.5,393.0 504.5,393.0 504.5,393.0 505.5,393.0 505.5,393.0 506.5,393.0 506.5,393.0 507.5,393.0 507.5,393.0 508.5,393.0 508.5,393.0 509.5,393.0 509.5,393.0 510.5,393.0 510.5,393.0 511.5,393.0 511.5,393.0 512.5,393.0 512.5,393.0 513.5,393.0 513.5,393.0 514.5,393.0 514.5,393.0 515.5,393.0 515.5,394.6 516.5,394.6 516.5,394.6 517.5,394.6 517.5,393.0 518.5,393.0 518.5,393.0 519.5,393.0 519.5,393.0 520.5,393.0 520.5,393.0 521.5,393.0 521.5,393.0 522.5,393.0 522.5,393.0 523.6,393.0 523.6,393.0 524.6,393.0 524.6,393.0 525.6,393.0 525.6,393.0 526.6,393.0 526.6,393.0 527.6,393.0 527.6,393.0 528.6,393.0 528.6,393.0 529.6,393.0 529.6,394.6 530.6,394.6 530.6,393.0 531.6,393.0 531.6,393.0 532.6,393.0 532.6,393.0 533.6,393.0 533.6,393.0 534.6,393.0 534.6,393.0 535.6,393.0 535.6,393.0 536.6,393.0 536.6,393.0 537.6,393.0 537.6,393.0 538.6,393.0 538.6,393.0 539.6,393.0 539.6,393.0 540.6,393.0 540.6,393.0 541.6,393.0 541.6,393.0 542.6,393.0 542.6,393.0 543.6,393.0 543.6,425.2 542.6,425.2 542.6,425.2 541.6,425.2 541.6,425.2 540.6,425.2 540.6,425.2 539.6,425.2 539.6,425.2 538.6,425.2 538.6,425.2 537.6,425.2 537.6,425.2 536.6,425.2 536.6,425.2 535.6,425.2 535.6,425.2 534.6,425.2 534.6,425.2 533.6,425.2 533.6,425.2 532.6,425.2 532.6,425.2 531.6,425.2 531.6,425.2 530.6,425.2 530.6,423.6 529.6,423.6 529.6,425.2 528.6,425.2 528.6,425.2 527.6,425.2 527.6,425.2 526.6,425.2 526.6,425.2 525.6,425.2 525.6,425.2 524.6,425.2 524.6,425.2 523.6,425.2 523.6,425.2 522.5,425.2 522.5,425.2 521.5,425.2 521.5,425.2 520.5,425.2 520.5,425.2 519.5,425.2 519.5,425.2 518.5,425.2 518.5,425.2 517.5,425.2 517.5,423.6 516.5,423.6 516.5,423.6 515.5,423.6 515.5,425.2 514.5,425.2 514.5,425.2 513.5,425.2 513.5,425.2 512.5,425.2 512.5,425.2 511.5,425.2 511.5,425.2 510.5,425.2 510.5,425.2 509.5,425.2 509.5,425.2 508.5,425.2 508.5,425.2 507.5,425.2 507.5,425.2 506.5,425.2 506.5,425.2 505.5,425.2 505.5,425.2 504.5,425.2 504.5,425.2 503.5,425.2 503.5,425.2 502.5,425.2 502.5,425.2 501.5,425.2 501.5,425.2 500.5,425.2 500.5,425.2 499.5,425.2 499.5,425.2 498.5,425.2 498.5,425.2 497.5,425.2 497.5,425.2 496.5,425.2 496.5,425.2 495.5,425.2 495.5,425.2 494.5,425.2 494.5,425.2 493.5,425.2 493.5,425.2 492.5,425.2 492.5,425.2 491.5,425.2 491.5,425.2 490.5,425.2 490.5,425.2 489.5,425.2 489.5,425.2 488.5,425.2 488.5,425.2 487.5,425.2 487.5,425.2 486.5,425.2 486.5,425.2 485.5,425.2 485.5,425.2 484.5,425.2 484.5,425.2 483.5,425.2 483.5,425.2 482.5,425.2 482.5,425.2 481.5,425.2 481.5,425.2 480.4,425.2 480.4,425.2 479.4,425.2 479.4,425.2 478.4,425.2 478.4,425.2 477.4,425.2 477.4,425.2 476.4,425.2 476.4,425.2 475.4,425.2 475.4,425.2 474.4,425.2 474.4,425.2 473.4,425.2 473.4,425.2 472.4,425.2 472.4,425.2 471.4,425.2 471.4,425.2 470.4,425.2 470.4,425.2 469.4,425.2 469.4,425.2 468.4,425.2 468.4,425.2 467.4,425.2 467.4,425.2 466.4,425.2 466.4,425.2 465.4,425.2 465.4,425.2 464.4,425.2 464.4,425.2 463.4,425.2 463.4,425.2 462.4,425.2 462.4,425.2 461.4,425.2 461.4,425.2 460.4,425.2 460.4,425.2 459.4,425.2 459.4,425.2 458.4,425.2 458.4,425.2 457.4,425.2 457.4,425.2 456.4,425.2 456.4,425.2 455.4,425.2 455.4,423.6 454.4,423.6 454.4,425.2 453.4,425.2 453.4,425.2 452.4,425.2 452.4,425.2 451.4,425.2 451.4,425.2 450.4,425.2 450.4,425.2 449.4,425.2 449.4,425.2 448.4,425.2 448.4,425.2 447.4,425.2 447.4,425.2 446.4,425.2 446.4,425.2 445.4,425.2 445.4,425.2 444.4,425.2 444.4,425.2 443.4,425.2 443.4,425.2 442.4,425.2 442.4,425.2 441.4,425.2 441.4,425.2 440.4,425.2 440.4,425.2 439.4,425.2 439.4,425.2 438.3,425.2 438.3,425.2 437.3,425.2 437.3,425.2 436.3,425.2 436.3,425.2 435.3,425.2 435.3,425.2 434.3,425.2 434.3,425.2 433.3,425.2 433.3,425.2 432.3,425.2 432.3,425.2 431.3,425.2 431.3,425.2 430.3,425.2 430.3,425.2 429.3,425.2 429.3,425.2 428.3,425.2 428.3,425.2 427.3,425.2 427.3,425.2 426.3,425.2 426.3,425.2 425.3,425.2 425.3,425.2 424.3,425.2 424.3,425.2 423.3,425.2 423.3,425.2 422.3,425.2 422.3,425.2 421.3,425.2 421.3,425.2 420.3,425.2 420.3,425.2 419.3,425.2 419.3,425.2 418.3,425.2" fill="#dbf0e3"/>
<rect x="418.30" y="409.00" width="125.30" height="1.00" fill="rgba(60,80,70,0.45)"/>
</g>
<rect x="418.30" y="425.20" width="125.30" height="0.90" fill="rgba(10,40,25,0.35)"/>
<rect x="545.40" y="391.80" width="21.40" height="59.00" fill="#0b0b0d" rx="3.8"/>
<rect x="546.20" y="392.60" width="19.80" height="57.40" fill="#479468" rx="3"/>
<clipPath id="c5462_392"><rect x="546.20" y="392.60" width="19.80" height="57.40" rx="3"/></clipPath>
<g clip-path="url(#c5462_392)">
<polygon points="546.2,404.3 547.2,404.3 547.2,403.8 548.2,403.8 548.2,403.6 549.2,403.6 549.2,403.7 550.2,403.7 550.2,403.0 551.2,403.0 551.2,403.5 552.1,403.5 552.1,403.3 553.1,403.3 553.1,402.5 554.1,402.5 554.1,402.4 555.1,402.4 555.1,402.3 556.1,402.3 556.1,399.9 557.1,399.9 557.1,396.9 558.1,396.9 558.1,393.0 559.1,393.0 559.1,393.0 560.1,393.0 560.1,393.0 561.0,393.0 561.0,393.0 562.0,393.0 562.0,393.0 563.0,393.0 563.0,393.0 564.0,393.0 564.0,393.0 565.0,393.0 565.0,393.0 566.0,393.0 566.0,425.2 565.0,425.2 565.0,425.1 564.0,425.1 564.0,425.2 563.0,425.2 563.0,424.8 562.0,424.8 562.0,425.1 561.0,425.1 561.0,425.2 560.1,425.2 560.1,425.2 559.1,425.2 559.1,425.2 558.1,425.2 558.1,420.5 557.1,420.5 557.1,418.2 556.1,418.2 556.1,415.5 555.1,415.5 555.1,416.2 554.1,416.2 554.1,416.1 553.1,416.1 553.1,415.3 552.1,415.3 552.1,414.4 551.2,414.4 551.2,415.6 550.2,415.6 550.2,414.1 549.2,414.1 549.2,414.3 548.2,414.3 548.2,414.6 547.2,414.6 547.2,413.5 546.2,413.5" fill="#dbf0e3"/>
<rect x="546.20" y="409.00" width="19.80" height="1.00" fill="rgba(60,80,70,0.45)"/>
</g>
<rect x="546.20" y="425.20" width="19.80" height="0.90" fill="rgba(10,40,25,0.35)"/>
<rect x="567.20" y="392.60" width="0.70" height="57.40" fill="#479468"/>
<rect x="568.20" y="391.80" width="14.60" height="59.00" fill="#0b0b0d" rx="3.8"/>
<rect x="569.00" y="392.60" width="13.00" height="57.40" fill="#3b6a4e" rx="3"/>
<clipPath id="c5690_392"><rect x="569.00" y="392.60" width="13.00" height="57.40" rx="3"/></clipPath>
<g clip-path="url(#c5690_392)">
<polygon points="569.0,400.6 570.0,400.6 570.0,399.6 571.0,399.6 571.0,400.7 572.0,400.7 572.0,400.5 573.0,400.5 573.0,400.7 574.0,400.7 574.0,399.3 575.0,399.3 575.0,400.7 576.0,400.7 576.0,400.4 577.0,400.4 577.0,400.8 578.0,400.8 578.0,400.9 579.0,400.9 579.0,399.7 580.0,399.7 580.0,400.1 581.0,400.1 581.0,400.5 582.0,400.5 582.0,417.0 581.0,417.0 581.0,418.8 580.0,418.8 580.0,418.2 579.0,418.2 579.0,417.6 578.0,417.6 578.0,416.8 577.0,416.8 577.0,418.4 576.0,418.4 576.0,417.2 575.0,417.2 575.0,418.3 574.0,418.3 574.0,418.0 573.0,418.0 573.0,418.4 572.0,418.4 572.0,418.1 571.0,418.1 571.0,418.4 570.0,418.4 570.0,417.2 569.0,417.2" fill="#dbf0e3"/>
<rect x="569.00" y="409.00" width="13.00" height="1.00" fill="rgba(60,80,70,0.45)"/>
</g>
<rect x="569.00" y="425.20" width="13.00" height="0.90" fill="rgba(10,40,25,0.35)"/>
<rect x="583.20" y="391.80" width="34.10" height="59.00" fill="#0b0b0d" rx="3.8"/>
<rect x="584.00" y="392.60" width="32.50" height="57.40" fill="#479468" rx="3"/>
<clipPath id="c5840_392"><rect x="584.00" y="392.60" width="32.50" height="57.40" rx="3"/></clipPath>
<g clip-path="url(#c5840_392)">
<polygon points="584.0,397.9 585.0,397.9 585.0,395.3 586.0,395.3 586.0,397.3 587.0,397.3 587.0,394.6 588.1,394.6 588.1,398.3 589.1,398.3 589.1,395.0 590.1,395.0 590.1,394.0 591.1,394.0 591.1,398.4 592.1,398.4 592.1,395.1 593.1,395.1 593.1,394.5 594.2,394.5 594.2,394.9 595.2,394.9 595.2,394.1 596.2,394.1 596.2,397.1 597.2,397.1 597.2,395.1 598.2,395.1 598.2,397.7 599.2,397.7 599.2,398.9 600.2,398.9 600.2,397.9 601.3,397.9 601.3,396.1 602.3,396.1 602.3,395.2 603.3,395.2 603.3,397.4 604.3,397.4 604.3,398.2 605.3,398.2 605.3,393.9 606.3,393.9 606.3,395.0 607.4,395.0 607.4,394.3 608.4,394.3 608.4,394.4 609.4,394.4 609.4,394.4 610.4,394.4 610.4,394.1 611.4,394.1 611.4,396.1 612.4,396.1 612.4,394.1 613.5,394.1 613.5,394.0 614.5,394.0 614.5,393.8 615.5,393.8 615.5,397.4 616.5,397.4 616.5,421.5 615.5,421.5 615.5,424.6 614.5,424.6 614.5,423.3 613.5,423.3 613.5,423.9 612.4,423.9 612.4,421.4 611.4,421.4 611.4,423.6 610.4,423.6 610.4,423.8 609.4,423.8 609.4,423.8 608.4,423.8 608.4,423.0 607.4,423.0 607.4,422.2 606.3,422.2 606.3,424.8 605.3,424.8 605.3,420.7 604.3,420.7 604.3,420.0 603.3,420.0 603.3,423.4 602.3,423.4 602.3,422.2 601.3,422.2 601.3,420.4 600.2,420.4 600.2,419.4 599.2,419.4 599.2,419.6 598.2,419.6 598.2,422.4 597.2,422.4 597.2,421.5 596.2,421.5 596.2,423.1 595.2,423.1 595.2,422.2 594.2,422.2 594.2,424.5 593.1,424.5 593.1,422.5 592.1,422.5 592.1,419.1 591.1,419.1 591.1,423.4 590.1,423.4 590.1,422.5 589.1,422.5 589.1,420.7 588.1,420.7 588.1,422.5 587.0,422.5 587.0,421.0 586.0,421.0 586.0,423.0 585.0,423.0 585.0,420.3 584.0,420.3" fill="#dbf0e3"/>
<rect x="584.00" y="409.00" width="32.50" height="1.00" fill="rgba(60,80,70,0.45)"/>
</g>
<rect x="584.00" y="425.20" width="32.50" height="0.90" fill="rgba(10,40,25,0.35)"/>
<rect x="617.30" y="392.60" width="0.60" height="57.40" fill="#479468"/>
<rect x="617.80" y="391.80" width="48.90" height="59.00" fill="#0b0b0d" rx="3.8"/>
<rect x="618.60" y="392.60" width="47.30" height="57.40" fill="#3b6a4e" rx="3"/>
<clipPath id="c6186_392"><rect x="618.60" y="392.60" width="47.30" height="57.40" rx="3"/></clipPath>
<g clip-path="url(#c6186_392)">
<polygon points="618.6,406.7 619.6,406.7 619.6,404.2 620.6,404.2 620.6,401.8 621.6,401.8 621.6,399.3 622.6,399.3 622.6,396.0 623.6,396.0 623.6,397.0 624.6,397.0 624.6,396.8 625.6,396.8 625.6,396.0 626.7,396.0 626.7,397.2 627.7,397.2 627.7,397.2 628.7,397.2 628.7,395.9 629.7,395.9 629.7,396.1 630.7,396.1 630.7,396.2 631.7,396.2 631.7,396.8 632.7,396.8 632.7,396.0 633.7,396.0 633.7,397.0 634.7,397.0 634.7,397.1 635.7,397.1 635.7,397.7 636.7,397.7 636.7,396.9 637.7,396.9 637.7,397.6 638.7,397.6 638.7,396.3 639.7,396.3 639.7,396.6 640.7,396.6 640.7,396.1 641.7,396.1 641.7,397.8 642.8,397.8 642.8,397.3 643.8,397.3 643.8,397.3 644.8,397.3 644.8,396.0 645.8,396.0 645.8,397.3 646.8,397.3 646.8,397.0 647.8,397.0 647.8,397.3 648.8,397.3 648.8,396.6 649.8,396.6 649.8,396.7 650.8,396.7 650.8,396.8 651.8,396.8 651.8,396.9 652.8,396.9 652.8,397.5 653.8,397.5 653.8,397.6 654.8,397.6 654.8,397.0 655.8,397.0 655.8,397.4 656.8,397.4 656.8,396.8 657.8,396.8 657.8,396.7 658.9,396.7 658.9,396.6 659.9,396.6 659.9,396.5 660.9,396.5 660.9,396.8 661.9,396.8 661.9,396.9 662.9,396.9 662.9,397.4 663.9,397.4 663.9,396.8 664.9,396.8 664.9,396.7 665.9,396.7 665.9,422.1 664.9,422.1 664.9,421.2 663.9,421.2 663.9,421.0 662.9,421.0 662.9,422.2 661.9,422.2 661.9,421.4 660.9,421.4 660.9,421.9 659.9,421.9 659.9,422.2 658.9,422.2 658.9,420.6 657.8,420.6 657.8,422.2 656.8,422.2 656.8,420.1 655.8,420.1 655.8,422.0 654.8,422.0 654.8,421.0 653.8,421.0 653.8,421.2 652.8,421.2 652.8,421.2 651.8,421.2 651.8,421.9 650.8,421.9 650.8,422.0 649.8,422.0 649.8,422.1 648.8,422.1 648.8,421.0 647.8,421.0 647.8,421.8 646.8,421.8 646.8,421.5 645.8,421.5 645.8,422.4 644.8,422.4 644.8,421.2 643.8,421.2 643.8,420.6 642.8,420.6 642.8,420.1 641.7,420.1 641.7,421.4 640.7,421.4 640.7,422.1 639.7,422.1 639.7,422.8 638.7,422.8 638.7,420.1 637.7,420.1 637.7,420.6 636.7,420.6 636.7,420.9 635.7,420.9 635.7,421.0 634.7,421.0 634.7,421.0 633.7,421.0 633.7,421.3 632.7,421.3 632.7,421.3 631.7,421.3 631.7,422.8 630.7,422.8 630.7,421.2 629.7,421.2 629.7,421.5 628.7,421.5 628.7,421.5 627.7,421.5 627.7,420.6 626.7,420.6 626.7,423.2 625.6,423.2 625.6,421.0 624.6,421.0 624.6,421.2 623.6,421.2 623.6,422.3 622.6,422.3 622.6,418.5 621.6,418.5 621.6,416.8 620.6,416.8 620.6,413.9 619.6,413.9 619.6,411.3 618.6,411.3" fill="#dbf0e3"/>
<rect x="618.60" y="409.00" width="47.30" height="1.00" fill="rgba(60,80,70,0.45)"/>
</g>
<rect x="618.60" y="425.20" width="47.30" height="0.90" fill="rgba(10,40,25,0.35)"/>
<rect x="718.20" y="391.80" width="11.60" height="59.00" fill="#0b0b0d" rx="3.8"/>
<rect x="719.00" y="392.60" width="10.00" height="57.40" fill="#479468" rx="3"/>
<clipPath id="c7190_392"><rect x="719.00" y="392.60" width="10.00" height="57.40" rx="3"/></clipPath>
<g clip-path="url(#c7190_392)">
<polygon points="719.0,393.0 720.0,393.0 720.0,393.0 721.0,393.0 721.0,393.0 722.0,393.0 722.0,393.0 723.0,393.0 723.0,393.0 724.0,393.0 724.0,393.0 725.0,393.0 725.0,393.0 726.0,393.0 726.0,393.0 727.0,393.0 727.0,393.0 728.0,393.0 728.0,393.0 729.0,393.0 729.0,425.2 728.0,425.2 728.0,425.2 727.0,425.2 727.0,425.2 726.0,425.2 726.0,425.2 725.0,425.2 725.0,425.2 724.0,425.2 724.0,425.2 723.0,425.2 723.0,425.2 722.0,425.2 722.0,425.2 721.0,425.2 721.0,425.2 720.0,425.2 720.0,425.2 719.0,425.2" fill="#dbf0e3"/>
<rect x="719.00" y="409.00" width="10.00" height="1.00" fill="rgba(60,80,70,0.45)"/>
</g>
<rect x="719.00" y="425.20" width="10.00" height="0.90" fill="rgba(10,40,25,0.35)"/>
<rect x="1140.20" y="391.80" width="15.80" height="59.00" fill="#0b0b0d" rx="3.8"/>
<rect x="1141.00" y="392.60" width="14.20" height="57.40" fill="#479468" rx="3"/>
<clipPath id="c11410_392"><rect x="1141.00" y="392.60" width="14.20" height="57.40" rx="3"/></clipPath>
<g clip-path="url(#c11410_392)">
<polygon points="1141.0,395.7 1142.0,395.7 1142.0,399.4 1143.0,399.4 1143.0,403.5 1144.0,403.5 1144.0,404.0 1145.1,404.0 1145.1,398.4 1146.1,398.4 1146.1,394.0 1147.1,394.0 1147.1,395.0 1148.1,395.0 1148.1,393.5 1149.1,393.5 1149.1,400.4 1150.1,400.4 1150.1,405.7 1151.1,405.7 1151.1,398.6 1152.2,398.6 1152.2,394.0 1153.2,394.0 1153.2,398.9 1154.2,398.9 1154.2,399.2 1155.2,399.2 1155.2,419.1 1154.2,419.1 1154.2,419.4 1153.2,419.4 1153.2,423.9 1152.2,423.9 1152.2,419.4 1151.1,419.4 1151.1,412.2 1150.1,412.2 1150.1,417.8 1149.1,417.8 1149.1,425.1 1148.1,425.1 1148.1,424.2 1147.1,424.2 1147.1,423.8 1146.1,423.8 1146.1,420.0 1145.1,420.0 1145.1,414.1 1144.0,414.1 1144.0,414.6 1143.0,414.6 1143.0,419.0 1142.0,419.0 1142.0,422.5 1141.0,422.5" fill="#dbf0e3"/>
<rect x="1141.00" y="409.00" width="14.20" height="1.00" fill="rgba(60,80,70,0.45)"/>
</g>
<rect x="1141.00" y="425.20" width="14.20" height="0.90" fill="rgba(10,40,25,0.35)"/>
<rect x="1173.00" y="391.80" width="5.80" height="59.00" fill="#0b0b0d"/>
<rect x="1173.80" y="392.60" width="4.20" height="57.40" fill="#479468"/>
<rect x="1178.20" y="391.80" width="61.60" height="59.00" fill="#0b0b0d" rx="3.8"/>
<rect x="1179.00" y="392.60" width="60.00" height="57.40" fill="#479468" rx="3"/>
<clipPath id="c11790_392"><rect x="1179.00" y="392.60" width="60.00" height="57.40" rx="3"/></clipPath>
<g clip-path="url(#c11790_392)">
<polygon points="1179.0,395.7 1180.0,395.7 1180.0,394.5 1181.0,394.5 1181.0,393.7 1182.0,393.7 1182.0,394.4 1183.0,394.4 1183.0,398.5 1184.0,398.5 1184.0,393.7 1185.0,393.7 1185.0,397.3 1186.0,397.3 1186.0,393.8 1187.0,393.8 1187.0,393.9 1188.0,393.9 1188.0,396.0 1189.0,396.0 1189.0,395.0 1190.0,395.0 1190.0,394.4 1191.0,394.4 1191.0,395.0 1192.0,395.0 1192.0,394.2 1193.0,394.2 1193.0,394.7 1194.0,394.7 1194.0,396.9 1195.0,396.9 1195.0,394.6 1196.0,394.6 1196.0,398.0 1197.0,398.0 1197.0,395.2 1198.0,395.2 1198.0,393.9 1199.0,393.9 1199.0,394.2 1200.0,394.2 1200.0,394.5 1201.0,394.5 1201.0,394.8 1202.0,394.8 1202.0,394.4 1203.0,394.4 1203.0,397.1 1204.0,397.1 1204.0,395.1 1205.0,395.1 1205.0,394.0 1206.0,394.0 1206.0,395.1 1207.0,395.1 1207.0,394.4 1208.0,394.4 1208.0,396.9 1209.0,396.9 1209.0,398.9 1210.0,398.9 1210.0,394.0 1211.0,394.0 1211.0,394.1 1212.0,394.1 1212.0,395.0 1213.0,395.0 1213.0,395.1 1214.0,395.1 1214.0,397.1 1215.0,397.1 1215.0,394.5 1216.0,394.5 1216.0,395.2 1217.0,395.2 1217.0,397.1 1218.0,397.1 1218.0,397.6 1219.0,397.6 1219.0,394.9 1220.0,394.9 1220.0,393.8 1221.0,393.8 1221.0,398.0 1222.0,398.0 1222.0,396.2 1223.0,396.2 1223.0,394.3 1224.0,394.3 1224.0,397.4 1225.0,397.4 1225.0,398.3 1226.0,398.3 1226.0,394.1 1227.0,394.1 1227.0,394.8 1228.0,394.8 1228.0,397.4 1229.0,397.4 1229.0,398.3 1230.0,398.3 1230.0,394.7 1231.0,394.7 1231.0,393.7 1232.0,393.7 1232.0,394.3 1233.0,394.3 1233.0,394.4 1234.0,394.4 1234.0,394.6 1235.0,394.6 1235.0,395.1 1236.0,395.1 1236.0,397.9 1237.0,397.9 1237.0,394.9 1238.0,394.9 1238.0,394.9 1239.0,394.9 1239.0,424.3 1238.0,424.3 1238.0,423.0 1237.0,423.0 1237.0,419.9 1236.0,419.9 1236.0,423.6 1235.0,423.6 1235.0,422.7 1234.0,422.7 1234.0,423.2 1233.0,423.2 1233.0,423.4 1232.0,423.4 1232.0,423.4 1231.0,423.4 1231.0,423.1 1230.0,423.1 1230.0,419.9 1229.0,419.9 1229.0,420.5 1228.0,420.5 1228.0,423.6 1227.0,423.6 1227.0,423.2 1226.0,423.2 1226.0,420.2 1225.0,420.2 1225.0,420.5 1224.0,420.5 1224.0,424.7 1223.0,424.7 1223.0,421.3 1222.0,421.3 1222.0,419.5 1221.0,419.5 1221.0,424.2 1220.0,424.2 1220.0,422.9 1219.0,422.9 1219.0,420.8 1218.0,420.8 1218.0,421.4 1217.0,421.4 1217.0,422.8 1216.0,422.8 1216.0,424.3 1215.0,424.3 1215.0,420.7 1214.0,420.7 1214.0,423.2 1213.0,423.2 1213.0,423.2 1212.0,423.2 1212.0,423.2 1211.0,423.2 1211.0,425.1 1210.0,425.1 1210.0,418.8 1209.0,418.8 1209.0,421.5 1208.0,421.5 1208.0,423.2 1207.0,423.2 1207.0,422.8 1206.0,422.8 1206.0,424.4 1205.0,424.4 1205.0,424.0 1204.0,424.0 1204.0,420.7 1203.0,420.7 1203.0,424.3 1202.0,424.3 1202.0,422.5 1201.0,422.5 1201.0,423.6 1200.0,423.6 1200.0,423.4 1199.0,423.4 1199.0,424.3 1198.0,424.3 1198.0,424.0 1197.0,424.0 1197.0,419.7 1196.0,419.7 1196.0,424.7 1195.0,424.7 1195.0,421.1 1194.0,421.1 1194.0,424.0 1193.0,424.0 1193.0,423.6 1192.0,423.6 1192.0,422.5 1191.0,422.5 1191.0,424.5 1190.0,424.5 1190.0,424.0 1189.0,424.0 1189.0,422.1 1188.0,422.1 1188.0,423.4 1187.0,423.4 1187.0,425.2 1186.0,425.2 1186.0,420.5 1185.0,420.5 1185.0,423.5 1184.0,423.5 1184.0,420.0 1183.0,420.0 1183.0,423.0 1182.0,423.0 1182.0,424.2 1181.0,424.2 1181.0,424.0 1180.0,424.0 1180.0,421.5 1179.0,421.5" fill="#dbf0e3"/>
<rect x="1179.00" y="409.00" width="60.00" height="1.00" fill="rgba(60,80,70,0.45)"/>
</g>
<rect x="1179.00" y="425.20" width="60.00" height="0.90" fill="rgba(10,40,25,0.35)"/>
<rect x="1356.20" y="391.80" width="25.80" height="59.00" fill="#0b0b0d" rx="3.8"/>
<rect x="1357.00" y="392.60" width="24.20" height="57.40" fill="#479468" rx="3"/>
<clipPath id="c13570_392"><rect x="1357.00" y="392.60" width="24.20" height="57.40" rx="3"/></clipPath>
<g clip-path="url(#c13570_392)">
<polygon points="1357.0,396.0 1358.0,396.0 1358.0,398.6 1359.0,398.6 1359.0,395.2 1360.0,395.2 1360.0,394.2 1361.0,394.2 1361.0,394.6 1362.0,394.6 1362.0,394.1 1363.0,394.1 1363.0,393.9 1364.1,393.9 1364.1,394.2 1365.1,394.2 1365.1,395.1 1366.1,395.1 1366.1,396.5 1367.1,396.5 1367.1,399.0 1368.1,399.0 1368.1,395.0 1369.1,395.0 1369.1,394.8 1370.1,394.8 1370.1,395.2 1371.1,395.2 1371.1,394.2 1372.1,394.2 1372.1,393.9 1373.1,393.9 1373.1,394.1 1374.1,394.1 1374.1,394.6 1375.2,394.6 1375.2,394.7 1376.2,394.7 1376.2,393.9 1377.2,393.9 1377.2,398.1 1378.2,398.1 1378.2,393.9 1379.2,393.9 1379.2,395.2 1380.2,395.2 1380.2,395.1 1381.2,395.1 1381.2,424.1 1380.2,424.1 1380.2,423.0 1379.2,423.0 1379.2,424.1 1378.2,424.1 1378.2,420.4 1377.2,420.4 1377.2,423.2 1376.2,423.2 1376.2,423.4 1375.2,423.4 1375.2,423.9 1374.1,423.9 1374.1,424.9 1373.1,424.9 1373.1,424.9 1372.1,424.9 1372.1,424.4 1371.1,424.4 1371.1,424.0 1370.1,424.0 1370.1,423.3 1369.1,423.3 1369.1,424.2 1368.1,424.2 1368.1,418.6 1367.1,418.6 1367.1,421.2 1366.1,421.2 1366.1,423.9 1365.1,423.9 1365.1,424.5 1364.1,424.5 1364.1,424.1 1363.0,424.1 1363.0,424.5 1362.0,424.5 1362.0,422.6 1361.0,422.6 1361.0,424.6 1360.0,424.6 1360.0,423.9 1359.0,423.9 1359.0,419.1 1358.0,419.1 1358.0,422.8 1357.0,422.8" fill="#dbf0e3"/>
<rect x="1357.00" y="409.00" width="24.20" height="1.00" fill="rgba(60,80,70,0.45)"/>
</g>
<rect x="1357.00" y="425.20" width="24.20" height="0.90" fill="rgba(10,40,25,0.35)"/>
<rect x="246.20" y="452.80" width="62.20" height="59.00" fill="#0b0b0d" rx="3.8"/>
<rect x="247.00" y="453.60" width="60.60" height="57.40" fill="#479468" rx="3"/>
<clipPath id="c2470_453"><rect x="247.00" y="453.60" width="60.60" height="57.40" rx="3"/></clipPath>
<g clip-path="url(#c2470_453)">
<polygon points="247.0,454.3 248.0,454.3 248.0,454.4 249.0,454.4 249.0,455.0 250.0,455.0 250.0,454.0 251.0,454.0 251.0,454.6 252.0,454.6 252.0,455.2 253.0,455.2 253.0,454.8 254.0,454.8 254.0,454.9 254.9,454.9 254.9,454.4 255.9,454.4 255.9,455.0 256.9,455.0 256.9,454.6 257.9,454.6 257.9,454.1 258.9,454.1 258.9,454.9 259.9,454.9 259.9,455.1 260.9,455.1 260.9,454.9 261.9,454.9 261.9,454.6 262.9,454.6 262.9,455.1 263.9,455.1 263.9,454.5 264.9,454.5 264.9,454.3 265.9,454.3 265.9,455.1 266.9,455.1 266.9,454.8 267.9,454.8 267.9,455.2 268.9,455.2 268.9,455.0 269.8,455.0 269.8,463.6 270.8,463.6 270.8,463.8 271.8,463.8 271.8,463.9 272.8,463.9 272.8,463.8 273.8,463.8 273.8,463.4 274.8,463.4 274.8,455.2 275.8,455.2 275.8,454.0 276.8,454.0 276.8,455.1 277.8,455.1 277.8,454.7 278.8,454.7 278.8,454.6 279.8,454.6 279.8,454.1 280.8,454.1 280.8,454.5 281.8,454.5 281.8,455.5 282.8,455.5 282.8,455.1 283.8,455.1 283.8,454.3 284.8,454.3 284.8,462.9 285.7,462.9 285.7,462.9 286.7,462.9 286.7,454.1 287.7,454.1 287.7,454.3 288.7,454.3 288.7,454.3 289.7,454.3 289.7,455.1 290.7,455.1 290.7,454.9 291.7,454.9 291.7,454.6 292.7,454.6 292.7,454.2 293.7,454.2 293.7,455.2 294.7,455.2 294.7,454.5 295.7,454.5 295.7,454.4 296.7,454.4 296.7,456.1 297.7,456.1 297.7,455.1 298.7,455.1 298.7,454.5 299.7,454.5 299.7,454.4 300.6,454.4 300.6,454.7 301.6,454.7 301.6,455.3 302.6,455.3 302.6,455.0 303.6,455.0 303.6,455.3 304.6,455.3 304.6,454.2 305.6,454.2 305.6,454.7 306.6,454.7 306.6,454.4 307.6,454.4 307.6,484.7 306.6,484.7 306.6,485.2 305.6,485.2 305.6,484.9 304.6,484.9 304.6,485.1 303.6,485.1 303.6,485.2 302.6,485.2 302.6,484.0 301.6,484.0 301.6,485.7 300.6,485.7 300.6,485.1 299.7,485.1 299.7,485.8 298.7,485.8 298.7,485.1 297.7,485.1 297.7,483.6 296.7,483.6 296.7,485.9 295.7,485.9 295.7,484.7 294.7,484.7 294.7,484.4 293.7,484.4 293.7,486.2 292.7,486.2 292.7,484.7 291.7,484.7 291.7,485.4 290.7,485.4 290.7,486.1 289.7,486.1 289.7,485.1 288.7,485.1 288.7,484.9 287.7,484.9 287.7,485.8 286.7,485.8 286.7,477.4 285.7,477.4 285.7,477.4 284.8,477.4 284.8,485.7 283.8,485.7 283.8,485.3 282.8,485.3 282.8,484.4 281.8,484.4 281.8,486.1 280.8,486.1 280.8,485.0 279.8,485.0 279.8,485.5 278.8,485.5 278.8,485.9 277.8,485.9 277.8,484.3 276.8,484.3 276.8,485.0 275.8,485.0 275.8,485.9 274.8,485.9 274.8,476.6 273.8,476.6 273.8,476.2 272.8,476.2 272.8,476.4 271.8,476.4 271.8,476.4 270.8,476.4 270.8,477.0 269.8,477.0 269.8,485.3 268.9,485.3 268.9,484.5 267.9,484.5 267.9,485.6 266.9,485.6 266.9,485.5 265.9,485.5 265.9,484.8 264.9,484.8 264.9,486.2 263.9,486.2 263.9,485.4 262.9,485.4 262.9,486.2 261.9,486.2 261.9,486.2 260.9,486.2 260.9,486.0 259.9,486.0 259.9,486.2 258.9,486.2 258.9,486.2 257.9,486.2 257.9,485.5 256.9,485.5 256.9,484.8 255.9,484.8 255.9,484.8 254.9,484.8 254.9,484.6 254.0,484.6 254.0,485.1 253.0,485.1 253.0,485.1 252.0,485.1 252.0,485.5 251.0,485.5 251.0,485.6 250.0,485.6 250.0,484.4 249.0,484.4 249.0,486.2 248.0,486.2 248.0,486.2 247.0,486.2" fill="#dbf0e3"/>
<rect x="247.00" y="470.00" width="60.60" height="1.00" fill="rgba(60,80,70,0.45)"/>
</g>
<rect x="247.00" y="486.20" width="60.60" height="0.90" fill="rgba(10,40,25,0.35)"/>
<rect x="308.60" y="452.80" width="65.90" height="59.00" fill="#0b0b0d" rx="3.8"/>
<rect x="309.40" y="453.60" width="64.30" height="57.40" fill="#479468" rx="3"/>
<clipPath id="c3094_453"><rect x="309.40" y="453.60" width="64.30" height="57.40" rx="3"/></clipPath>
<g clip-path="url(#c3094_453)">
<polygon points="309.4,454.2 310.4,454.2 310.4,454.5 311.4,454.5 311.4,459.9 312.4,459.9 312.4,457.0 313.4,457.0 313.4,454.3 314.4,454.3 314.4,455.3 315.4,455.3 315.4,457.7 316.4,457.7 316.4,459.8 317.4,459.8 317.4,460.2 318.4,460.2 318.4,455.0 319.4,455.0 319.4,454.7 320.5,454.7 320.5,455.1 321.5,455.1 321.5,458.4 322.5,458.4 322.5,457.4 323.5,457.4 323.5,457.7 324.5,457.7 324.5,456.2 325.5,456.2 325.5,454.4 326.5,454.4 326.5,454.4 327.5,454.4 327.5,456.5 328.5,456.5 328.5,455.0 329.5,455.0 329.5,455.9 330.5,455.9 330.5,460.2 331.5,460.2 331.5,460.0 332.5,460.0 332.5,454.3 333.5,454.3 333.5,454.1 334.5,454.1 334.5,459.2 335.5,459.2 335.5,454.9 336.5,454.9 336.5,457.6 337.5,457.6 337.5,455.6 338.5,455.6 338.5,454.3 339.5,454.3 339.5,454.7 340.5,454.7 340.5,454.5 341.5,454.5 341.5,455.4 342.6,455.4 342.6,457.8 343.6,457.8 343.6,456.5 344.6,456.5 344.6,460.4 345.6,460.4 345.6,455.4 346.6,455.4 346.6,454.2 347.6,454.2 347.6,460.3 348.6,460.3 348.6,454.3 349.6,454.3 349.6,458.5 350.6,458.5 350.6,455.4 351.6,455.4 351.6,458.5 352.6,458.5 352.6,457.5 353.6,457.5 353.6,455.1 354.6,455.1 354.6,454.2 355.6,454.2 355.6,455.5 356.6,455.5 356.6,455.0 357.6,455.0 357.6,454.7 358.6,454.7 358.6,455.0 359.6,455.0 359.6,454.7 360.6,454.7 360.6,455.6 361.6,455.6 361.6,454.0 362.6,454.0 362.6,455.4 363.7,455.4 363.7,459.1 364.7,459.1 364.7,454.8 365.7,454.8 365.7,454.7 366.7,454.7 366.7,454.1 367.7,454.1 367.7,460.3 368.7,460.3 368.7,454.4 369.7,454.4 369.7,456.7 370.7,456.7 370.7,457.4 371.7,457.4 371.7,455.2 372.7,455.2 372.7,456.2 373.7,456.2 373.7,483.0 372.7,483.0 372.7,485.3 371.7,485.3 371.7,483.8 370.7,483.8 370.7,484.0 369.7,484.0 369.7,485.1 368.7,485.1 368.7,480.2 367.7,480.2 367.7,486.2 366.7,486.2 366.7,485.8 365.7,485.8 365.7,484.7 364.7,484.7 364.7,480.9 363.7,480.9 363.7,484.2 362.6,484.2 362.6,486.2 361.6,486.2 361.6,484.1 360.6,484.1 360.6,484.7 359.6,484.7 359.6,484.0 358.6,484.0 358.6,484.9 357.6,484.9 357.6,484.6 356.6,484.6 356.6,485.6 355.6,485.6 355.6,486.0 354.6,486.0 354.6,484.1 353.6,484.1 353.6,483.5 352.6,483.5 352.6,481.5 351.6,481.5 351.6,485.5 350.6,485.5 350.6,481.4 349.6,481.4 349.6,486.2 348.6,486.2 348.6,480.1 347.6,480.1 347.6,485.2 346.6,485.2 346.6,483.8 345.6,483.8 345.6,480.0 344.6,480.0 344.6,484.6 343.6,484.6 343.6,482.0 342.6,482.0 342.6,485.9 341.5,485.9 341.5,485.8 340.5,485.8 340.5,486.0 339.5,486.0 339.5,485.4 338.5,485.4 338.5,484.2 337.5,484.2 337.5,481.7 336.5,481.7 336.5,484.5 335.5,484.5 335.5,480.6 334.5,480.6 334.5,486.2 333.5,486.2 333.5,485.7 332.5,485.7 332.5,480.2 331.5,480.2 331.5,480.6 330.5,480.6 330.5,483.2 329.5,483.2 329.5,484.3 328.5,484.3 328.5,483.4 327.5,483.4 327.5,485.2 326.5,485.2 326.5,485.1 325.5,485.1 325.5,483.7 324.5,483.7 324.5,482.4 323.5,482.4 323.5,483.7 322.5,483.7 322.5,481.5 321.5,481.5 321.5,484.7 320.5,484.7 320.5,484.5 319.4,484.5 319.4,485.0 318.4,485.0 318.4,480.1 317.4,480.1 317.4,480.2 316.4,480.2 316.4,482.7 315.4,482.7 315.4,484.9 314.4,484.9 314.4,486.2 313.4,486.2 313.4,483.8 312.4,483.8 312.4,480.0 311.4,480.0 311.4,486.2 310.4,486.2 310.4,486.2 309.4,486.2" fill="#dbf0e3"/>
<rect x="309.40" y="470.00" width="64.30" height="1.00" fill="rgba(60,80,70,0.45)"/>
</g>
<rect x="309.40" y="486.20" width="64.30" height="0.90" fill="rgba(10,40,25,0.35)"/>
<rect x="616.60" y="514.00" width="0.80" height="59.00" fill="#3f9a66"/>
<rect x="0.00" y="326.00" width="1397.00" height="1.00" fill="#0b0b0d"/>
<rect x="0.00" y="327.00" width="1397.00" height="3.00" fill="#414144"/>
<rect x="0.00" y="330.00" width="1397.00" height="1.00" fill="#0b0b0d"/>
<rect x="0.00" y="20.00" width="218.00" height="556.00" fill="#212126"/>
<rect x="0.00" y="59.00" width="218.00" height="1.10" fill="#0e0e10"/>
<rect x="0.00" y="326.00" width="218.00" height="1.00" fill="#0b0b0d"/>
<rect x="0.00" y="327.00" width="218.00" height="3.00" fill="#414144"/>
<rect x="0.00" y="330.00" width="218.00" height="1.00" fill="#0b0b0d"/>
<rect x="218.00" y="20.00" width="1.00" height="556.00" fill="#0e0e10"/>
<rect x="0.00" y="78.00" width="218.00" height="1.00" fill="#101013"/>
<rect x="6.00" y="79.00" width="1.00" height="247.00" fill="#101013"/>
<rect x="6.00" y="331.00" width="1.00" height="243.00" fill="#101013"/>
<rect x="6.00" y="151.00" width="212.00" height="1.00" fill="#101013"/>
<rect x="6.00" y="208.00" width="212.00" height="1.00" fill="#101013"/>
<rect x="6.00" y="243.00" width="212.00" height="1.00" fill="#101013"/>
<rect x="6.00" y="270.00" width="212.00" height="1.00" fill="#101013"/>
<rect x="6.00" y="326.00" width="212.00" height="1.00" fill="#101013"/>
<rect x="6.00" y="326.00" width="212.00" height="1.00" fill="#101013"/>
<rect x="50.00" y="79.00" width="1.00" height="26.00" fill="#101013"/>
<rect x="7.00" y="105.00" width="211.00" height="1.00" fill="#101013"/>
<rect x="50.00" y="152.00" width="1.00" height="174.00" fill="#101013"/>
<rect x="6.00" y="390.00" width="212.00" height="1.00" fill="#101013"/>
<rect x="50.00" y="331.00" width="1.00" height="25.50" fill="#101013"/>
<rect x="7.00" y="356.00" width="211.00" height="1.00" fill="#101013"/>
<rect x="6.00" y="451.00" width="212.00" height="1.00" fill="#101013"/>
<rect x="50.00" y="392.00" width="1.00" height="25.50" fill="#101013"/>
<rect x="7.00" y="417.00" width="211.00" height="1.00" fill="#101013"/>
<rect x="6.00" y="512.00" width="212.00" height="1.00" fill="#101013"/>
<rect x="50.00" y="453.00" width="1.00" height="25.50" fill="#101013"/>
<rect x="7.00" y="478.00" width="211.00" height="1.00" fill="#101013"/>
<rect x="6.00" y="573.00" width="212.00" height="1.00" fill="#101013"/>
<rect x="50.00" y="514.00" width="1.00" height="25.50" fill="#101013"/>
<rect x="7.00" y="539.00" width="211.00" height="1.00" fill="#101013"/>
<rect x="0.00" y="574.00" width="218.00" height="1.00" fill="#101013"/>
<rect x="21.6" y="115.3" width="16.4" height="10.4" rx="1" fill="none" stroke="#e8e8e8" stroke-width="1.3"/>
<rect x="23.80" y="117.40" width="1.20" height="1.20" fill="#e0e0e0"/>
<rect x="23.80" y="120.00" width="1.20" height="1.20" fill="#e0e0e0"/>
<rect x="23.80" y="122.60" width="1.20" height="1.20" fill="#e0e0e0"/>
<rect x="34.80" y="117.40" width="1.20" height="1.20" fill="#e0e0e0"/>
<rect x="34.80" y="120.00" width="1.20" height="1.20" fill="#e0e0e0"/>
<rect x="34.80" y="122.60" width="1.20" height="1.20" fill="#e0e0e0"/>
<rect x="57.6" y="173.3" width="16.4" height="10.4" rx="1" fill="none" stroke="#e8e8e8" stroke-width="1.3"/>
<rect x="59.80" y="175.40" width="1.20" height="1.20" fill="#e0e0e0"/>
<rect x="59.80" y="178.00" width="1.20" height="1.20" fill="#e0e0e0"/>
<rect x="59.80" y="180.60" width="1.20" height="1.20" fill="#e0e0e0"/>
<rect x="70.80" y="175.40" width="1.20" height="1.20" fill="#e0e0e0"/>
<rect x="70.80" y="178.00" width="1.20" height="1.20" fill="#e0e0e0"/>
<rect x="70.80" y="180.60" width="1.20" height="1.20" fill="#e0e0e0"/>
<rect x="57.6" y="220.4" width="16.4" height="10.4" rx="1" fill="none" stroke="#e8e8e8" stroke-width="1.3"/>
<rect x="59.80" y="222.50" width="1.20" height="1.20" fill="#e0e0e0"/>
<rect x="59.80" y="225.10" width="1.20" height="1.20" fill="#e0e0e0"/>
<rect x="59.80" y="227.70" width="1.20" height="1.20" fill="#e0e0e0"/>
<rect x="70.80" y="222.50" width="1.20" height="1.20" fill="#e0e0e0"/>
<rect x="70.80" y="225.10" width="1.20" height="1.20" fill="#e0e0e0"/>
<rect x="70.80" y="227.70" width="1.20" height="1.20" fill="#e0e0e0"/>
<rect x="57.6" y="250.9" width="16.4" height="10.4" rx="1" fill="none" stroke="#e8e8e8" stroke-width="1.3"/>
<rect x="59.80" y="253.00" width="1.20" height="1.20" fill="#e0e0e0"/>
<rect x="59.80" y="255.60" width="1.20" height="1.20" fill="#e0e0e0"/>
<rect x="59.80" y="258.20" width="1.20" height="1.20" fill="#e0e0e0"/>
<rect x="70.80" y="253.00" width="1.20" height="1.20" fill="#e0e0e0"/>
<rect x="70.80" y="255.60" width="1.20" height="1.20" fill="#e0e0e0"/>
<rect x="70.80" y="258.20" width="1.20" height="1.20" fill="#e0e0e0"/>
<rect x="57.6" y="292.7" width="16.4" height="10.4" rx="1" fill="none" stroke="#e8e8e8" stroke-width="1.3"/>
<rect x="59.80" y="294.80" width="1.20" height="1.20" fill="#e0e0e0"/>
<rect x="59.80" y="297.40" width="1.20" height="1.20" fill="#e0e0e0"/>
<rect x="59.80" y="300.00" width="1.20" height="1.20" fill="#e0e0e0"/>
<rect x="70.80" y="294.80" width="1.20" height="1.20" fill="#e0e0e0"/>
<rect x="70.80" y="297.40" width="1.20" height="1.20" fill="#e0e0e0"/>
<rect x="70.80" y="300.00" width="1.20" height="1.20" fill="#e0e0e0"/>
<rect x="21.5" y="364.6" width="18.8" height="18.8" rx="2" fill="none" stroke="#626266" stroke-width="1.2"/>
<rect x="51.7" y="364.6" width="18.8" height="18.8" rx="2" fill="none" stroke="#626266" stroke-width="1.2"/>
<rect x="21.5" y="425.6" width="18.8" height="18.8" rx="2" fill="none" stroke="#626266" stroke-width="1.2"/>
<rect x="51.7" y="425.6" width="18.8" height="18.8" rx="2" fill="none" stroke="#626266" stroke-width="1.2"/>
<rect x="21.5" y="486.6" width="18.8" height="18.8" rx="2" fill="none" stroke="#626266" stroke-width="1.2"/>
<rect x="51.7" y="486.6" width="18.8" height="18.8" rx="2" fill="none" stroke="#626266" stroke-width="1.2"/>
<rect x="21.5" y="547.6" width="18.8" height="18.8" rx="2" fill="none" stroke="#626266" stroke-width="1.2"/>
<rect x="51.7" y="547.6" width="18.8" height="18.8" rx="2" fill="none" stroke="#626266" stroke-width="1.2"/>
<rect x="0.00" y="0.00" width="23.00" height="1.00" fill="#7a7a7a"/>
<rect x="0.00" y="2.00" width="23.00" height="4.00" fill="#6a6a6b" rx="0.8"/>
<rect x="0.00" y="3.00" width="6.00" height="1.00" fill="#1a1a1c"/>
<rect x="581.5" y="-8" width="129" height="16.2" rx="2.5" fill="#1b1b1f" stroke="#0c0c0e" stroke-width="1"/>
<path d="M692.5 0 l3 2.6 l3 -2.6" stroke="#7a7a7e" stroke-width="1.2" fill="none"/>
<rect x="726.00" y="0.00" width="1.00" height="13.00" fill="#3c3c42"/>
<circle cx="753.5" cy="-0.5" r="5.6" fill="#28282c"/>
<rect x="774.00" y="-1.00" width="84.00" height="1.70" fill="#2e2e33"/>
<circle cx="784.3" cy="0" r="3.7" fill="#b2b2b4"/>
<circle cx="879" cy="-0.5" r="5.8" fill="#28282c"/>
<rect x="878.30" y="0.00" width="1.40" height="2.00" fill="#77777b"/>
<rect x="0.00" y="573.00" width="1397.00" height="15.00" fill="#2b2b30"/>
<rect x="219.00" y="573.00" width="1167.00" height="1.00" fill="#313136"/>
<rect x="0.00" y="573.00" width="218.00" height="1.00" fill="#0c0c0e"/>
<rect x="0.00" y="574.00" width="218.00" height="13.00" fill="#2c2c30"/>
<rect x="0.00" y="574.00" width="218.00" height="2.00" fill="#28282c"/>
<rect x="218.00" y="20.00" width="1.00" height="567.00" fill="#0c0c0e"/>
<rect x="219.20" y="577.00" width="612.80" height="8.80" fill="#09090b" rx="4.4"/>
<rect x="220.00" y="578.00" width="611.00" height="6.90" fill="#5d6069" rx="3.5"/>
<rect x="0.00" y="587.00" width="1397.00" height="1.00" fill="#0a0a0c"/>
<rect x="0.00" y="588.00" width="1397.00" height="28.00" fill="#18181b"/>
<rect x="798.00" y="588.00" width="118.00" height="28.00" fill="#000000"/>
<rect x="0.00" y="615.00" width="1397.00" height="1.00" fill="#0e130c"/>
<rect x="798.00" y="615.00" width="118.00" height="1.00" fill="#000000"/>
<rect x="0.00" y="616.00" width="1397.00" height="1.00" fill="#9626fc"/>
<rect x="0.00" y="617.00" width="1397.00" height="1.00" fill="#1e0038"/>
<rect x="0.00" y="618.00" width="1397.00" height="1.00" fill="#42443e"/>
<g fill="none" stroke="#6c6c70" stroke-width="1.3" stroke-linejoin="round"><path d="M128.7 599.9h16.8l-0.6 10.6h-15.6z" fill="#232326"/><path d="M129.4 597.5h15.4" stroke-width="1.1" stroke="#5e5e62"/><path d="M130.2 595.3h13.8" stroke-width="1" stroke="#3e3e42"/><path d="M131.3 608.6l3.1-3.2 2.1 2.3 2.7-3 3.6 4.1" stroke-width="1" stroke="#58585c"/></g>
<circle cx="132.4" cy="603.4" r="1.35" fill="#6e6e72"/>
<g fill="none" stroke="#78787c" stroke-width="1.25" stroke-linejoin="round"><path d="M252.6 596.5h14.4q1.6 0 1.3 1.5l-1.7 8.2q-0.3 1.5-1.9 1.5h-14q-1.4 0-0.9-1.2" fill="#242427"/><path d="M259.7 593.9l-4.4 16.3" stroke="#77777b"/><path d="M247.9 598.6h4.4M245.8 601.5h5.6M243.8 604.4h6.6" stroke-width="1.3"/></g>
<rect x="261.50" y="598.10" width="1.20" height="1.20" fill="#5c5c60"/>
<rect x="264.70" y="598.10" width="1.20" height="1.20" fill="#5c5c60"/>
<rect x="259.70" y="604.60" width="1.20" height="1.20" fill="#5c5c60"/>
<rect x="262.60" y="604.60" width="1.20" height="1.20" fill="#5c5c60"/>
<rect x="366.00" y="597.85" width="10.20" height="2.90" fill="#7a7a7e" rx="1.4"/>
<rect x="380.00" y="597.85" width="7.10" height="2.90" fill="#7a7a7e" rx="1.4"/>
<rect x="370.00" y="602.05" width="6.20" height="2.90" fill="#7a7a7e" rx="1.4"/>
<rect x="379.00" y="602.05" width="7.00" height="2.90" fill="#7a7a7e" rx="1.4"/>
<rect x="366.00" y="606.05" width="10.00" height="2.90" fill="#7a7a7e" rx="1.4"/>
<rect x="379.00" y="606.05" width="9.40" height="2.90" fill="#7a7a7e" rx="1.4"/>
<rect x="376.90" y="594.50" width="1.30" height="17.40" fill="#8a8a8e"/>
<rect x="376.1" y="594" width="2.9" height="2.6" rx="0.6" fill="#18181b" stroke="#8a8a8e" stroke-width="0.8"/>
<path d="M490.8 608.6q-5.4-5.6-1.2-10.4q3.6-3.8 10.8-3.2" stroke="#27272a" stroke-width="3" fill="none" stroke-linecap="round"/>
<g transform="translate(501,603.7) rotate(31)"><rect x="-1.45" y="-7.2" width="2.9" height="14.4" rx="1.45" fill="#2a2a2d" stroke="#88888c" stroke-width="0.9"/><rect x="-1.2" y="-6.9" width="2.4" height="4.4" rx="1.1" fill="#8c8c90"/></g>
<path d="M499.4 592.7Q499.4 594.6 501.29999999999995 594.6Q499.4 594.6 499.4 596.5Q499.4 594.6 497.5 594.6Q499.4 594.6 499.4 592.7z" fill="#8a8a8e" stroke="#8a8a8e" stroke-width="0.5"/>
<path d="M490.3 595.6Q490.3 597.5 492.2 597.5Q490.3 597.5 490.3 599.4Q490.3 597.5 488.40000000000003 597.5Q490.3 597.5 490.3 595.6z" fill="#8a8a8e" stroke="#8a8a8e" stroke-width="0.5"/>
<path d="M495.3 599.7Q495.3 601.6 497.2 601.6Q495.3 601.6 495.3 603.5Q495.3 601.6 493.40000000000003 601.6Q495.3 601.6 495.3 599.7z" fill="#8a8a8e" stroke="#8a8a8e" stroke-width="0.5"/>
<circle cx="612.9" cy="596.5" r="1.75" fill="#8a8a8a"/>
<circle cx="618.3" cy="595.7" r="1.75" fill="#3c3c3e"/>
<circle cx="622.5" cy="599.0" r="1.75" fill="#4a4a4c"/>
<circle cx="623.2" cy="604.3" r="1.75" fill="#555558"/>
<circle cx="619.9" cy="608.5" r="1.75" fill="#5a5a5c"/>
<circle cx="614.6" cy="609.2" r="1.75" fill="#666668"/>
<circle cx="610.4" cy="606.0" r="1.75" fill="#6e6e70"/>
<circle cx="609.7" cy="600.7" r="1.75" fill="#828284"/>
<circle cx="616.5" cy="602.5" r="1.75" fill="#8e8e8e"/>
<g fill="#858588"><ellipse cx="732.5" cy="607.7" rx="2.7" ry="2.3" transform="rotate(-20 732.5 607.7)"/><ellipse cx="740.4" cy="606.5" rx="2.7" ry="2.3" transform="rotate(-20 740.4 606.5)"/><path d="M733.9 598.3l9.4-2.4v3.3l-9.4 2.4z"/><rect x="733.9" y="598.4" width="1.5" height="9.4"/><rect x="741.8" y="596.4" width="1.5" height="10.2"/></g>
<g transform="translate(857.95,599.76) rotate(44.5)"><path d="M-3.2 0.6L-7 7.6L-3 5.6z M3.2 0.6L7 7.6L3 5.6z" fill="#050a12" stroke="#a4d4f2" stroke-width="1" stroke-linejoin="round"/><path d="M0 -8.2C3.7 -5.6 4.1 0 3 6.4L-3 6.4C-4.1 0 -3.7 -5.6 0 -8.2Z" fill="#0e3f7e" stroke="#a8d8f4" stroke-width="1.05"/><path d="M0 -7.4C1.8 -6.2 2.7 -4.6 3 -2.6L-3 -2.6C-2.7 -4.6 -1.8 -6.2 0 -7.4Z" fill="#5fa4e0" opacity="0.75"/><circle cx="0" cy="0" r="2.05" fill="#e4f0fa"/><circle cx="0" cy="0" r="1" fill="#0a0a0e"/><rect x="-2.2" y="6.7" width="4.4" height="1.5" fill="#d47868"/><path d="M-2.1 8.8L-2.5 11.6L0 13L2.5 11.6L2.1 8.8" fill="none" stroke="#e6b61a" stroke-width="1.5" stroke-linejoin="round"/></g>
<path d="M1373.4 596.8l7.6 7.4h-2v6h-4v-4.6h-3v4.6h-4v-6h-2z" fill="#8c8c8c"/>
<circle cx="218.6" cy="50" r="3.6" fill="#8e8e8e" stroke="#1a1a1c" stroke-width="0.9"/>
<rect x="380.10" y="30.00" width="2.80" height="544.00" fill="rgba(10,10,12,0.35)"/>
<path d="M373.3 21q0-1.6 1.6-1.6h13.2q1.6 0 1.6 1.6v5.9l-7.2 6.4h-2l-7.2-6.4z" fill="#0c0c0e"/>
<path d="M374.1 21.1q0-1.1 1.1-1.1h12.6q1.1 0 1.1 1.1v5.3l-6.8 6h-1.2l-6.8-6z" fill="#939393"/>
<rect x="380.70" y="30.50" width="1.60" height="544.00" fill="#919191"/>
</svg>
<div id="tx">
<div class="t" style="left:225.2px;top:33.1px;font-size:10.7px;line-height:12.8px;color:#adadad;">01:00:00:00</div>
<div class="t" style="left:704.9px;top:33.1px;font-size:10.7px;line-height:12.8px;color:#adadad;">01:14:56:00</div>
<div class="t" style="left:1183.9px;top:33.1px;font-size:10.7px;line-height:12.8px;color:#adadad;">01:29:52:00</div>
<div class="t" style="left:1360.6px;top:251.7px;font-size:11px;line-height:13.2px;color:#ffffff;letter-spacing:0.25px;-webkit-text-stroke:0.15px #ffffff;">e...</div>
<div class="t" style="left:259.4px;top:308.8px;font-size:11px;line-height:13.2px;color:#ffffff;width:48.3px;overflow:hidden;letter-spacing:0.25px;-webkit-text-stroke:0.15px #ffffff;">1stpar...</div>
<div class="t" style="left:313.4px;top:308.8px;font-size:11px;line-height:13.2px;color:#ffffff;width:59.5px;overflow:hidden;letter-spacing:0.25px;-webkit-text-stroke:0.15px #ffffff;">1stparty....</div>
<div class="t" style="left:587.6px;top:308.8px;font-size:11px;line-height:13.2px;color:#ffffff;width:29.3px;overflow:hidden;letter-spacing:0.25px;-webkit-text-stroke:0.15px #ffffff;">MV...</div>
<div class="t" style="left:669.4px;top:308.8px;font-size:11px;line-height:13.2px;color:#ffffff;width:28.5px;overflow:hidden;letter-spacing:0.25px;-webkit-text-stroke:0.15px #ffffff;">00...</div>
<div class="t" style="left:770.7px;top:308.8px;font-size:11px;line-height:13.2px;color:#ffffff;width:24.2px;overflow:hidden;letter-spacing:0.25px;-webkit-text-stroke:0.15px #ffffff;">0...</div>
<div class="t" style="left:800.7px;top:308.8px;font-size:11px;line-height:13.2px;color:#ffffff;width:28.2px;overflow:hidden;letter-spacing:0.25px;-webkit-text-stroke:0.15px #ffffff;">00...</div>
<div class="t" style="left:834.6px;top:308.8px;font-size:11px;line-height:13.2px;color:#ffffff;width:44.5px;overflow:hidden;letter-spacing:0.25px;-webkit-text-stroke:0.15px #ffffff;">00012...</div>
<div class="t" style="left:942.8px;top:308.8px;font-size:11px;line-height:13.2px;color:#ffffff;width:63.9px;overflow:hidden;letter-spacing:0.25px;-webkit-text-stroke:0.15px #ffffff;">00013.MT...</div>
<div class="t" style="left:1042.6px;top:308.8px;font-size:11px;line-height:13.2px;color:#ffffff;width:24.3px;overflow:hidden;letter-spacing:0.25px;-webkit-text-stroke:0.15px #ffffff;">0...</div>
<div class="t" style="left:1292.4px;top:308.8px;font-size:11px;line-height:13.2px;color:#ffffff;width:35.5px;overflow:hidden;letter-spacing:0.25px;-webkit-text-stroke:0.15px #ffffff;">000...</div>
<div class="t" style="left:250.3px;top:372.4px;font-size:11px;line-height:13.2px;color:#fbfffc;width:57.3px;overflow:hidden;letter-spacing:0.25px;-webkit-text-stroke:0.15px #fbfffc;">1stpart...</div>
<div class="t" style="left:312.9px;top:372.4px;font-size:11px;line-height:13.2px;color:#fbfffc;width:60.2px;overflow:hidden;letter-spacing:0.25px;-webkit-text-stroke:0.15px #fbfffc;">1stpart.w...</div>
<div class="t" style="left:586.6px;top:372.4px;font-size:11px;line-height:13.2px;color:#fbfffc;width:30.0px;overflow:hidden;letter-spacing:0.25px;-webkit-text-stroke:0.15px #fbfffc;">MV...</div>
<div class="t" style="left:668.8px;top:372.4px;font-size:11px;line-height:13.2px;color:#fbfffc;width:28.8px;overflow:hidden;letter-spacing:0.25px;-webkit-text-stroke:0.15px #fbfffc;">00...</div>
<div class="t" style="left:770.1px;top:372.4px;font-size:11px;line-height:13.2px;color:#fbfffc;width:24.5px;overflow:hidden;letter-spacing:0.25px;-webkit-text-stroke:0.15px #fbfffc;">0...</div>
<div class="t" style="left:799.9px;top:372.4px;font-size:11px;line-height:13.2px;color:#fbfffc;width:28.5px;overflow:hidden;letter-spacing:0.25px;-webkit-text-stroke:0.15px #fbfffc;">00...</div>
<div class="t" style="left:833.6px;top:372.4px;font-size:11px;line-height:13.2px;color:#fbfffc;width:44.6px;overflow:hidden;letter-spacing:0.25px;-webkit-text-stroke:0.15px #fbfffc;">00012...</div>
<div class="t" style="left:942.1px;top:372.4px;font-size:11px;line-height:13.2px;color:#fbfffc;width:64.2px;overflow:hidden;letter-spacing:0.25px;-webkit-text-stroke:0.15px #fbfffc;">00013.MT...</div>
<div class="t" style="left:1041.8px;top:372.4px;font-size:11px;line-height:13.2px;color:#fbfffc;width:24.4px;overflow:hidden;letter-spacing:0.25px;-webkit-text-stroke:0.15px #fbfffc;">0...</div>
<div class="t" style="left:1291.8px;top:372.4px;font-size:11px;line-height:13.2px;color:#fbfffc;width:35.8px;overflow:hidden;letter-spacing:0.25px;-webkit-text-stroke:0.15px #fbfffc;">000...</div>
<div class="t" style="left:377.1px;top:433.4px;font-size:11px;line-height:13.2px;color:#fbfffc;width:24.0px;overflow:hidden;letter-spacing:0.25px;-webkit-text-stroke:0.15px #fbfffc;">Es...</div>
<div class="t" style="left:421.9px;top:433.4px;font-size:11px;line-height:13.2px;color:#fbfffc;width:121.3px;overflow:hidden;letter-spacing:-0.1px;-webkit-text-stroke:0.15px #fbfffc;">Nighthawk / PFS - Jet ...</div>
<div class="t" style="left:587.6px;top:433.4px;font-size:11px;line-height:13.2px;color:#fbfffc;width:28.5px;overflow:hidden;letter-spacing:0.25px;-webkit-text-stroke:0.15px #fbfffc;">Ne...</div>
<div class="t" style="left:622.2px;top:433.4px;font-size:11px;line-height:13.2px;color:#fbfffc;width:43.3px;overflow:hidden;letter-spacing:0.25px;-webkit-text-stroke:0.15px #fbfffc;">Radix ...</div>
<div class="t" style="left:1182.6px;top:433.4px;font-size:11px;line-height:13.2px;color:#fbfffc;width:56.0px;overflow:hidden;letter-spacing:0.25px;-webkit-text-stroke:0.15px #fbfffc;">Aspier (...</div>
<div class="t" style="left:250.6px;top:494.4px;font-size:11px;line-height:13.2px;color:#fbfffc;width:56.6px;overflow:hidden;letter-spacing:0.25px;-webkit-text-stroke:0.15px #fbfffc;">1stpart-...</div>
<div class="t" style="left:313.0px;top:494.4px;font-size:11px;line-height:13.2px;color:#fbfffc;width:60.3px;overflow:hidden;letter-spacing:0.25px;-webkit-text-stroke:0.15px #fbfffc;">1stpart-r...</div>
<div class="t" style="left:23.0px;top:85.5px;font-size:12.4px;line-height:14.9px;color:#ececec;-webkit-text-stroke:0.35px #ececec;">V5</div>
<div class="t" style="left:59.0px;top:85.7px;font-size:12px;line-height:14.4px;color:#e4e4e4;letter-spacing:0.2px;">Video 5</div>
<div class="t" style="left:23.0px;top:172.5px;font-size:12.4px;line-height:14.9px;color:#ececec;-webkit-text-stroke:0.35px #ececec;">V4</div>
<div class="t" style="left:23.0px;top:219.0px;font-size:12.4px;line-height:14.9px;color:#ececec;-webkit-text-stroke:0.35px #ececec;">V3</div>
<div class="t" style="left:23.0px;top:249.5px;font-size:12.4px;line-height:14.9px;color:#ececec;-webkit-text-stroke:0.35px #ececec;">V2</div>
<div class="t" style="left:23.0px;top:291.3px;font-size:12.4px;line-height:14.9px;color:#ececec;-webkit-text-stroke:0.35px #ececec;">V1</div>
<div class="t" style="left:23.5px;top:337.7px;font-size:12.4px;line-height:14.9px;color:#ececec;-webkit-text-stroke:0.35px #ececec;">A1</div>
<div class="t" style="left:59.0px;top:337.9px;font-size:12px;line-height:14.4px;color:#e4e4e4;letter-spacing:0.2px;">Audio 1</div>
<div class="t" style="left:199.5px;top:339.1px;font-size:10.5px;line-height:12.6px;color:#6e6e72;">2.0</div>
<div class="t" style="left:21.0px;top:368.3px;font-size:10.5px;line-height:12.6px;color:#858588;width:20.0px;overflow:hidden;text-align:center;-webkit-text-stroke:0.25px #858588;">S</div>
<div class="t" style="left:51.2px;top:368.3px;font-size:10.5px;line-height:12.6px;color:#858588;width:20.0px;overflow:hidden;text-align:center;-webkit-text-stroke:0.25px #858588;">M</div>
<div class="t" style="left:23.5px;top:398.7px;font-size:12.4px;line-height:14.9px;color:#ececec;-webkit-text-stroke:0.35px #ececec;">A2</div>
<div class="t" style="left:59.0px;top:398.9px;font-size:12px;line-height:14.4px;color:#e4e4e4;letter-spacing:0.2px;">Audio 2</div>
<div class="t" style="left:199.5px;top:400.1px;font-size:10.5px;line-height:12.6px;color:#6e6e72;">2.0</div>
<div class="t" style="left:21.0px;top:429.3px;font-size:10.5px;line-height:12.6px;color:#858588;width:20.0px;overflow:hidden;text-align:center;-webkit-text-stroke:0.25px #858588;">S</div>
<div class="t" style="left:51.2px;top:429.3px;font-size:10.5px;line-height:12.6px;color:#858588;width:20.0px;overflow:hidden;text-align:center;-webkit-text-stroke:0.25px #858588;">M</div>
<div class="t" style="left:23.5px;top:459.7px;font-size:12.4px;line-height:14.9px;color:#ececec;-webkit-text-stroke:0.35px #ececec;">A3</div>
<div class="t" style="left:59.0px;top:459.9px;font-size:12px;line-height:14.4px;color:#e4e4e4;letter-spacing:0.2px;">Audio 3</div>
<div class="t" style="left:199.5px;top:461.1px;font-size:10.5px;line-height:12.6px;color:#6e6e72;">2.0</div>
<div class="t" style="left:21.0px;top:490.3px;font-size:10.5px;line-height:12.6px;color:#858588;width:20.0px;overflow:hidden;text-align:center;-webkit-text-stroke:0.25px #858588;">S</div>
<div class="t" style="left:51.2px;top:490.3px;font-size:10.5px;line-height:12.6px;color:#858588;width:20.0px;overflow:hidden;text-align:center;-webkit-text-stroke:0.25px #858588;">M</div>
<div class="t" style="left:23.5px;top:520.7px;font-size:12.4px;line-height:14.9px;color:#ececec;-webkit-text-stroke:0.35px #ececec;">A4</div>
<div class="t" style="left:59.0px;top:520.9px;font-size:12px;line-height:14.4px;color:#e4e4e4;letter-spacing:0.2px;">Audio 4</div>
<div class="t" style="left:199.5px;top:522.1px;font-size:10.5px;line-height:12.6px;color:#6e6e72;">2.0</div>
<div class="t" style="left:21.0px;top:551.3px;font-size:10.5px;line-height:12.6px;color:#858588;width:20.0px;overflow:hidden;text-align:center;-webkit-text-stroke:0.25px #858588;">S</div>
<div class="t" style="left:51.2px;top:551.3px;font-size:10.5px;line-height:12.6px;color:#858588;width:20.0px;overflow:hidden;text-align:center;-webkit-text-stroke:0.25px #858588;">M</div>
<div class="t" style="left:46.3px;top:26.6px;font-size:21.6px;line-height:25.9px;color:#e0e0e0;letter-spacing:-0.2px;">01:05:03:48</div>
<div class="t" style="left:530px;top:-8.3px;font-size:12.5px;line-height:15px;color:#a8a8ac;">Render</div>
<div class="t" style="left:592px;top:-8.3px;font-size:12.5px;line-height:15px;color:#a8a8ac;">Entire Timeline</div>
</div>
</body></html>
